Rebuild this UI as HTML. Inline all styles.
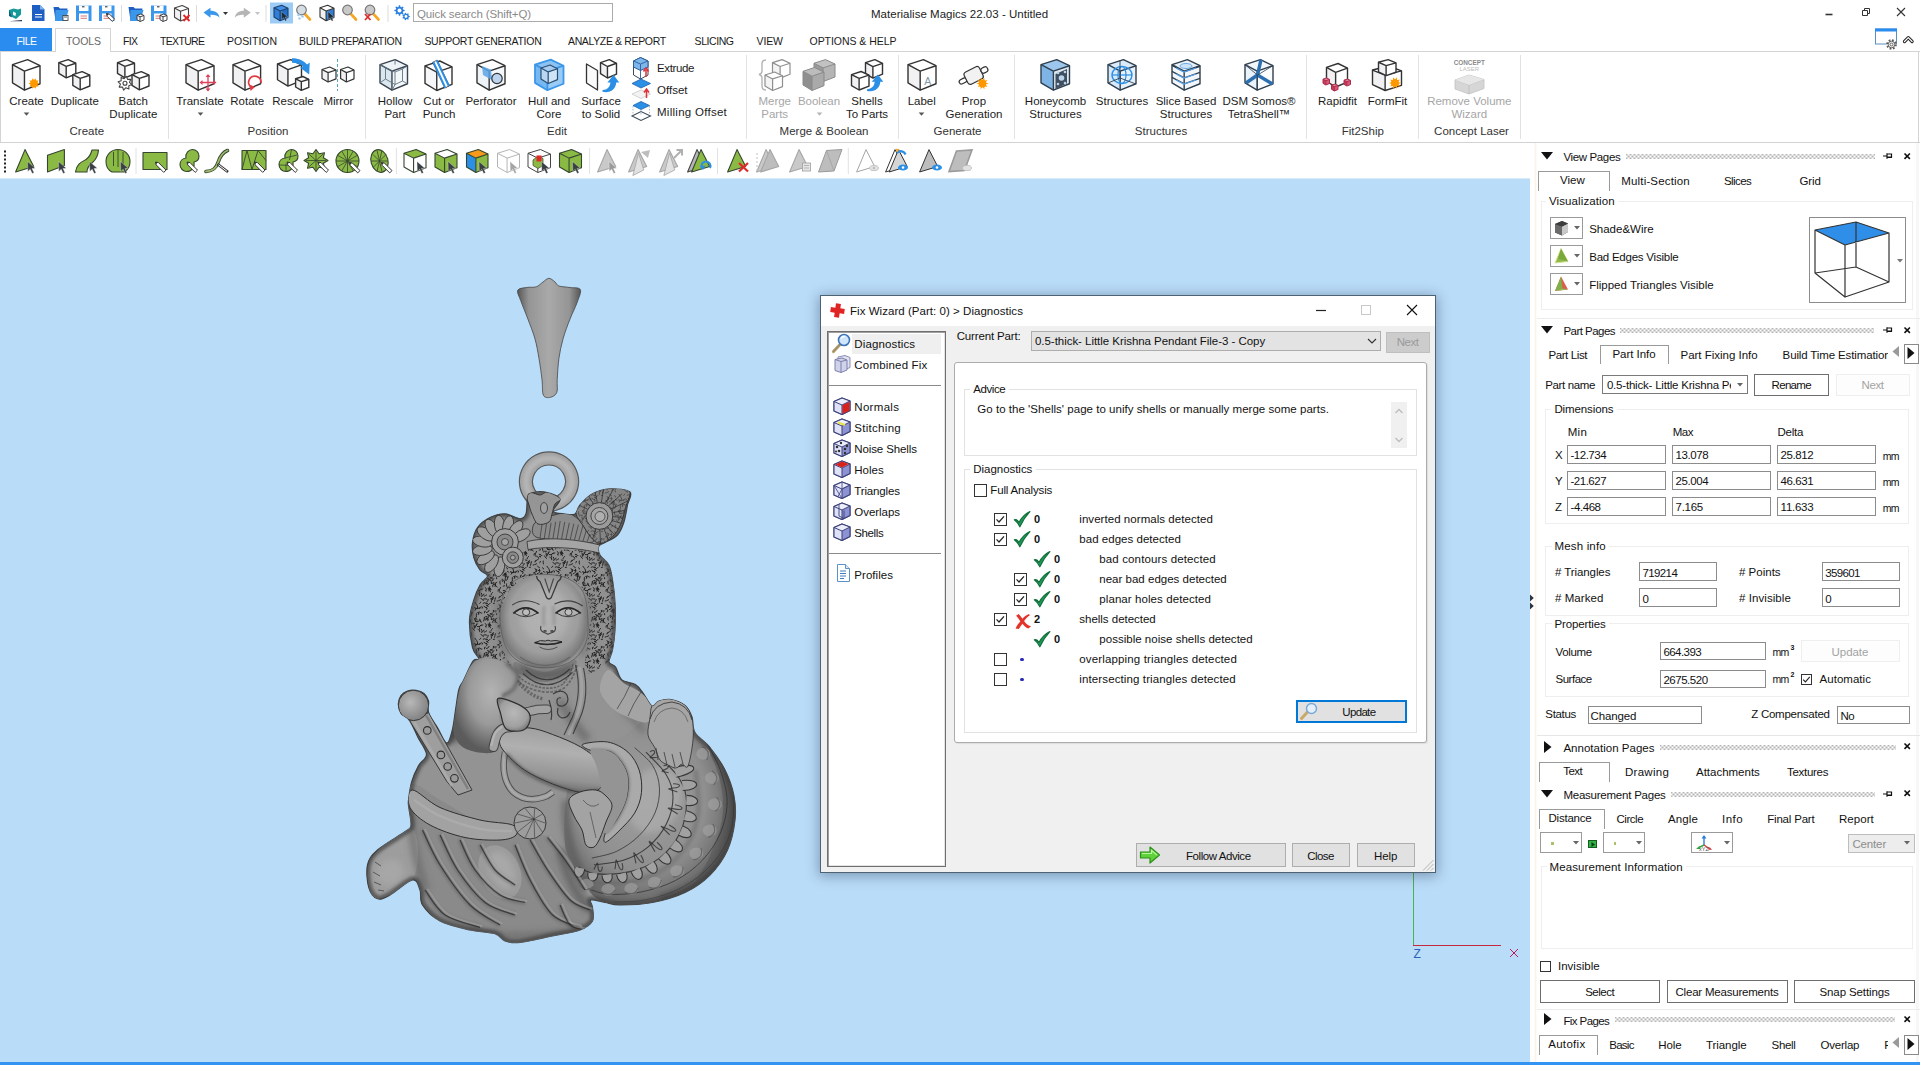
<!DOCTYPE html>
<html lang="en"><head><meta charset="utf-8"><title>Materialise Magics 22.03 - Untitled</title>
<style>
html,body{margin:0;padding:0;background:#fff}
body{width:1920px;height:1065px;overflow:hidden;position:relative;font-family:"Liberation Sans",sans-serif;font-size:11.5px;color:#1a1a1a}
.t{position:absolute;white-space:nowrap;line-height:14px;height:14px}
.a{position:absolute;overflow:visible}
div{box-sizing:border-box}
</style></head>
<body>
<div style="position:absolute;left:0px;top:0px;width:1920px;height:52px;background:#fff"></div>
<div style="position:absolute;left:413px;top:3px;width:200px;height:19px;border:1px solid #ababab;box-sizing:border-box;background:#fff"></div>
<span class="t" style="left:417px;top:7.02px;letter-spacing:-0.12px;color:#8a8a8a;">Quick search (Shift+Q)</span>
<span class="t" style="left:871px;top:6.62px;letter-spacing:0.02px;color:#222;">Materialise Magics 22.03 - Untitled</span>
<svg class="a" style="left:1815px;top:0" width="105" height="28" viewBox="0 0 105 28" fill="none" stroke="#333" stroke-width="1"><path d="M10.5 14.5h7" stroke-width="1.6"/><path d="M47.5 10.5h5v5h-5zM49.5 10.5v-2h5v5h-2" /><path d="M82 8l8 8M90 8l-8 8" stroke-width="1.1"/></svg>
<div style="position:absolute;left:0px;top:28px;width:52px;height:23px;background:#2b8cf0"></div>
<span class="t" style="left:16.5px;top:34.16px;font-size:10.5px;letter-spacing:-0.56px;color:#fff;">FILE</span>
<div style="position:absolute;left:0px;top:51px;width:1920px;height:1px;background:#d4d4d4"></div>
<div style="position:absolute;left:55px;top:28px;width:56px;height:24px;border:1px solid #d4d4d4;border-bottom:none;box-sizing:border-box;background:#fff"></div>
<span class="t" style="left:66px;top:34.16px;font-size:10.5px;letter-spacing:-0.1px;color:#666;">TOOLS</span>
<span class="t" style="left:123px;top:34.16px;font-size:10.5px;letter-spacing:-0.66px;color:#1a1a1a;">FIX</span>
<span class="t" style="left:160px;top:34.16px;font-size:10.5px;letter-spacing:-0.66px;color:#1a1a1a;">TEXTURE</span>
<span class="t" style="left:227px;top:34.16px;font-size:10.5px;letter-spacing:-0.02px;color:#1a1a1a;">POSITION</span>
<span class="t" style="left:299px;top:34.16px;font-size:10.5px;letter-spacing:-0.28px;color:#1a1a1a;">BUILD PREPARATION</span>
<span class="t" style="left:424.4px;top:34.16px;font-size:10.5px;letter-spacing:-0.27px;color:#1a1a1a;">SUPPORT GENERATION</span>
<span class="t" style="left:568px;top:34.16px;font-size:10.5px;letter-spacing:-0.36px;color:#1a1a1a;">ANALYZE &amp; REPORT</span>
<span class="t" style="left:694.6px;top:34.16px;font-size:10.5px;letter-spacing:-0.44px;color:#1a1a1a;">SLICING</span>
<span class="t" style="left:756.6px;top:34.16px;font-size:10.5px;letter-spacing:-0.14px;color:#1a1a1a;">VIEW</span>
<span class="t" style="left:809.5px;top:34.16px;font-size:10.5px;letter-spacing:-0.04px;color:#1a1a1a;">OPTIONS &amp; HELP</span>
<svg class="a" style="left:1873px;top:27px" width="47" height="25" viewBox="0 0 47 25" fill="none"><rect x="2.5" y="2" width="21" height="15" fill="#fff" stroke="#5b8fc4"/><rect x="2" y="1.5" width="22" height="3" fill="#2b8cf0"/><circle cx="18.500" cy="17.500" r="4.800" fill="#fff"/><circle cx="18.500" cy="17.500" r="4.200" fill="none" stroke="#5a5a5a" stroke-width="2.200" stroke-dasharray="1.700 1.600"/><circle cx="18.500" cy="17.500" r="3.300" fill="#eee" stroke="#5a5a5a" stroke-width="0.900"/><circle cx="18.500" cy="17.500" r="1.400" fill="#fff" stroke="#5a5a5a" stroke-width="0.900"/><path d="M31.500 14.500l3.800-3.800 3.800 3.800" stroke="#222" stroke-width="3.200" stroke-linejoin="round" stroke-linecap="round"/><path d="M31.500 14.500l3.800-3.800 3.800 3.800" stroke="#fff" stroke-width="1.200" stroke-linejoin="round" stroke-linecap="round"/></svg>
<div style="position:absolute;left:0px;top:52px;width:1920px;height:91px;background:#fff"></div>
<div style="position:absolute;left:0px;top:142px;width:1920px;height:1px;background:#d2d2d2"></div>
<div style="position:absolute;left:1918px;top:52px;width:1px;height:90px;background:#d4d4d4"></div>
<div style="position:absolute;left:0px;top:52px;width:1px;height:90px;background:#d4d4d4"></div>
<div style="position:absolute;left:168px;top:55px;width:1px;height:84px;background:#e2e2e2"></div>
<div style="position:absolute;left:365px;top:55px;width:1px;height:84px;background:#e2e2e2"></div>
<div style="position:absolute;left:746px;top:55px;width:1px;height:84px;background:#e2e2e2"></div>
<div style="position:absolute;left:897.5px;top:55px;width:1px;height:84px;background:#e2e2e2"></div>
<div style="position:absolute;left:1013.5px;top:55px;width:1px;height:84px;background:#e2e2e2"></div>
<div style="position:absolute;left:1305.7px;top:55px;width:1px;height:84px;background:#e2e2e2"></div>
<div style="position:absolute;left:1417.7px;top:55px;width:1px;height:84px;background:#e2e2e2"></div>
<div style="position:absolute;left:1520px;top:55px;width:1px;height:84px;background:#e2e2e2"></div>
<span class="t" style="left:9.25px;top:94.02px;color:#1c1c1c;">Create</span>
<svg class="a" style="left:23px;top:112px" width="7" height="4"><path d="M0.700 0.500h5.600l-2.800 3.200z" fill="#555"/></svg>
<span class="t" style="left:50.83px;top:94.02px;color:#1c1c1c;">Duplicate</span>
<span class="t" style="left:118.6px;top:94.02px;color:#1c1c1c;">Batch</span>
<span class="t" style="left:109.33px;top:107.02px;color:#1c1c1c;">Duplicate</span>
<span class="t" style="left:176.25px;top:94.02px;color:#1c1c1c;">Translate</span>
<svg class="a" style="left:196.5px;top:112px" width="7" height="4"><path d="M0.700 0.500h5.600l-2.800 3.200z" fill="#555"/></svg>
<span class="t" style="left:230.27px;top:94.02px;color:#1c1c1c;">Rotate</span>
<span class="t" style="left:272.23px;top:94.02px;color:#1c1c1c;">Rescale</span>
<span class="t" style="left:323.39px;top:94.02px;color:#1c1c1c;">Mirror</span>
<span class="t" style="left:377.73px;top:94.02px;color:#1c1c1c;">Hollow</span>
<span class="t" style="left:384.46px;top:107.02px;color:#1c1c1c;">Part</span>
<span class="t" style="left:423.35px;top:94.02px;color:#1c1c1c;">Cut or</span>
<span class="t" style="left:422.7px;top:107.02px;color:#1c1c1c;">Punch</span>
<span class="t" style="left:465.45px;top:94.02px;color:#1c1c1c;">Perforator</span>
<span class="t" style="left:527.91px;top:94.02px;color:#1c1c1c;">Hull and</span>
<span class="t" style="left:536.54px;top:107.02px;color:#1c1c1c;">Core</span>
<span class="t" style="left:581.2px;top:94.02px;color:#1c1c1c;">Surface</span>
<span class="t" style="left:581.83px;top:107.02px;color:#1c1c1c;">to Solid</span>
<span class="t" style="left:758.41px;top:94.02px;color:#a6a6a6;">Merge</span>
<span class="t" style="left:761.29px;top:107.02px;color:#a6a6a6;">Parts</span>
<span class="t" style="left:797.91px;top:94.02px;color:#a6a6a6;">Boolean</span>
<svg class="a" style="left:815.5px;top:112px" width="7" height="4"><path d="M0.700 0.500h5.600l-2.800 3.200z" fill="#b5b5b5"/></svg>
<span class="t" style="left:851.34px;top:94.02px;color:#1c1c1c;">Shells</span>
<span class="t" style="left:845.92px;top:107.02px;color:#1c1c1c;">To Parts</span>
<span class="t" style="left:907.64px;top:94.02px;color:#1c1c1c;">Label</span>
<svg class="a" style="left:918.2px;top:112px" width="7" height="4"><path d="M0.700 0.500h5.600l-2.800 3.200z" fill="#555"/></svg>
<span class="t" style="left:961.86px;top:94.02px;color:#1c1c1c;">Prop</span>
<span class="t" style="left:945.57px;top:107.02px;color:#1c1c1c;">Generation</span>
<span class="t" style="left:1024.83px;top:94.02px;color:#1c1c1c;">Honeycomb</span>
<span class="t" style="left:1029.31px;top:107.02px;color:#1c1c1c;">Structures</span>
<span class="t" style="left:1095.81px;top:94.02px;color:#1c1c1c;">Structures</span>
<span class="t" style="left:1155.64px;top:94.02px;color:#1c1c1c;">Slice Based</span>
<span class="t" style="left:1159.81px;top:107.02px;color:#1c1c1c;">Structures</span>
<span class="t" style="left:1222.5px;top:94.02px;color:#1c1c1c;">DSM Somos®</span>
<span class="t" style="left:1227.69px;top:107.02px;color:#1c1c1c;">TetraShell™</span>
<span class="t" style="left:1318.01px;top:94.02px;color:#1c1c1c;">Rapidfit</span>
<span class="t" style="left:1367.7px;top:94.02px;color:#1c1c1c;">FormFit</span>
<span class="t" style="left:1427.13px;top:94.02px;color:#a6a6a6;">Remove Volume</span>
<span class="t" style="left:1451.41px;top:107.02px;color:#a6a6a6;">Wizard</span>
<span class="t" style="left:69.55px;top:124.02px;color:#333;">Create</span>
<span class="t" style="left:247.55px;top:124.02px;color:#333;">Position</span>
<span class="t" style="left:547.09px;top:124.02px;color:#333;">Edit</span>
<span class="t" style="left:779.59px;top:124.02px;color:#333;">Merge &amp; Boolean</span>
<span class="t" style="left:933.55px;top:124.02px;color:#333;">Generate</span>
<span class="t" style="left:1134.81px;top:124.02px;color:#333;">Structures</span>
<span class="t" style="left:1341.71px;top:124.02px;color:#333;">Fit2Ship</span>
<span class="t" style="left:1434.12px;top:124.02px;color:#333;">Concept Laser</span>
<span class="t" style="left:657px;top:60.52px;letter-spacing:-0.37px;color:#1c1c1c;">Extrude</span>
<span class="t" style="left:657px;top:82.52px;letter-spacing:0.01px;color:#1c1c1c;">Offset</span>
<span class="t" style="left:657px;top:104.52px;letter-spacing:0.27px;color:#1c1c1c;">Milling Offset</span>
<svg class="a" style="left:0;top:0" width="420" height="28" viewBox="0 0 420 28" fill="none">
<path d="M9 10l4.500-1.500 4.500 1 3-1v6l-5 4.500-7-3.500z" fill="#159a9a"/><path d="M13 11.500l3 1.500-0.500 3-2.500-1z" fill="#fff"/><path d="M9 10v6l3 1.500z" fill="#0b5f7a"/><path d="M9 21.300l13-1.200v1.200z" fill="#1a2a4a"/>
<path d="M32 5h8l4.500 4.500v11.500h-12.500z" fill="#1f5fc4"/><path d="M40 5l4.500 4.500h-4.500z" fill="#7db4f0"/><path d="M35 14.500h7M35 17h7" stroke="#fff" stroke-width="1"/>
<path d="M53.500 7h5l1.500 1.500h7.500l-2 12h-10z" fill="#1f5fc4"/><path d="M55.500 10h13l-3 11h-10.500z" fill="#3b97ea"/><rect x="63" y="15.500" width="5" height="5" fill="#fff" stroke="#333" stroke-width="0.800"/><path d="M64 17h3" stroke="#333" stroke-width="0.800"/>
<path d="M76 5.500h15.500v15.500h-15.500z" fill="#3b97ea"/><rect x="79" y="5.500" width="9.500" height="5.500" fill="#fff"/><rect x="79" y="13.500" width="9.500" height="7.500" fill="#fff"/><path d="M80.5 16h6.500M80.5 18.300h6.500" stroke="#d05050" stroke-width="0.800"/><rect x="82" y="6.300" width="2.500" height="1" fill="#222"/>
<path d="M99 5.500h15.500v15.500h-15.500z" fill="#3b97ea"/><rect x="102" y="5.500" width="9.500" height="5.500" fill="#fff"/><rect x="102" y="13.500" width="9.500" height="7.500" fill="#fff"/><path d="M103.5 16h6.500M103.5 18.300h6.500" stroke="#d05050" stroke-width="0.800"/><rect x="105" y="6.300" width="2.500" height="1" fill="#222"/>
<path transform="translate(106.5 13.5)" d="M0 0l3 0.600 5 5-2.300 2.300-5-5z" fill="#fff" stroke="#333" stroke-width="1"/><path transform="translate(106.5 13.5)" d="M0 0l2.200 0.500-1.600 1.700z" fill="#333"/>
<path d="M121.500 5v17" stroke="#dcdcdc" stroke-width="1"/>
<path d="M128.500 7h5l1.500 1.500h7.500l-2 12h-10z" fill="#1f5fc4"/><path d="M130.500 10h13l-3 11h-10.500z" fill="#3b97ea"/>
<path d="M137 15.24L140.04 16.81L140.04 21.5L137 19.7Z" fill="#f1f1f3"/><path d="M140.04 16.81L144 15.5L144 19.93L140.04 21.5Z" fill="#ffffff"/><path d="M137 15.24L140.85 14L144 15.5L140.04 16.81Z" fill="#ffffff"/><path d="M140.85 14L144 15.5L144 19.93L140.04 21.5L137 19.7L137 15.24Z" fill="none" stroke="#333333" stroke-width="0.9" stroke-linejoin="round"/><path d="M137 15.24L140.04 16.81L144 15.5M140.04 16.81L140.04 21.5" fill="none" stroke="#333333" stroke-width="0.9" stroke-linejoin="round"/>
<path d="M151 5.500h15.500v15.500h-15.500z" fill="#3b97ea"/><rect x="154" y="5.500" width="9.500" height="5.500" fill="#fff"/><rect x="154" y="13.500" width="9.500" height="7.500" fill="#fff"/><path d="M155.5 16h6.500M155.5 18.300h6.500" stroke="#d05050" stroke-width="0.800"/><rect x="157" y="6.300" width="2.500" height="1" fill="#222"/>
<path d="M160 15.24L163.04 16.81L163.04 21.5L160 19.7Z" fill="#f1f1f3"/><path d="M163.04 16.81L167 15.5L167 19.93L163.04 21.5Z" fill="#ffffff"/><path d="M160 15.24L163.85 14L167 15.5L163.04 16.81Z" fill="#ffffff"/><path d="M163.85 14L167 15.5L167 19.93L163.04 21.5L160 19.7L160 15.24Z" fill="none" stroke="#333333" stroke-width="0.9" stroke-linejoin="round"/><path d="M160 15.24L163.04 16.81L167 15.5M163.04 16.81L163.04 21.5" fill="none" stroke="#333333" stroke-width="0.9" stroke-linejoin="round"/>
<path d="M174.5 8.06L180.59 11.31L180.59 21L174.5 17.28Z" fill="#f1f1f3"/><path d="M180.59 11.31L188.5 8.6L188.5 17.75L180.59 21Z" fill="#ffffff"/><path d="M174.5 8.06L182.2 5.5L188.5 8.6L180.59 11.31Z" fill="#ffffff"/><path d="M182.2 5.5L188.5 8.6L188.5 17.75L180.59 21L174.5 17.28L174.5 8.06Z" fill="none" stroke="#444" stroke-width="1.1" stroke-linejoin="round"/><path d="M174.5 8.06L180.59 11.31L188.5 8.6M180.59 11.31L180.59 21" fill="none" stroke="#444" stroke-width="1.1" stroke-linejoin="round"/>
<path d="M183.500 15l6 6M189.500 15l-6 6" stroke="#e02a2a" stroke-width="1.800"/>
<path d="M196.500 5v17" stroke="#dcdcdc" stroke-width="1"/>
<path d="M203.500 12.500l7-4.800v3c5 0 8.500 2.500 9 7-2-2.500-5-3.200-9-3v3z" fill="#3b97ea"/><path d="M223 12h5l-2.500 3z" fill="#333"/>
<path d="M250.800 12.500l-7-4.800v3c-5 0-8.500 2.500-9 7 2-2.500 5-3.200 9-3v3z" fill="#b5b5b5"/><path d="M255 12h5l-2.500 3z" fill="#c2c2c2"/>
<path d="M266 5v17" stroke="#dcdcdc" stroke-width="1"/>
<rect x="270" y="2.500" width="23" height="21" fill="#9ccbf6"/>
<path d="M274 7.76L280.09 11.01L280.09 20.7L274 16.98Z" fill="#2f7fd8"/><path d="M280.09 11.01L288 8.3L288 17.45L280.09 20.7Z" fill="#1f6fc8"/><path d="M274 7.76L281.7 5.2L288 8.3L280.09 11.01Z" fill="#3f8fe8"/><path d="M281.7 5.2L288 8.3L288 17.45L280.09 20.7L274 16.98L274 7.76Z" fill="none" stroke="#1f3f6a" stroke-width="1.1" stroke-linejoin="round"/><path d="M274 7.76L280.09 11.01L288 8.3M280.09 11.01L280.09 20.7" fill="none" stroke="#1f3f6a" stroke-width="1.1" stroke-linejoin="round"/>
<path transform="translate(281.5 11.5) scale(0.8)" d="M0 0l0.300 10 2.400-2.300 2 4.300 1.800-0.800-2-4.200 3.300-0.200z" fill="#1a2a3a" stroke="#fff" stroke-width="0.300"/>
<path d="M304.5 13.5l5.500 6" stroke="#f5a623" stroke-width="2.600" stroke-linecap="round"/><circle cx="301.5" cy="10" r="4.800" fill="#d5dde5" stroke="#777" stroke-width="1.200"/>
<circle cx="298.500" cy="15" r="1.300" fill="#9ccbf6"/><circle cx="302.500" cy="16.500" r="1.300" fill="#9ccbf6"/><circle cx="299.500" cy="18.500" r="1.200" fill="#9ccbf6"/>
<path d="M320 7.76L326.09 11.01L326.09 20.7L320 16.98Z" fill="#f1f1f3"/><path d="M326.09 11.01L334 8.3L334 17.45L326.09 20.7Z" fill="#2f7fd8"/><path d="M320 7.76L327.7 5.2L334 8.3L326.09 11.01Z" fill="#ffffff"/><path d="M327.7 5.2L334 8.3L334 17.45L326.09 20.7L320 16.98L320 7.76Z" fill="none" stroke="#333" stroke-width="1.1" stroke-linejoin="round"/><path d="M320 7.76L326.09 11.01L334 8.3M326.09 11.01L326.09 20.7" fill="none" stroke="#333" stroke-width="1.1" stroke-linejoin="round"/>
<path transform="translate(328 11.5) scale(0.8)" d="M0 0l0.300 10 2.400-2.300 2 4.300 1.800-0.800-2-4.200 3.300-0.200z" fill="#1a2a3a" stroke="#fff" stroke-width="0.300"/>
<path d="M350.5 13.5l5.500 6" stroke="#f5a623" stroke-width="2.600" stroke-linecap="round"/><circle cx="347.5" cy="10" r="4.800" fill="#c9c9c9" stroke="#777" stroke-width="1.200"/>
<path d="M373 13.5l5.500 6" stroke="#f5a623" stroke-width="2.600" stroke-linecap="round"/><circle cx="370" cy="10" r="4.800" fill="#c9c9c9" stroke="#777" stroke-width="1.200"/>
<path d="M365 14l5.500 6M370.500 14l-5.500 6" stroke="#e02a2a" stroke-width="1.800"/>
<path d="M388 5v17" stroke="#dcdcdc" stroke-width="1"/>
<path d="M404.66 9.88L404.66 11.12L403.11 11.51L402.76 12.34L403.59 13.71L402.71 14.59L401.34 13.76L400.51 14.11L400.12 15.66L398.88 15.66L398.49 14.11L397.66 13.76L396.29 14.59L395.41 13.71L396.24 12.34L395.89 11.51L394.34 11.12L394.34 9.88L395.89 9.49L396.24 8.66L395.41 7.29L396.29 6.41L397.66 7.24L398.49 6.89L398.88 5.34L400.12 5.34L400.51 6.89L401.34 7.24L402.71 6.41L403.59 7.29L402.76 8.66L403.11 9.49Z" fill="#2b7fe0"/><circle cx="399.5" cy="10.5" r="2" fill="#fff"/>
<path d="M409.77 16.05L409.77 16.95L408.59 17.38L408.31 17.97L408.71 19.17L408 19.73L406.92 19.08L406.29 19.22L405.6 20.28L404.72 20.08L404.56 18.83L404.05 18.42L402.8 18.55L402.4 17.73L403.28 16.83L403.28 16.17L402.4 15.27L402.8 14.45L404.05 14.58L404.56 14.17L404.72 12.92L405.6 12.72L406.29 13.78L406.92 13.92L408 13.27L408.71 13.83L408.31 15.03L408.59 15.62Z" fill="#2b7fe0"/><circle cx="406" cy="16.5" r="1.4" fill="#fff"/>
</svg>
<svg class="a" style="left:0;top:0" width="1530" height="142" viewBox="0 0 1530 142" fill="none">
<path d="M12.5 64.65L24.46 71.08L24.46 90.2L12.5 82.86Z" fill="#f1f1f3"/><path d="M24.46 71.08L40 65.72L40 83.77L24.46 90.2Z" fill="#ffffff"/><path d="M12.5 64.65L27.62 59.6L40 65.72L24.46 71.08Z" fill="#ffffff"/><path d="M27.62 59.6L40 65.72L40 83.77L24.46 90.2L12.5 82.86L12.5 64.65Z" fill="none" stroke="#333333" stroke-width="1.4" stroke-linejoin="round"/><path d="M12.5 64.65L24.46 71.08L40 65.72M24.46 71.08L24.46 90.2" fill="none" stroke="#333333" stroke-width="1.4" stroke-linejoin="round"/>
<path d="M39.6 83.5L37.23 84.55L38.53 86.79L36 86.25L35.73 88.83L34 86.9L32.27 88.83L32 86.25L29.47 86.79L30.77 84.55L28.4 83.5L30.77 82.45L29.47 80.21L32 80.75L32.27 78.17L34 80.1L35.73 78.17L36 80.75L38.53 80.21L37.23 82.45Z" fill="#ff9800"/><circle cx="34" cy="83.5" r="3.7" fill="#ff9800"/>
<path d="M58.8 62.6L66.19 66.42L66.19 77.8L58.8 73.43Z" fill="#f1f1f3"/><path d="M66.19 66.42L75.8 63.24L75.8 73.98L66.19 77.8Z" fill="#ffffff"/><path d="M58.8 62.6L68.15 59.6L75.8 63.24L66.19 66.42Z" fill="#ffffff"/><path d="M68.15 59.6L75.8 63.24L75.8 73.98L66.19 77.8L58.8 73.43L58.8 62.6Z" fill="none" stroke="#333333" stroke-width="1.4" stroke-linejoin="round"/><path d="M58.8 62.6L66.19 66.42L75.8 63.24M66.19 66.42L66.19 77.8" fill="none" stroke="#333333" stroke-width="1.4" stroke-linejoin="round"/>
<path d="M72.8 74.6L80.19 78.42L80.19 89.8L72.8 85.43Z" fill="#f1f1f3"/><path d="M80.19 78.42L89.8 75.24L89.8 85.98L80.19 89.8Z" fill="#ffffff"/><path d="M72.8 74.6L82.15 71.6L89.8 75.24L80.19 78.42Z" fill="#ffffff"/><path d="M82.15 71.6L89.8 75.24L89.8 85.98L80.19 89.8L72.8 85.43L72.8 74.6Z" fill="none" stroke="#333333" stroke-width="1.4" stroke-linejoin="round"/><path d="M72.8 74.6L80.19 78.42L89.8 75.24M80.19 78.42L80.19 89.8" fill="none" stroke="#333333" stroke-width="1.4" stroke-linejoin="round"/>
<path d="M117.5 62.6L124.89 66.42L124.89 77.8L117.5 73.43Z" fill="#f1f1f3"/><path d="M124.89 66.42L134.5 63.24L134.5 73.98L124.89 77.8Z" fill="#ffffff"/><path d="M117.5 62.6L126.85 59.6L134.5 63.24L124.89 66.42Z" fill="#ffffff"/><path d="M126.85 59.6L134.5 63.24L134.5 73.98L124.89 77.8L117.5 73.43L117.5 62.6Z" fill="none" stroke="#333333" stroke-width="1.4" stroke-linejoin="round"/><path d="M117.5 62.6L124.89 66.42L134.5 63.24M124.89 66.42L124.89 77.8" fill="none" stroke="#333333" stroke-width="1.4" stroke-linejoin="round"/>
<path d="M132 74.6L139.4 78.42L139.4 89.8L132 85.43Z" fill="#f1f1f3"/><path d="M139.4 78.42L149 75.24L149 85.98L139.4 89.8Z" fill="#ffffff"/><path d="M132 74.6L141.35 71.6L149 75.24L139.4 78.42Z" fill="#ffffff"/><path d="M141.35 71.6L149 75.24L149 85.98L139.4 89.8L132 85.43L132 74.6Z" fill="none" stroke="#333333" stroke-width="1.4" stroke-linejoin="round"/><path d="M132 74.6L139.4 78.42L149 75.24M139.4 78.42L139.4 89.8" fill="none" stroke="#333333" stroke-width="1.4" stroke-linejoin="round"/>
<path d="M131.87 84.57L128.82 85.76L128.89 89.02L125.9 87.71L123.63 90.07L122.44 87.02L119.18 87.09L120.49 84.1L118.13 81.83L121.18 80.64L121.11 77.38L124.1 78.69L126.37 76.33L127.56 79.38L130.82 79.31L129.51 82.3Z" fill="#fff" stroke="#444" stroke-width="1.1" stroke-linejoin="round"/><circle cx="125" cy="83.200" r="2" fill="#fff" stroke="#444" stroke-width="1.100"/>
<path d="M186 64.65L198.18 71.08L198.18 90.2L186 82.86Z" fill="#f1f1f3"/><path d="M198.18 71.08L214 65.72L214 83.77L198.18 90.2Z" fill="#ffffff"/><path d="M186 64.65L201.4 59.6L214 65.72L198.18 71.08Z" fill="#ffffff"/><path d="M201.4 59.6L214 65.72L214 83.77L198.18 90.2L186 82.86L186 64.65Z" fill="none" stroke="#333333" stroke-width="1.4" stroke-linejoin="round"/><path d="M186 64.65L198.18 71.08L214 65.72M198.18 71.08L198.18 90.2" fill="none" stroke="#333333" stroke-width="1.4" stroke-linejoin="round"/>
<path d="M201 82.500h14M208 75.500v15" stroke="#e0405a" stroke-width="1.300"/><path d="M199.500 82.500l3-2.500v5zM216.500 82.500l-3-2.500v5zM208 74l-2.500 3h5zM208 91.500l-2.500-3h5z" fill="#e0405a"/>
<path d="M233 64.65L245.01 71.08L245.01 90.2L233 82.86Z" fill="#f1f1f3"/><path d="M245.01 71.08L260.6 65.72L260.6 83.77L245.01 90.2Z" fill="#ffffff"/><path d="M233 64.65L248.18 59.6L260.6 65.72L245.01 71.08Z" fill="#ffffff"/><path d="M248.18 59.6L260.6 65.72L260.6 83.77L245.01 90.2L233 82.86L233 64.65Z" fill="none" stroke="#333333" stroke-width="1.4" stroke-linejoin="round"/><path d="M233 64.65L245.01 71.08L260.6 65.72M245.01 71.08L245.01 90.2" fill="none" stroke="#333333" stroke-width="1.4" stroke-linejoin="round"/>
<path d="M251.500 87.500a6.200 6.200 0 1 1 9.500-4.500" stroke="#e03a44" stroke-width="1.800"/><path d="M249.500 84.500l5.500 2.500-4.500 4z" fill="#e03a44"/>
<path d="M277.5 63.97L287.94 69.54L287.94 86.1L277.5 79.74Z" fill="#f1f1f3"/><path d="M287.94 69.54L301.5 64.9L301.5 80.53L287.94 86.1Z" fill="#ffffff"/><path d="M277.5 63.97L290.7 59.6L301.5 64.9L287.94 69.54Z" fill="#ffffff"/><path d="M290.7 59.6L301.5 64.9L301.5 80.53L287.94 86.1L277.5 79.74L277.5 63.97Z" fill="none" stroke="#333333" stroke-width="1.4" stroke-linejoin="round"/><path d="M277.5 63.97L287.94 69.54L301.5 64.9M287.94 69.54L287.94 86.1" fill="none" stroke="#333333" stroke-width="1.4" stroke-linejoin="round"/>
<path d="M292 58.200c7 0 12 2.500 15 6.300l2.700-2-0.500 12-9-6.700 2.800-1.300c-2.500-2.200-6.500-3.500-11-3.700z" fill="#2b8fe6"/>
<path d="M295.6 78.78L301.34 81.67L301.34 90.3L295.6 86.99Z" fill="#f1f1f3"/><path d="M301.34 81.67L308.8 79.26L308.8 87.4L301.34 90.3Z" fill="#ffffff"/><path d="M295.6 78.78L302.86 76.5L308.8 79.26L301.34 81.67Z" fill="#ffffff"/><path d="M302.86 76.5L308.8 79.26L308.8 87.4L301.34 90.3L295.6 86.99L295.6 78.78Z" fill="none" stroke="#333333" stroke-width="1.4" stroke-linejoin="round"/><path d="M295.6 78.78L301.34 81.67L308.8 79.26M301.34 81.67L301.34 90.3" fill="none" stroke="#333333" stroke-width="1.4" stroke-linejoin="round"/>
<path d="M322 69.47L328.09 72.62L328.09 82L322 78.4Z" fill="#f1f1f3"/><path d="M328.09 72.62L336 70L336 78.85L328.09 82Z" fill="#ffffff"/><path d="M322 69.47L329.7 67L336 70L328.09 72.62Z" fill="#ffffff"/><path d="M329.7 67L336 70L336 78.85L328.09 82L322 78.4L322 69.47Z" fill="none" stroke="#333333" stroke-width="1.2" stroke-linejoin="round"/><path d="M322 69.47L328.09 72.62L336 70M328.09 72.62L328.09 82" fill="none" stroke="#333333" stroke-width="1.2" stroke-linejoin="round"/>
<path d="M340.6 69.47L346.43 72.62L346.43 82L340.6 78.4Z" fill="#f1f1f3"/><path d="M346.43 72.62L354 70L354 78.85L346.43 82Z" fill="#ffffff"/><path d="M340.6 69.47L347.97 67L354 70L346.43 72.62Z" fill="#ffffff"/><path d="M347.97 67L354 70L354 78.85L346.43 82L340.6 78.4L340.6 69.47Z" fill="none" stroke="#333333" stroke-width="1.2" stroke-linejoin="round"/><path d="M340.6 69.47L346.43 72.62L354 70M346.43 72.62L346.43 82" fill="none" stroke="#333333" stroke-width="1.2" stroke-linejoin="round"/>
<path d="M337.500 59v32" stroke="#5aa7b8" stroke-width="1" stroke-dasharray="3 2"/>
<path d="M380 64.65L391.96 71.08L391.96 90.2L380 82.86Z" fill="#dbe7ef"/><path d="M391.96 71.08L407.5 65.72L407.5 83.77L391.96 90.2Z" fill="#f3f7fa"/><path d="M380 64.65L395.12 59.6L407.5 65.72L391.96 71.08Z" fill="#eef3f7"/><path d="M395.12 59.6L407.5 65.72L407.5 83.77L391.96 90.2L380 82.86L380 64.65Z" fill="none" stroke="#3a4450" stroke-width="1.4" stroke-linejoin="round"/><path d="M380 64.65L391.96 71.08L407.5 65.72M391.96 71.08L391.96 90.2" fill="none" stroke="#3a4450" stroke-width="1.4" stroke-linejoin="round"/>
<path d="M385.500 67.500l9.500 4.500 7.500-3M395 72v12.500M385.500 67.500v11.500l9.500 5.500 7.500-3.500v-12.500M380 64.500l5.500 3M407.500 65.700l-5 3.300M392 90.200l3-5.700M380 82.800l5.500-3.800M407.500 83.800l-5-2.800M395.100 59.600l-0.100 5" stroke="#5f7382" stroke-width="0.900"/>
<path d="M425 65.87L436.75 72.06L436.75 90.5L425 83.42Z" fill="#f6f6f8"/><path d="M436.75 72.06L452 66.9L452 84.31L436.75 90.5Z" fill="#ffffff"/><path d="M425 65.87L439.85 61L452 66.9L436.75 72.06Z" fill="#ffffff"/><path d="M439.85 61L452 66.9L452 84.31L436.75 90.5L425 83.42L425 65.87Z" fill="none" stroke="#333333" stroke-width="1.4" stroke-linejoin="round"/><path d="M425 65.87L436.75 72.06L452 66.9M436.75 72.06L436.75 90.5" fill="none" stroke="#333333" stroke-width="1.4" stroke-linejoin="round"/>
<path d="M432.600 62.300l4.600-2.200 12.200 25.600-4.600 2.400z" fill="#fff" stroke="#333" stroke-width="0.700"/><path d="M433.400 62l11.900 25.800M436.700 60.400l12.100 25.600" stroke="#2b8fe6" stroke-width="1.900"/>
<path d="M477 64.65L489.18 71.08L489.18 90.2L477 82.86Z" fill="#eef3f8"/><path d="M489.18 71.08L505 65.72L505 83.77L489.18 90.2Z" fill="#f4f7fb"/><path d="M477 64.65L492.4 59.6L505 65.72L489.18 71.08Z" fill="#fdfdfd"/><path d="M492.4 59.6L505 65.72L505 83.77L489.18 90.2L477 82.86L477 64.65Z" fill="none" stroke="#333333" stroke-width="1.4" stroke-linejoin="round"/><path d="M477 64.65L489.18 71.08L505 65.72M489.18 71.08L489.18 90.2" fill="none" stroke="#333333" stroke-width="1.4" stroke-linejoin="round"/>
<path d="M482 66l9 3.500 1 10.500-9-5z" fill="#5aa3e8" opacity="0.850"/><circle cx="497" cy="78.500" r="5.200" fill="#bcd4f0" stroke="#333" stroke-width="1.200"/>
<path d="M535 64.65L547.4 71.08L547.4 90.2L535 82.86Z" fill="#78b8f0"/><path d="M547.4 71.08L563.5 65.72L563.5 83.77L547.4 90.2Z" fill="#9acbf5"/><path d="M535 64.65L550.67 59.6L563.5 65.72L547.4 71.08Z" fill="#8cc3f3"/><path d="M550.67 59.6L563.5 65.72L563.5 83.77L547.4 90.2L535 82.86L535 64.65Z" fill="none" stroke="#3b97ea" stroke-width="1.8" stroke-linejoin="round"/><path d="M535 64.65L547.4 71.08L563.5 65.72M547.4 71.08L547.4 90.2" fill="none" stroke="#3b97ea" stroke-width="1.8" stroke-linejoin="round"/>
<path d="M541 68.05L548.18 71.94L548.18 83.5L541 79.06Z" fill="#b9d6f2"/><path d="M548.18 71.94L557.5 68.7L557.5 79.61L548.18 83.5Z" fill="#cfe3f7"/><path d="M541 68.05L550.08 65L557.5 68.7L548.18 71.94Z" fill="#a8ccf0"/><path d="M550.08 65L557.5 68.7L557.5 79.61L548.18 83.5L541 79.06L541 68.05Z" fill="none" stroke="#2a4f73" stroke-width="1.2" stroke-linejoin="round"/><path d="M541 68.05L548.18 71.94L557.5 68.7M548.18 71.94L548.18 83.5" fill="none" stroke="#2a4f73" stroke-width="1.2" stroke-linejoin="round"/>
<path d="M586.500 64l11 6.500v19.500l-11-7z" fill="#fafafa" stroke="#333" stroke-width="1.300" stroke-linejoin="round"/>
<path d="M600.5 62.64L607.46 66.5L607.46 78L600.5 73.58Z" fill="#f1f1f3"/><path d="M607.46 66.5L616.5 63.28L616.5 74.14L607.46 78Z" fill="#ffffff"/><path d="M600.5 62.64L609.3 59.6L616.5 63.28L607.46 66.5Z" fill="#ffffff"/><path d="M609.3 59.6L616.5 63.28L616.5 74.14L607.46 78L600.5 73.58L600.5 62.64Z" fill="none" stroke="#333333" stroke-width="1.4" stroke-linejoin="round"/><path d="M600.5 62.64L607.46 66.5L616.5 63.28M607.46 66.5L607.46 78" fill="none" stroke="#333333" stroke-width="1.4" stroke-linejoin="round"/>
<path transform="translate(602.5 75) scale(1.08)" d="M0 14c4.500-0.300 7-2.800 7.300-7h-2.800l5.800-7 5.200 7h-2.800c-0.500 6.500-5.500 10-12.700 8.600z" fill="#2b8fe6"/>
<path d="M633.500 61l7-3.500 7.500 3.500v14l-7.500 4-7-4z" fill="#fff" stroke="#3a4a5a" stroke-width="1"/><path d="M633.500 61l7-3.500 7.500 3.500v6l-7.500 3.500-7-3.500z" fill="#7db6ea" stroke="#2a5f9a" stroke-width="1"/><path d="M633.500 61l7 3 7.500-3M640.500 64v15" stroke="#2a5f9a" stroke-width="0.900"/><path d="M646 77v-7M643.500 71.500l2.500-3.500 2.500 3.500" stroke="#e0303a" stroke-width="1.500"/>
<path d="M632 83.500l9-4.500 9.500 4.500-9.500 4.500z" fill="#2b8fe6" stroke="#1f5fa8" stroke-width="0.800"/><path d="M632 94l9-4 9.500 4-9.500 4.500z" fill="#f3f3f3" stroke="#c9c9c9" stroke-width="0.800"/><path d="M646.500 98v-8M644 92.500l2.500-3.500 2.500 3.500" stroke="#e0303a" stroke-width="1.500"/>
<path d="M633 105.500l8-4 8.500 4-8.500 4z" fill="#2b8fe6" stroke="#1f5fa8" stroke-width="0.800"/><path d="M632 116l9-4.500 9.500 4.500-9.500 4.500z" fill="#fff" stroke="#3a4a5a" stroke-width="1.100"/><path d="M633 106v9M649.500 106v9M641 110v6" stroke="#9ab" stroke-width="0.800" stroke-dasharray="1.500 1.500"/>
<path d="M772.5 62.65L780.11 66.54L780.11 78.1L772.5 73.66Z" fill="#f4f4f4"/><path d="M780.11 66.54L790 63.3L790 74.22L780.11 78.1Z" fill="#ffffff"/><path d="M772.5 62.65L782.12 59.6L790 63.3L780.11 66.54Z" fill="#ffffff"/><path d="M782.12 59.6L790 63.3L790 74.22L780.11 78.1L772.5 73.66L772.5 62.65Z" fill="none" stroke="#8f8f8f" stroke-width="1.2" stroke-linejoin="round"/><path d="M772.5 62.65L780.11 66.54L790 63.3M780.11 66.54L780.11 78.1" fill="none" stroke="#8f8f8f" stroke-width="1.2" stroke-linejoin="round"/>
<path d="M765 75.05L772.61 78.94L772.61 90.5L765 86.06Z" fill="#f4f4f4"/><path d="M772.61 78.94L782.5 75.7L782.5 86.61L772.61 90.5Z" fill="#ffffff"/><path d="M765 75.05L774.62 72L782.5 75.7L772.61 78.94Z" fill="#ffffff"/><path d="M774.62 72L782.5 75.7L782.5 86.61L772.61 90.5L765 86.06L765 75.05Z" fill="none" stroke="#8f8f8f" stroke-width="1.2" stroke-linejoin="round"/><path d="M765 75.05L772.61 78.94L782.5 75.7M772.61 78.94L772.61 90.5" fill="none" stroke="#8f8f8f" stroke-width="1.2" stroke-linejoin="round"/>
<path d="M766 60c-3 0-4 1.500-4 4v7c0 2-1 3-3 3.500c2 0.500 3 1.500 3 3.500v8c0 2.500 1 4 4 4" stroke="#b5b5b5" stroke-width="1.400"/>
<path d="M814 63.23L823.13 67.85L823.13 81.6L814 76.32Z" fill="#9a9a9a"/><path d="M823.13 67.85L835 64L835 76.98L823.13 81.6Z" fill="#b5b5b5"/><path d="M814 63.23L825.55 59.6L835 64L823.13 67.85Z" fill="#c2c2c2"/><path d="M825.55 59.6L835 64L835 76.98L823.13 81.6L814 76.32L814 63.23Z" fill="none" stroke="#8a8a8a" stroke-width="1" stroke-linejoin="round"/><path d="M814 63.23L823.13 67.85L835 64M823.13 67.85L823.13 81.6" fill="none" stroke="#8a8a8a" stroke-width="1" stroke-linejoin="round"/>
<path d="M803 71.3L812.13 76.12L812.13 90.5L803 84.98Z" fill="#8f8f8f"/><path d="M812.13 76.12L824 72.1L824 85.67L812.13 90.5Z" fill="#aaaaaa"/><path d="M803 71.3L814.55 67.5L824 72.1L812.13 76.12Z" fill="#bcbcbc"/><path d="M814.55 67.5L824 72.1L824 85.67L812.13 90.5L803 84.98L803 71.3Z" fill="none" stroke="#8a8a8a" stroke-width="1" stroke-linejoin="round"/><path d="M803 71.3L812.13 76.12L824 72.1M812.13 76.12L812.13 90.5" fill="none" stroke="#8a8a8a" stroke-width="1" stroke-linejoin="round"/>
<path d="M865.5 62.65L872.89 66.54L872.89 78.1L865.5 73.66Z" fill="#f1f1f3"/><path d="M872.89 66.54L882.5 63.3L882.5 74.22L872.89 78.1Z" fill="#ffffff"/><path d="M865.5 62.65L874.85 59.6L882.5 63.3L872.89 66.54Z" fill="#ffffff"/><path d="M874.85 59.6L882.5 63.3L882.5 74.22L872.89 78.1L865.5 73.66L865.5 62.65Z" fill="none" stroke="#333333" stroke-width="1.4" stroke-linejoin="round"/><path d="M865.5 62.65L872.89 66.54L882.5 63.3M872.89 66.54L872.89 78.1" fill="none" stroke="#333333" stroke-width="1.4" stroke-linejoin="round"/>
<path d="M851.5 74.55L859.11 78.44L859.11 90L851.5 85.56Z" fill="#f1f1f3"/><path d="M859.11 78.44L869 75.2L869 86.11L859.11 90Z" fill="#ffffff"/><path d="M851.5 74.55L861.12 71.5L869 75.2L859.11 78.44Z" fill="#ffffff"/><path d="M861.12 71.5L869 75.2L869 86.11L859.11 90L851.5 85.56L851.5 74.55Z" fill="none" stroke="#333333" stroke-width="1.4" stroke-linejoin="round"/><path d="M851.5 74.55L859.11 78.44L869 75.2M859.11 78.44L859.11 90" fill="none" stroke="#333333" stroke-width="1.4" stroke-linejoin="round"/>
<path transform="translate(867 74.5) scale(1.05)" d="M0 14c4.500-0.300 7-2.800 7.300-7h-2.800l5.800-7 5.200 7h-2.800c-0.500 6.500-5.500 10-12.700 8.600z" fill="#2b8fe6"/>
<path d="M908 64.65L920.18 71.08L920.18 90.2L908 82.86Z" fill="#f1f1f3"/><path d="M920.18 71.08L936 65.72L936 83.77L920.18 90.2Z" fill="#ffffff"/><path d="M908 64.65L923.4 59.6L936 65.72L920.18 71.08Z" fill="#ffffff"/><path d="M923.4 59.6L936 65.72L936 83.77L920.18 90.2L908 82.86L908 64.65Z" fill="none" stroke="#333333" stroke-width="1.4" stroke-linejoin="round"/><path d="M908 64.65L920.18 71.08L936 65.72M920.18 71.08L920.18 90.2" fill="none" stroke="#333333" stroke-width="1.4" stroke-linejoin="round"/>
<g transform="rotate(-27 974 75)"><rect x="957.500" y="73" width="8" height="4.600" rx="2.300" fill="#fff" stroke="#333" stroke-width="1.200"/><rect x="965" y="68.500" width="17" height="13.500" rx="3" fill="#f2f2f2" stroke="#333" stroke-width="1.200"/><rect x="982" y="72.500" width="7" height="5.500" rx="2.500" fill="#fff" stroke="#333" stroke-width="1.200"/></g>
<path d="M988.5 83.5L985.73 84.55L987.35 87.03L984.5 86.25L984.35 89.21L982.5 86.9L980.65 89.21L980.5 86.25L977.65 87.03L979.27 84.55L976.5 83.5L979.27 82.45L977.65 79.97L980.5 80.75L980.65 77.79L982.5 80.1L984.35 77.79L984.5 80.75L987.35 79.97L985.73 82.45Z" fill="#ff9800"/><circle cx="982.5" cy="83.5" r="3.7" fill="#ff9800"/>
<path d="M1041 64.65L1053.4 71.08L1053.4 90.2L1041 82.86Z" fill="#7fb5e6"/><path d="M1053.4 71.08L1069.5 65.72L1069.5 83.77L1053.4 90.2Z" fill="#dfe8f0"/><path d="M1041 64.65L1056.67 59.6L1069.5 65.72L1053.4 71.08Z" fill="#9cc6ec"/><path d="M1056.67 59.6L1069.5 65.72L1069.5 83.77L1053.4 90.2L1041 82.86L1041 64.65Z" fill="none" stroke="#2f3f4f" stroke-width="1.4" stroke-linejoin="round"/><path d="M1041 64.65L1053.4 71.08L1069.5 65.72M1053.4 71.08L1053.4 90.2" fill="none" stroke="#2f3f4f" stroke-width="1.4" stroke-linejoin="round"/>
<path d="M1055.500 74l11.500-5v14.500l-11.500 5.500z" fill="#3f4f5f"/><circle cx="1061.500" cy="78" r="2.800" fill="#b9d3ea"/><circle cx="1058" cy="73" r="1.300" fill="#b9d3ea"/><circle cx="1065" cy="72" r="1.300" fill="#b9d3ea"/><circle cx="1058" cy="84" r="1.300" fill="#b9d3ea"/><circle cx="1065" cy="83" r="1.300" fill="#b9d3ea"/>
<path d="M1108 64.65L1120.18 71.08L1120.18 90.2L1108 82.86Z" fill="#d6e9fa"/><path d="M1120.18 71.08L1136 65.72L1136 83.77L1120.18 90.2Z" fill="#e6f1fb"/><path d="M1108 64.65L1123.4 59.6L1136 65.72L1120.18 71.08Z" fill="#dcebf9"/><path d="M1123.4 59.6L1136 65.72L1136 83.77L1120.18 90.2L1108 82.86L1108 64.65Z" fill="none" stroke="#2f3f4f" stroke-width="1.4" stroke-linejoin="round"/><path d="M1108 64.65L1120.18 71.08L1136 65.72M1120.18 71.08L1120.18 90.2" fill="none" stroke="#2f3f4f" stroke-width="1.4" stroke-linejoin="round"/>
<ellipse cx="1122" cy="75" rx="10" ry="8.500" stroke="#2b8fe6" stroke-width="1.400"/><ellipse cx="1122" cy="75" rx="4" ry="8.500" stroke="#2b8fe6" stroke-width="1.200"/><path d="M1112 75h20" stroke="#2b8fe6" stroke-width="1.200"/><path d="M1108 83l12-5 16 6M1120 60v18" stroke="#2f3f4f" stroke-width="0.900"/>
<path d="M1172 64.65L1184.18 71.08L1184.18 90.2L1172 82.86Z" fill="#f4f7fa"/><path d="M1184.18 71.08L1200 65.72L1200 83.77L1184.18 90.2Z" fill="#f4f7fa"/><path d="M1172 64.65L1187.4 59.6L1200 65.72L1184.18 71.08Z" fill="#eaf1f8"/><path d="M1187.4 59.6L1200 65.72L1200 83.77L1184.18 90.2L1172 82.86L1172 64.65Z" fill="none" stroke="#2f3f4f" stroke-width="1.4" stroke-linejoin="round"/><path d="M1172 64.65L1184.18 71.08L1200 65.72M1184.18 71.08L1184.18 90.2" fill="none" stroke="#2f3f4f" stroke-width="1.4" stroke-linejoin="round"/>
<path d="M1172 65.4l12.200 6.500 15.800-5.500" stroke="#2f3f4f" stroke-width="1.300"/><path d="M1176 68l8 4 12-4" stroke="#5aa3e8" stroke-width="1.300"/>
<path d="M1172 71.4l12.200 6.500 15.800-5.500" stroke="#2f3f4f" stroke-width="1.300"/><path d="M1176 74l8 4 12-4" stroke="#5aa3e8" stroke-width="1.300"/>
<path d="M1172 77.4l12.200 6.500 15.800-5.500" stroke="#2f3f4f" stroke-width="1.300"/><path d="M1176 80l8 4 12-4" stroke="#5aa3e8" stroke-width="1.300"/>
<ellipse cx="1186" cy="66" rx="6" ry="2.500" fill="#cfe3f7" stroke="#5aa3e8" stroke-width="0.900"/>
<path d="M1245 64.65L1257.18 71.08L1257.18 90.2L1245 82.86Z" fill="#eaf2fa"/><path d="M1257.18 71.08L1273 65.72L1273 83.77L1257.18 90.2Z" fill="#fbfcfe"/><path d="M1245 64.65L1260.4 59.6L1273 65.72L1257.18 71.08Z" fill="#f2f6fb"/><path d="M1260.4 59.6L1273 65.72L1273 83.77L1257.18 90.2L1245 82.86L1245 64.65Z" fill="none" stroke="#2f3f4f" stroke-width="1.4" stroke-linejoin="round"/><path d="M1245 64.65L1257.18 71.08L1273 65.72M1257.18 71.08L1257.18 90.2" fill="none" stroke="#2f3f4f" stroke-width="1.4" stroke-linejoin="round"/>
<path d="M1261 59.600l-3.500 15.500M1246 83l11.500-8M1272.500 84l-15-9" stroke="#2b6fb0" stroke-width="3.400"/><path d="M1245 64.700l12.500 10.400 15.500-9.500M1257.200 75v15" stroke="#2f3f4f" stroke-width="0.800"/>
<path d="M1326.5 67.38L1335.63 72.31L1335.63 87L1326.5 81.36Z" fill="#f1f1f3"/><path d="M1335.63 72.31L1347.5 68.2L1347.5 82.06L1335.63 87Z" fill="#ffffff"/><path d="M1326.5 67.38L1338.05 63.5L1347.5 68.2L1335.63 72.31Z" fill="#ffffff"/><path d="M1338.05 63.5L1347.5 68.2L1347.5 82.06L1335.63 87L1326.5 81.36L1326.5 67.38Z" fill="none" stroke="#333333" stroke-width="1.4" stroke-linejoin="round"/><path d="M1326.5 67.38L1335.63 72.31L1347.5 68.2M1335.63 72.31L1335.63 87" fill="none" stroke="#333333" stroke-width="1.4" stroke-linejoin="round"/>
<path d="M1323 79.16L1325.83 80.62L1325.83 85L1323 83.32Z" fill="#c63a5c"/><path d="M1325.83 80.62L1329.5 79.4L1329.5 83.53L1325.83 85Z" fill="#d65a78"/><path d="M1323 79.16L1326.58 78L1329.5 79.4L1325.83 80.62Z" fill="#e08aa0"/><path d="M1326.58 78L1329.5 79.4L1329.5 83.53L1325.83 85L1323 83.32L1323 79.16Z" fill="none" stroke="#b02a4a" stroke-width="1" stroke-linejoin="round"/><path d="M1323 79.16L1325.83 80.62L1329.5 79.4M1325.83 80.62L1325.83 85" fill="none" stroke="#b02a4a" stroke-width="1" stroke-linejoin="round"/>
<path d="M1331.5 85.16L1334.33 86.62L1334.33 91L1331.5 89.32Z" fill="#c63a5c"/><path d="M1334.33 86.62L1338 85.4L1338 89.53L1334.33 91Z" fill="#d65a78"/><path d="M1331.5 85.16L1335.08 84L1338 85.4L1334.33 86.62Z" fill="#e08aa0"/><path d="M1335.08 84L1338 85.4L1338 89.53L1334.33 91L1331.5 89.32L1331.5 85.16Z" fill="none" stroke="#b02a4a" stroke-width="1" stroke-linejoin="round"/><path d="M1331.5 85.16L1334.33 86.62L1338 85.4M1334.33 86.62L1334.33 91" fill="none" stroke="#b02a4a" stroke-width="1" stroke-linejoin="round"/>
<path d="M1344 80.16L1346.83 81.62L1346.83 86L1344 84.32Z" fill="#c63a5c"/><path d="M1346.83 81.62L1350.5 80.4L1350.5 84.53L1346.83 86Z" fill="#d65a78"/><path d="M1344 80.16L1347.58 79L1350.5 80.4L1346.83 81.62Z" fill="#e08aa0"/><path d="M1347.58 79L1350.5 80.4L1350.5 84.53L1346.83 86L1344 84.32L1344 80.16Z" fill="none" stroke="#b02a4a" stroke-width="1" stroke-linejoin="round"/><path d="M1344 80.16L1346.83 81.62L1350.5 80.4M1346.83 81.62L1346.83 86" fill="none" stroke="#b02a4a" stroke-width="1" stroke-linejoin="round"/>
<path d="M1372.5 70.04L1385.12 75.19L1385.12 90.5L1372.5 84.62Z" fill="#f1f1f3"/><path d="M1385.12 75.19L1401.5 70.9L1401.5 85.36L1385.12 90.5Z" fill="#ffffff"/><path d="M1372.5 70.04L1388.45 66L1401.5 70.9L1385.12 75.19Z" fill="#ffffff"/><path d="M1388.45 66L1401.5 70.9L1401.5 85.36L1385.12 90.5L1372.5 84.62L1372.5 70.04Z" fill="none" stroke="#333333" stroke-width="1.4" stroke-linejoin="round"/><path d="M1372.5 70.04L1385.12 75.19L1401.5 70.9M1385.12 75.19L1385.12 90.5" fill="none" stroke="#333333" stroke-width="1.4" stroke-linejoin="round"/>
<path d="M1378.5 62.24L1386.11 65.6L1386.11 75.6L1378.5 71.76Z" fill="#f1f1f3"/><path d="M1386.11 65.6L1396 62.8L1396 72.24L1386.11 75.6Z" fill="#ffffff"/><path d="M1378.5 62.24L1388.12 59.6L1396 62.8L1386.11 65.6Z" fill="#ffffff"/><path d="M1388.12 59.6L1396 62.8L1396 72.24L1386.11 75.6L1378.5 71.76L1378.5 62.24Z" fill="none" stroke="#333333" stroke-width="1.4" stroke-linejoin="round"/><path d="M1378.5 62.24L1386.11 65.6L1396 62.8M1386.11 65.6L1386.11 75.6" fill="none" stroke="#333333" stroke-width="1.4" stroke-linejoin="round"/>
<path d="M1401 83L1398.33 84.08L1399.85 86.53L1397.06 85.83L1396.85 88.71L1395 86.5L1393.15 88.71L1392.94 85.83L1390.15 86.53L1391.67 84.08L1389 83L1391.67 81.92L1390.15 79.47L1392.94 80.17L1393.15 77.29L1395 79.5L1396.85 77.29L1397.06 80.17L1399.85 79.47L1398.33 81.92Z" fill="#ff9800"/><circle cx="1395" cy="83" r="3.8" fill="#ff9800"/>
<path d="M1455 80l14-5 15 4.500v9l-15 5.500-14-5z" fill="#d6d6d6" stroke="#c2c2c2" stroke-width="0.800"/><path d="M1455 80l14 5 15-5.500M1469 85v9" stroke="#bcbcbc" stroke-width="0.800"/><path d="M1455 80l14-5 15 4.500-15 5.500z" fill="#e6e6e6"/>
</svg>
<span class="t" style="left:924.3px;top:73.66px;font-size:10.5px;color:#7f97a8;">A</span>
<span class="t" style="left:1453.68px;top:56.28px;font-size:6.4px;color:#8a8a8a;font-weight:bold;">CONCEPT</span>
<span class="t" style="left:1459.46px;top:62.42px;font-size:6px;color:#bdbdbd;">LASER</span>
<svg class="a" style="left:0;top:0" width="1000" height="180" viewBox="0 0 1000 180" fill="none">
<path d="M5 150.500v22" stroke="#222" stroke-width="2" stroke-dasharray="2 2"/>
<path d="M136 148v26" stroke="#e2e2e2" stroke-width="1"/>
<path d="M396.4 148v26" stroke="#e2e2e2" stroke-width="1"/>
<path d="M589.6 148v26" stroke="#e2e2e2" stroke-width="1"/>
<path d="M717.5 148v26" stroke="#e2e2e2" stroke-width="1"/>
<path d="M848.3 148v26" stroke="#e2e2e2" stroke-width="1"/>
<path d="M25 149.6L15.6 172L33.7 166.5Z" fill="#8aba43" stroke="#35452f" stroke-width="1.1" stroke-linejoin="round"/>
<path transform="translate(27.5 161.5) scale(1)" d="M0 0l0.300 10 2.400-2.300 2 4.300 1.800-0.800-2-4.200 3.300-0.200z" fill="#3a3f45" stroke="#fff" stroke-width="0.300"/>
<path d="M47.500 155.300L64.400 149.600V165.500L47.500 172Z" fill="#8aba43" stroke="#35452f" stroke-width="1.100" stroke-linejoin="round"/>
<path transform="translate(58.5 161.5) scale(1)" d="M0 0l0.300 10 2.400-2.300 2 4.300 1.800-0.800-2-4.200 3.300-0.200z" fill="#3a3f45" stroke="#fff" stroke-width="0.300"/>
<path d="M75.500 172c1-8 6-10 10.500-12.500 4-2.500 5-6 6-9.500h6.500c-0.500 6-3 10-6 12.500-4 3-5.500 5.500-5.500 9.500z" fill="#8aba43" stroke="#35452f" stroke-width="1.100" stroke-linejoin="round"/>
<path transform="translate(89.5 161.5) scale(1)" d="M0 0l0.300 10 2.400-2.300 2 4.300 1.800-0.800-2-4.200 3.300-0.200z" fill="#3a3f45" stroke="#fff" stroke-width="0.300"/>
<path d="M112 172c-4-2-6-6-6-10.500 0-7 5.500-12 12-12s12 5 12 12c0 4.500-2 8.500-6 10.500z" fill="#8aba43" stroke="#35452f" stroke-width="1.100" stroke-linejoin="round"/><path d="M113.500 152v14M118 150v17M123 152v12" stroke="#35452f" stroke-width="0.900"/>
<path transform="translate(120.5 161.5) scale(1)" d="M0 0l0.300 10 2.400-2.300 2 4.300 1.800-0.800-2-4.200 3.300-0.200z" fill="#3a3f45" stroke="#fff" stroke-width="0.300"/>
<path d="M143 152.500H167V169.500H143Z" fill="#8aba43" stroke="#35452f" stroke-width="1.100" stroke-linejoin="round"/>
<path transform="translate(155.5 162)" d="M0 0l3 0.600 7.500 7.500-2.300 2.300-7.500-7.500z" fill="#fff" stroke="#333" stroke-width="1"/><path transform="translate(155.5 162)" d="M0 0l2.200 0.500-1.600 1.700z" fill="#333"/>
<path d="M186 158c-1-5 3-8.500 6.500-8.500 3.500 0 6.500 3 6.500 6.500 0 3-2 5.500-5 6 1 5-2 9.500-7 9.500-4 0-7-3-7-7 0-3.500 2.500-6.200 6-6.500z" fill="#8aba43" stroke="#35452f" stroke-width="1.100" stroke-linejoin="round"/>
<path transform="translate(187 162)" d="M0 0l3 0.600 7.500 7.500-2.300 2.300-7.500-7.500z" fill="#fff" stroke="#333" stroke-width="1"/><path transform="translate(187 162)" d="M0 0l2.200 0.500-1.600 1.700z" fill="#333"/>
<path d="M206 171.500c7-0.500 10-3 12-9 2-6 4-10 9.500-12" stroke="#35452f" stroke-width="3.600" stroke-linecap="round"/><path d="M206 171.500c7-0.500 10-3 12-9 2-6 4-10 9.500-12" stroke="#9cb86a" stroke-width="1.800" stroke-linecap="round"/><path d="M217.500 164l10.500 8" stroke="#333" stroke-width="2.600"/><path d="M218.500 164.800l8.500 6.500" stroke="#fff" stroke-width="1"/>
<path d="M242 150.500H266V169.500H242Z" fill="#8aba43" stroke="#35452f" stroke-width="1.100" stroke-linejoin="round"/><path d="M242 169.500l5-19 5 19 6-19 8 10" stroke="#35452f" stroke-width="0.900"/>
<path transform="translate(254.5 162)" d="M0 0l3 0.600 7.500 7.500-2.300 2.300-7.500-7.500z" fill="#fff" stroke="#333" stroke-width="1"/><path transform="translate(254.5 162)" d="M0 0l2.200 0.500-1.600 1.700z" fill="#333"/>
<path d="M285 158c-1-5 3-8.500 6.500-8.500 3.500 0 6.500 3 6.500 6.500 0 3-2 5.500-5 6 1 5-2 9.500-7 9.500-4 0-7-3-7-7 0-3.500 2.500-6.200 6-6.500z" fill="#8aba43" stroke="#35452f" stroke-width="1.100" stroke-linejoin="round"/><path d="M285 158l12-3M291.500 149.500l-2 10.500M279 165l14 0.500M286 171.500l0-8" stroke="#35452f" stroke-width="0.800"/>
<path transform="translate(287 162)" d="M0 0l3 0.600 7.500 7.500-2.300 2.300-7.500-7.500z" fill="#fff" stroke="#333" stroke-width="1"/><path transform="translate(287 162)" d="M0 0l2.200 0.500-1.600 1.700z" fill="#333"/>
<path d="M328 160.5L323.39 163.32L324.49 168.31L319.06 167.3L316 171.54L312.94 167.3L307.51 168.31L308.61 163.32L304 160.5L308.61 157.68L307.51 152.69L312.94 153.7L316 149.46L319.06 153.7L324.49 152.69L323.39 157.68Z" fill="#8aba43" stroke="#35452f" stroke-width="1.100" stroke-linejoin="round"/>
<path d="M316 160.500L326 160.5" stroke="#35452f" stroke-width="0.800"/>
<path d="M316 160.500L323.07 166.86" stroke="#35452f" stroke-width="0.800"/>
<path d="M316 160.500L316 169.5" stroke="#35452f" stroke-width="0.800"/>
<path d="M316 160.500L308.93 166.86" stroke="#35452f" stroke-width="0.800"/>
<path d="M316 160.500L306 160.5" stroke="#35452f" stroke-width="0.800"/>
<path d="M316 160.500L308.93 154.14" stroke="#35452f" stroke-width="0.800"/>
<path d="M316 160.500L316 151.5" stroke="#35452f" stroke-width="0.800"/>
<path d="M316 160.500L323.07 154.14" stroke="#35452f" stroke-width="0.800"/>
<path transform="translate(318 162)" d="M0 0l3 0.600 7.500 7.500-2.300 2.300-7.500-7.500z" fill="#fff" stroke="#333" stroke-width="1"/><path transform="translate(318 162)" d="M0 0l2.200 0.500-1.600 1.700z" fill="#333"/>
<circle cx="347.500" cy="161" r="11.500" fill="#8aba43" stroke="#35452f" stroke-width="1.100" stroke-linejoin="round"/>
<path d="M347.500 161L359 161" stroke="#35452f" stroke-width="0.800"/>
<path d="M347.500 161L357.46 166.75" stroke="#35452f" stroke-width="0.800"/>
<path d="M347.500 161L353.25 170.96" stroke="#35452f" stroke-width="0.800"/>
<path d="M347.500 161L347.5 172.5" stroke="#35452f" stroke-width="0.800"/>
<path d="M347.500 161L341.75 170.96" stroke="#35452f" stroke-width="0.800"/>
<path d="M347.500 161L337.54 166.75" stroke="#35452f" stroke-width="0.800"/>
<path d="M347.500 161L336 161" stroke="#35452f" stroke-width="0.800"/>
<path d="M347.500 161L337.54 155.25" stroke="#35452f" stroke-width="0.800"/>
<path d="M347.500 161L341.75 151.04" stroke="#35452f" stroke-width="0.800"/>
<path d="M347.500 161L347.5 149.5" stroke="#35452f" stroke-width="0.800"/>
<path d="M347.500 161L353.25 151.04" stroke="#35452f" stroke-width="0.800"/>
<path d="M347.500 161L357.46 155.25" stroke="#35452f" stroke-width="0.800"/>
<path transform="translate(349.5 162.5)" d="M0 0l3 0.600 7.500 7.500-2.300 2.300-7.500-7.500z" fill="#fff" stroke="#333" stroke-width="1"/><path transform="translate(349.5 162.5)" d="M0 0l2.200 0.500-1.600 1.700z" fill="#333"/>
<ellipse cx="379.500" cy="161" rx="8.500" ry="11.500" transform="rotate(-15 379.500 161)" fill="#8aba43" stroke="#35452f" stroke-width="1.100" stroke-linejoin="round"/>
<path d="M379.500 161L387.5 161" stroke="#35452f" stroke-width="0.800"/>
<path d="M379.500 161L385.97 167.47" stroke="#35452f" stroke-width="0.800"/>
<path d="M379.500 161L381.97 171.46" stroke="#35452f" stroke-width="0.800"/>
<path d="M379.500 161L377.03 171.46" stroke="#35452f" stroke-width="0.800"/>
<path d="M379.500 161L373.03 167.47" stroke="#35452f" stroke-width="0.800"/>
<path d="M379.500 161L371.5 161" stroke="#35452f" stroke-width="0.800"/>
<path d="M379.500 161L373.03 154.53" stroke="#35452f" stroke-width="0.800"/>
<path d="M379.500 161L377.03 150.54" stroke="#35452f" stroke-width="0.800"/>
<path d="M379.500 161L381.97 150.54" stroke="#35452f" stroke-width="0.800"/>
<path d="M379.500 161L385.97 154.53" stroke="#35452f" stroke-width="0.800"/>
<path transform="translate(381.5 162.5)" d="M0 0l3 0.600 7.500 7.500-2.300 2.300-7.500-7.500z" fill="#fff" stroke="#333" stroke-width="1"/><path transform="translate(381.5 162.5)" d="M0 0l2.200 0.500-1.600 1.700z" fill="#333"/>
<path d="M404 153.29L413.57 158.12L413.57 172.5L404 166.98Z" fill="#fff"/><path d="M413.57 158.12L426 154.1L426 167.67L413.57 172.5Z" fill="#fff"/><path d="M404 153.29L416.1 149.5L426 154.1L413.57 158.12Z" fill="#8aba43"/><path d="M416.1 149.5L426 154.1L426 167.67L413.57 172.5L404 166.98L404 153.29Z" fill="none" stroke="#35452f" stroke-width="1.1" stroke-linejoin="round"/><path d="M404 153.29L413.57 158.12L426 154.1M413.57 158.12L413.57 172.5" fill="none" stroke="#35452f" stroke-width="1.1" stroke-linejoin="round"/>
<path transform="translate(417 161.5) scale(1)" d="M0 0l0.300 10 2.400-2.300 2 4.300 1.800-0.800-2-4.200 3.300-0.200z" fill="#3a3f45" stroke="#fff" stroke-width="0.300"/>
<path d="M435 153.29L444.57 158.12L444.57 172.5L435 166.98Z" fill="#8aba43"/><path d="M444.57 158.12L457 154.1L457 167.67L444.57 172.5Z" fill="#8aba43"/><path d="M435 153.29L447.1 149.5L457 154.1L444.57 158.12Z" fill="#fff"/><path d="M447.1 149.5L457 154.1L457 167.67L444.57 172.5L435 166.98L435 153.29Z" fill="none" stroke="#35452f" stroke-width="1.1" stroke-linejoin="round"/><path d="M435 153.29L444.57 158.12L457 154.1M444.57 158.12L444.57 172.5" fill="none" stroke="#35452f" stroke-width="1.1" stroke-linejoin="round"/>
<path transform="translate(448 161.5) scale(1)" d="M0 0l0.300 10 2.400-2.300 2 4.300 1.800-0.800-2-4.200 3.300-0.200z" fill="#3a3f45" stroke="#fff" stroke-width="0.300"/>
<path d="M466.5 153.29L475.85 158.12L475.85 172.5L466.5 166.98Z" fill="#2b8fe6"/><path d="M475.85 158.12L488 154.1L488 167.67L475.85 172.5Z" fill="#8aba43"/><path d="M466.5 153.29L478.32 149.5L488 154.1L475.85 158.12Z" fill="#f59a1a"/><path d="M478.32 149.5L488 154.1L488 167.67L475.85 172.5L466.5 166.98L466.5 153.29Z" fill="none" stroke="#35452f" stroke-width="1.1" stroke-linejoin="round"/><path d="M466.5 153.29L475.85 158.12L488 154.1M475.85 158.12L475.85 172.5" fill="none" stroke="#35452f" stroke-width="1.1" stroke-linejoin="round"/>
<path transform="translate(479 161.5) scale(1)" d="M0 0l0.300 10 2.400-2.300 2 4.300 1.800-0.800-2-4.200 3.300-0.200z" fill="#3a3f45" stroke="#fff" stroke-width="0.300"/>
<path d="M497.5 153.29L507.07 158.12L507.07 172.5L497.5 166.98Z" fill="#fff"/><path d="M507.07 158.12L519.5 154.1L519.5 167.67L507.07 172.5Z" fill="#fff"/><path d="M497.5 153.29L509.6 149.5L519.5 154.1L507.07 158.12Z" fill="#fff"/><path d="M509.6 149.5L519.5 154.1L519.5 167.67L507.07 172.5L497.5 166.98L497.5 153.29Z" fill="none" stroke="#b5b5b5" stroke-width="1" stroke-linejoin="round"/><path d="M497.5 153.29L507.07 158.12L519.5 154.1M507.07 158.12L507.07 172.5" fill="none" stroke="#b5b5b5" stroke-width="1" stroke-linejoin="round"/>
<path transform="translate(510 161.5) scale(1)" d="M0 0l0.300 10 2.400-2.300 2 4.300 1.800-0.800-2-4.200 3.300-0.200z" fill="#a5a5a5" stroke="#fff" stroke-width="0.300"/>
<path d="M528 153.29L537.79 158.12L537.79 172.5L528 166.98Z" fill="#fff"/><path d="M537.79 158.12L550.5 154.1L550.5 167.67L537.79 172.5Z" fill="#fff"/><path d="M528 153.29L540.38 149.5L550.5 154.1L537.79 158.12Z" fill="#fff"/><path d="M540.38 149.5L550.5 154.1L550.5 167.67L537.79 172.5L528 166.98L528 153.29Z" fill="none" stroke="#444" stroke-width="1" stroke-linejoin="round"/><path d="M528 153.29L537.79 158.12L550.5 154.1M537.79 158.12L537.79 172.5" fill="none" stroke="#444" stroke-width="1" stroke-linejoin="round"/>
<path d="M533 160l5-4 5 2.500v7l-5 3-5-3z" fill="#8aba43" stroke="#35452f" stroke-width="0.700"/><rect x="536.500" y="155.500" width="5" height="6" fill="#e02a2a"/>
<path transform="translate(541.5 161.5) scale(1)" d="M0 0l0.300 10 2.400-2.300 2 4.300 1.800-0.800-2-4.200 3.300-0.200z" fill="#3a3f45" stroke="#fff" stroke-width="0.300"/>
<path d="M559.5 153.29L569.07 158.12L569.07 172.5L559.5 166.98Z" fill="#8aba43"/><path d="M569.07 158.12L581.5 154.1L581.5 167.67L569.07 172.5Z" fill="#8aba43"/><path d="M559.5 153.29L571.6 149.5L581.5 154.1L569.07 158.12Z" fill="#8aba43"/><path d="M571.6 149.5L581.5 154.1L581.5 167.67L569.07 172.5L559.5 166.98L559.5 153.29Z" fill="none" stroke="#35452f" stroke-width="1.1" stroke-linejoin="round"/><path d="M559.5 153.29L569.07 158.12L581.5 154.1M569.07 158.12L569.07 172.5" fill="none" stroke="#35452f" stroke-width="1.1" stroke-linejoin="round"/>
<path transform="translate(572.5 161.5) scale(1)" d="M0 0l0.300 10 2.400-2.300 2 4.300 1.800-0.800-2-4.200 3.300-0.200z" fill="#3a3f45" stroke="#fff" stroke-width="0.300"/>
<path d="M607 149.6L597.6 172L615.7 166.5Z" fill="#c9c9c9" stroke="#a5a5a5" stroke-width="1.1" stroke-linejoin="round"/>
<path transform="translate(609 161.5) scale(1)" d="M0 0l0.300 10 2.400-2.300 2 4.300 1.800-0.800-2-4.200 3.300-0.200z" fill="#9a9a9a" stroke="#fff" stroke-width="0.300"/>
<path d="M638 149.6L628.6 172L646.7 166.5Z" fill="#c9c9c9" stroke="#a5a5a5" stroke-width="1.1" stroke-linejoin="round"/>
<path d="M638.5 153.1L632.86 175.5L643.72 170Z" fill="#e2e2e2" stroke="#a5a5a5" stroke-width="0.8" stroke-linejoin="round"/>
<path d="M641 152l9-2-2 8z" fill="#bdbdbd"/>
<path d="M669 149.6L659.6 172L677.7 166.5Z" fill="#c9c9c9" stroke="#a5a5a5" stroke-width="1.1" stroke-linejoin="round"/>
<path d="M669.5 153.1L663.86 175.5L674.72 170Z" fill="#e2e2e2" stroke="#a5a5a5" stroke-width="0.8" stroke-linejoin="round"/>
<path d="M674 158l8-8M676.500 150h5.500v5.500" stroke="#b0b0b0" stroke-width="2"/>
<path d="M697 149.6L687.6 172L705.7 166.5Z" fill="#b5b5b5" stroke="#444" stroke-width="1.1" stroke-linejoin="round"/>
<path d="M701 149.6L691.6 172L709.7 166.5Z" fill="#8aba43" stroke="#35452f" stroke-width="1.1" stroke-linejoin="round"/>
<path d="M702 168a4.500 4.500 0 1 1 8 0" stroke="#2b8fe6" stroke-width="2"/><path d="M700 166l3 4 2.500-4.500z" fill="#2b8fe6"/>
<path d="M737 149.6L727.6 172L745.7 166.5Z" fill="#8aba43" stroke="#35452f" stroke-width="1.1" stroke-linejoin="round"/>
<path d="M739 163l9 8.500M748 163l-9 8.500" stroke="#e02a2a" stroke-width="2.200"/>
<path d="M766 149.6L756.6 172L774.7 166.5Z" fill="#c9c9c9" stroke="#a5a5a5" stroke-width="1.1" stroke-linejoin="round"/>
<path d="M770 149.6L760.6 172L778.7 166.5Z" fill="#bdbdbd" stroke="#a5a5a5" stroke-width="1.1" stroke-linejoin="round"/>
<path d="M757 153v18" stroke="#c2c2c2" stroke-width="1" stroke-dasharray="2 2"/>
<path d="M799 149.6L789.6 172L807.7 166.5Z" fill="#c9c9c9" stroke="#a5a5a5" stroke-width="1.1" stroke-linejoin="round"/>
<rect x="802.500" y="163" width="8" height="8" fill="#e6e6e6" stroke="#a5a5a5" stroke-width="0.900"/><path d="M804 165.500h5M804 168h5" stroke="#a5a5a5" stroke-width="0.800"/>
<path d="M826.500 150.500L842 149.500L834 171L818.500 172Z" fill="#bdbdbd" stroke="#9a9a9a" stroke-width="1"/><path d="M826.500 150.500L834 171" stroke="#a5a5a5" stroke-width="0.900"/>
<path d="M866 149.6L856.6 172L874.7 166.5Z" fill="#fff" stroke="#a5a5a5" stroke-width="1" stroke-linejoin="round"/>
<ellipse cx="874" cy="168" rx="4.500" ry="2.600" fill="#e2e2e2" stroke="#bdbdbd" stroke-width="0.800"/><circle cx="874" cy="168" r="1.200" fill="#bdbdbd"/>
<path d="M895 149.6L885.6 172L903.7 166.5Z" fill="#fff" stroke="#333" stroke-width="1" stroke-linejoin="round"/>
<path d="M898.5 149.6L889.1 172L907.2 166.5Z" fill="#d5d5d5" stroke="#333" stroke-width="1" stroke-linejoin="round"/>
<path d="M897 153a5 5 0 0 1 8.500 1.500" stroke="#2b8fe6" stroke-width="2.200"/><ellipse cx="903" cy="167.500" rx="5" ry="3" fill="#2b8fe6"/><circle cx="903" cy="167.500" r="1.300" fill="#fff"/><path d="M895.500 148.500l4 1-2.500 3z" fill="#f5a623"/>
<path d="M929 149.6L919.6 172L937.7 166.5Z" fill="#bdbdbd" stroke="#333" stroke-width="1" stroke-linejoin="round"/>
<ellipse cx="937" cy="167.500" rx="5" ry="3" fill="#2b8fe6"/><circle cx="937" cy="167.500" r="1.300" fill="#fff"/>
<path d="M956.500 151L972 150L964.500 170.500L949 171.500Z" fill="#bdbdbd" stroke="#9a9a9a" stroke-width="1.600"/><ellipse cx="967" cy="168" rx="4.500" ry="2.600" fill="#e2e2e2" stroke="#bdbdbd" stroke-width="0.800"/>
</svg>
<div style="position:absolute;left:0px;top:178px;width:1530px;height:884px;background:#b9dcf8"></div>
<div style="position:absolute;left:0px;top:178px;width:1530px;height:1px;background:#d8ebfa"></div>
<div style="position:absolute;left:1413px;top:873px;width:1px;height:72px;background:#4caf50"></div>
<div style="position:absolute;left:1413px;top:944.5px;width:88px;height:1.2px;background:#c62839"></div>
<span class="t" style="left:1413.5px;top:946.84px;font-size:12px;color:#2b62b8;">Z</span>
<svg class="a" style="left:1509px;top:948px" width="10" height="10" stroke="#c0185a" stroke-width="1" fill="none"><path d="M1 1l8 8M9 1l-8 8"/></svg>
<div style="position:absolute;left:0px;top:1062px;width:1920px;height:3px;background:#3393f2"></div>
<svg class="a" style="left:0;top:0" width="1530" height="1065" viewBox="0 0 1530 1065">
<defs>
<linearGradient id="gp" x1="0" x2="1"><stop offset="0" stop-color="#565656"/><stop offset="0.18" stop-color="#959595"/><stop offset="0.5" stop-color="#a9a9a9"/><stop offset="0.82" stop-color="#959595"/><stop offset="1" stop-color="#565656"/></linearGradient>
<radialGradient id="gface" cx="0.5" cy="0.45" r="0.6"><stop offset="0" stop-color="#afafaf"/><stop offset="0.65" stop-color="#9e9e9e"/><stop offset="1" stop-color="#6b6b6b"/></radialGradient>
<radialGradient id="gpot" cx="0.45" cy="0.45" r="0.62"><stop offset="0" stop-color="#9f9f9f"/><stop offset="0.6" stop-color="#8f8f8f"/><stop offset="1" stop-color="#575757"/></radialGradient>
<radialGradient id="gball" cx="0.4" cy="0.4" r="0.7"><stop offset="0" stop-color="#b8b8b8"/><stop offset="1" stop-color="#7b7b7b"/></radialGradient>
<clipPath id="cfe"><path d="M575.5 511C575.97 505.88 582.33 500.03 586.8 496.3C591.27 492.57 596.43 489.95 602.3 488.6C608.17 487.25 617.38 487.55 622 488.2C626.62 488.85 629.42 489.27 630 492.5C630.58 495.73 627.07 502.27 625.5 507.6C623.93 512.93 622.83 519.57 620.6 524.5C618.37 529.43 615.4 534.03 612.1 537.2C608.8 540.37 604.08 543.2 600.8 543.5C597.52 543.8 595.2 541.75 592.4 539C589.6 536.25 586.82 531.67 584 527C581.18 522.33 575.03 516.12 575.5 511Z"/></clipPath><pattern id="hairp" width="36" height="36" patternUnits="userSpaceOnUse"><path d="M16.29 20.15Q17.49 19.8 18.65 18.92M6.65 18.43Q4.23 16.57 4.26 15.9M3.26 29.15Q4.43 29.79 2.7 27.64M39.26 29.15Q40.43 29.79 38.7 27.64M23.54 22.16Q24.05 21.48 24.39 23.44M6.85 8.71Q7.98 9.99 9.46 9.21M18.69 23.05Q16.98 22.39 15.53 23.06M35.92 35.84Q36.24 33.65 37.66 33.08M35.92 -0.16Q36.24 -2.35 37.66 -2.92M-0.08 35.84Q0.24 33.65 1.66 33.08M-0.08 -0.16Q0.24 -2.35 1.66 -2.92M10.41 2.53Q11.57 0.94 10.65 0.04M10.41 38.53Q11.57 36.94 10.65 36.04M34.49 30.5Q36.73 30.42 36.51 30.51M-1.51 30.5Q0.73 30.42 0.51 30.51M35.29 14.31Q37.51 14.3 38.05 15.67M-0.71 14.31Q1.51 14.3 2.05 15.67M3.14 11.97Q3.64 10.83 6.44 11.2M39.14 11.97Q39.64 10.83 42.44 11.2M3.64 2.16Q4.1 1.07 4.2 0.29M3.64 38.16Q4.1 37.07 4.2 36.29M39.64 2.16Q40.1 1.07 40.2 0.29M39.64 38.16Q40.1 37.07 40.2 36.29M6.86 26.35Q6.77 27.25 8.98 28.63M7.66 9.71Q8.8 10.54 11.11 9.06M7.59 14.19Q7.33 14.43 9.47 11.73M7.68 9.3Q7.23 6.87 8 7M3.24 20.98Q2.93 22.34 3.38 23.98M39.24 20.98Q38.93 22.34 39.38 23.98M34.53 17.41Q31.94 15.55 31.25 15.76M-1.47 17.41Q-4.06 15.55 -4.75 15.76M32.7 29.44Q33.43 31.75 32.71 31.42M-3.3 29.44Q-2.57 31.75 -3.29 31.42M7.08 34.2Q7.95 32 9.29 32.17M7.08 -1.8Q7.95 -4 9.29 -3.83M1.39 34.66Q0.78 37.25 1.63 37.91M1.39 -1.34Q0.78 1.25 1.63 1.91M37.39 34.66Q36.78 37.25 37.63 37.91M37.39 -1.34Q36.78 1.25 37.63 1.91M21.47 10.56Q20.93 11.22 22.96 13.51M20.14 30.69Q20.56 29.08 18.48 29.24M0.6 9.69Q-1.15 9.57 -0.96 10.25M36.6 9.69Q34.85 9.57 35.04 10.25M20.6 4.74Q20.83 6.63 18.19 7.58M24.88 21.04Q23.94 22.88 25.89 22.26M25.23 34.66Q26.71 35.56 28.3 35.07M25.23 -1.34Q26.71 -0.44 28.3 -0.93M11.48 35.98Q13.47 37.83 14.03 37.28M11.48 -0.02Q13.47 1.83 14.03 1.28M26.54 25.33Q26.59 24.06 27.54 21.68M32.43 31.36Q32.01 32.44 29.42 33.09M-3.57 31.36Q-3.99 32.44 -6.58 33.09M22.5 13.76Q19.93 13.43 19.87 12.27M35.76 31.67Q36.29 30.69 35.42 29.23M-0.24 31.67Q0.29 30.69 -0.58 29.23M15.86 30.18Q15.91 31.33 18.78 31.88M17.31 8.29Q17.22 8.25 16.43 5.69M9.21 0.41Q7.82 0.93 8.21 3.44M9.21 36.41Q7.82 36.93 8.21 39.44M32.61 23.76Q30.35 24.93 29.12 25.1M-3.39 23.76Q-5.65 24.93 -6.88 25.1M7.15 15.51Q8.93 13.39 8.44 11.96M20.99 11.39Q22.9 13.47 22.79 13.46M25.6 34.2Q25.3 34.47 25.28 36.1M25.6 -1.8Q25.3 -1.53 25.28 0.1M7.71 14.9Q6.19 14.95 5.78 12.96M35.35 16.29Q37.18 15.27 36.76 17M-0.65 16.29Q1.18 15.27 0.76 17M25.51 20.54Q23.44 21.07 24.25 23.78M16.37 0.89Q15.8 -1.39 17.37 -0.95M16.37 36.89Q15.8 34.61 17.37 35.05M22.65 16.07Q22.5 16.31 20.5 13.79M24.64 7.18Q22.21 7.25 22.72 7.48M25.71 6.45Q26.14 7.68 25.38 8.79M22.12 27.22Q21.98 27.07 19.39 29.39M33.57 26.01Q34.85 28.19 35.38 27.92M-2.43 26.01Q-1.15 28.19 -0.62 27.92M13.56 20.48Q16.16 19.16 16.09 18.07M23.45 7.38Q23.56 6.28 22.82 3.89M7.68 32.4Q9.75 33.02 11.59 31.91M7.68 -3.6Q9.75 -2.98 11.59 -4.09M11.53 32.76Q11.01 31.65 12.99 30.89M11.53 -3.24Q11.01 -4.35 12.99 -5.11M19.81 27.66Q19.96 26.41 18.24 27.78M28.79 6.22Q26.83 6.66 27.03 9.21M18.59 26.05Q20.79 24.66 20.31 23.32M34.17 3.1Q33.79 5.17 34.67 5.87M34.17 39.1Q33.79 41.17 34.67 41.87M-1.83 3.1Q-2.21 5.17 -1.33 5.87M-1.83 39.1Q-2.21 41.17 -1.33 41.87M23 18.82Q23.24 17.26 24.6 16.4M30.43 32.42Q32.31 34.24 31.37 35.92M30.43 -3.58Q32.31 -1.76 31.37 -0.08M20.63 7.23Q19.6 5.51 17.94 6.62M34.9 18.58Q33.67 19.58 32.06 20.63M-1.1 18.58Q-2.33 19.58 -3.94 20.63M24.88 2.37Q25.02 3.34 22.41 1.77M24.88 38.37Q25.02 39.34 22.41 37.77M9.69 17.03Q11.54 19.16 11.5 18.88M17.16 11.42Q18.98 11.73 18.25 14.26M28.05 0.82Q28.97 1.26 28.77 2.76M28.05 36.82Q28.97 37.26 28.77 38.76M12.79 22.31Q12.98 23.36 15.42 24.35M9.02 7.12Q7.37 6.61 6.47 6.63M19.06 5.75Q19.91 7.31 19.93 8.7M30.65 22.02Q32.01 22.14 31.93 20.39M32.5 11.37Q30.9 14.61 30.99 14.87M-3.5 11.37Q-5.1 14.61 -5.01 14.87M31.95 4.82Q31.34 5.27 32.18 8.13M29.96 15.18Q29.89 14.85 30.4 13.42M0.64 7.23Q1.26 4.36 -0.93 3.79M36.64 7.23Q37.26 4.36 35.07 3.79M18.2 27.29Q15.66 25.98 14.99 27.24M3.82 1.35Q2.71 -0.15 1.18 0.46M3.82 37.35Q2.71 35.85 1.18 36.46M39.82 1.35Q38.71 -0.15 37.18 0.46M39.82 37.35Q38.71 35.85 37.18 36.46M6.64 7.34Q8.99 4.45 8.77 3.98M2.23 34.25Q0.05 34.56 -1.08 35.06M2.23 -1.75Q0.05 -1.44 -1.08 -0.94M38.23 34.25Q36.05 34.56 34.92 35.06M38.23 -1.75Q36.05 -1.44 34.92 -0.94M18.55 15.48Q18.54 16.06 17.31 14.58M6.53 16.34Q5.52 14.08 6.35 13.84M18.45 0.56Q20.44 0.54 21.19 -1.63M18.45 36.56Q20.44 36.54 21.19 34.37M22.66 14.56Q22.99 14.67 20.42 12.95M9.3 32.81Q10.18 30.8 9.17 29.36M9.3 -3.19Q10.18 -5.2 9.17 -6.64M32.28 31.67Q32.49 29.79 31.11 28.46M-3.72 31.67Q-3.51 29.79 -4.89 28.46M26.01 2.54Q23.82 3.23 24.56 4.78M26.01 38.54Q23.82 39.23 24.56 40.78M22.99 22.46Q23.71 23.9 23.43 26.3M23.75 20.5Q24.04 20.68 21.33 20M25.25 27.42Q26.36 28.04 26.79 27.22M9.24 14.46Q9.81 13.56 11.13 15.08M9.03 32.6Q9.12 32.38 6.4 31.75M9.03 -3.4Q9.12 -3.62 6.4 -4.25M35.82 22.97Q36.42 22.96 36.44 21.39M-0.18 22.97Q0.42 22.96 0.44 21.39M1.62 33.49Q1.35 34.6 3.06 35.75M1.62 -2.51Q1.35 -1.4 3.06 -0.25M37.62 33.49Q37.35 34.6 39.06 35.75M37.62 -2.51Q37.35 -1.4 39.06 -0.25M22 2.11Q23.28 1.97 24.4 1.24M22 38.11Q23.28 37.97 24.4 37.24M13.16 10.29Q11.69 9.74 11.53 7.89M10.66 0.5Q9.65 2.07 10.71 2.11M10.66 36.5Q9.65 38.07 10.71 38.11M14.04 32.31Q15.49 32.83 14.02 30.69M14.04 -3.69Q15.49 -3.17 14.02 -5.31M2.65 32.6Q2.85 32.41 0.21 33.76M2.65 -3.4Q2.85 -3.59 0.21 -2.24M38.65 32.6Q38.85 32.41 36.21 33.76M38.65 -3.4Q38.85 -3.59 36.21 -2.24M18.84 33.74Q20.05 33.38 18.38 31.11M18.84 -2.26Q20.05 -2.62 18.38 -4.89M21.73 4.14Q19.9 1.87 19.85 2.29M19.01 4.48Q17.4 4.32 16.05 5.59M20.96 15.1Q22.7 15.07 21.45 12.32M26.43 8.58Q28.7 10.18 29.25 11.03M12.93 9.77Q12.62 8.84 11.77 7.1M27.12 6.83Q28.38 9.94 27.15 10.78M1.42 2.19Q1.63 2.27 1.09 4.73M1.42 38.19Q1.63 38.27 1.09 40.73M37.42 2.19Q37.63 2.27 37.09 4.73M37.42 38.19Q37.63 38.27 37.09 40.73M19.5 2.61Q21.02 3.83 22.23 4.26M19.5 38.61Q21.02 39.83 22.23 40.26M13.43 17.23Q14.46 19.39 14.01 19.52M2.68 4.31Q4.03 2.03 3.78 1.46M38.68 4.31Q40.03 2.03 39.78 1.46M15.28 9.29Q16.18 9.63 16.16 7.04M11.71 19.75Q11.45 17.46 11.61 15.95M3.49 31.51Q4.44 31.87 5 32.31M39.49 31.51Q40.44 31.87 41 32.31M24.67 10.76Q23.94 10.41 24.94 9.09M2.94 10.94Q2.03 8.27 2.43 7.74M38.94 10.94Q38.03 8.27 38.43 7.74M12.88 26.14Q12.91 27.01 11.68 27.47M33.07 33.84Q35.09 32.58 35.28 32.49M33.07 -2.16Q35.09 -3.42 35.28 -3.51M-2.93 33.84Q-0.91 32.58 -0.72 32.49M-2.93 -2.16Q-0.91 -3.42 -0.72 -3.51M11.43 14.39Q12.39 13.22 14.86 12.88M13.16 13.08Q11.27 14.02 11.21 14.59" fill="none" stroke="#222222" stroke-width="1" stroke-linecap="round"/></pattern><filter id="b3" x="-0.3" y="-0.3" width="1.6" height="1.6"><feGaussianBlur stdDeviation="3"/></filter><filter id="b2" x="-0.3" y="-0.3" width="1.6" height="1.6"><feGaussianBlur stdDeviation="1.800"/></filter><radialGradient id="gua" cx="0.58" cy="0.36" r="0.62"><stop offset="0" stop-color="#b3b3b3"/><stop offset="0.55" stop-color="#9a9a9a"/><stop offset="1" stop-color="#5b5b5b"/></radialGradient><linearGradient id="gfa" x1="0.55" y1="0" x2="0.35" y2="1"><stop offset="0" stop-color="#9d9d9d"/><stop offset="0.35" stop-color="#b0b0b0"/><stop offset="0.75" stop-color="#939393"/><stop offset="1" stop-color="#5e5e5e"/></linearGradient><radialGradient id="gcone" cx="0.5" cy="0.45" r="0.6"><stop offset="0" stop-color="#b8b8b8"/><stop offset="0.7" stop-color="#a0a0a0"/><stop offset="1" stop-color="#737373"/></radialGradient></defs>
<path d="M517.7 290.3C518.65 288.08 523.4 288.08 526.5 287.5C529.6 286.92 533.55 287.72 536.3 286.8C539.05 285.88 540.88 283.42 543 282C545.12 280.58 547 278.3 549 278.3C551 278.3 553.35 280.72 555 282C556.65 283.28 556.4 285.08 558.9 286C561.4 286.92 566.43 286.9 570 287.5C573.57 288.1 579.1 287.13 580.3 289.6C581.5 292.07 578.92 297.4 577.2 302.3C575.48 307.2 572.37 312.9 570 319C567.63 325.1 564.85 332.3 563 338.9C561.15 345.5 559.87 351.8 558.9 358.6C557.93 365.4 557.55 374.07 557.2 379.7C556.85 385.33 557.93 389.47 556.8 392.4C555.67 395.33 552.63 396.83 550.4 397.3C548.17 397.77 544.8 398.13 543.4 395.2C542 392.27 542.73 385.8 542 379.7C541.27 373.6 540.17 365.4 539 358.6C537.83 351.8 536.85 345.5 535 338.9C533.15 332.3 530.27 325.35 527.9 319C525.53 312.65 522.5 305.58 520.8 300.8C519.1 296.02 516.75 292.52 517.7 290.3Z" fill="url(#gp)" stroke="#454545" stroke-width="0.8"/>
<path d="M549 451.9a29.600 29.600 0 1 0 0.010 0zM549 465a16.500 16.500 0 1 1 -0.010 0z" fill="#a2a2a2" fill-rule="evenodd" stroke="#585858" stroke-width="1.200"/>
<circle cx="549" cy="481.5" r="23" fill="none" stroke="#b9b9b9" stroke-width="6" opacity="0.8" filter="url(#b2)"/>
<path d="M527.5 497.5C528.33 494.03 528.08 493.92 531 493C533.92 492.08 540.17 491 545 492C549.83 493 558.67 495.83 560 499C561.33 502.17 552.17 508.5 553 511C553.83 513.5 561.33 513.5 565 514C568.67 514.5 572.5 515.5 575 514C577.5 512.5 577.08 508.37 580 505C582.92 501.63 587.5 496.5 592.5 493.8C597.5 491.1 603.75 489.1 610 488.8C616.25 488.5 627.08 489.3 630 492C632.92 494.7 628.53 499.92 627.5 505C626.47 510.08 625.47 517.5 623.8 522.5C622.13 527.5 620.63 531.67 617.5 535C614.37 538.33 608.12 540.62 605 542.5C601.88 544.38 599.63 544.22 598.8 546.3C597.97 548.38 598.33 551.88 600 555C601.67 558.12 606.72 560.83 608.8 565C610.88 569.17 611.47 573.75 612.5 580C613.53 586.25 614.58 594.17 615 602.5C615.42 610.83 615.42 622.08 615 630C614.58 637.92 613.5 644.67 612.5 650C611.5 655.33 608.48 659.17 609 662C609.52 664.83 613.5 664.07 615.6 667C617.7 669.93 618.3 676.67 621.6 679.6C624.9 682.53 631.77 682.28 635.4 684.6C639.03 686.92 640.63 689.93 643.4 693.5C646.17 697.07 649.4 704.75 652 706C654.6 707.25 655.83 702.08 659 701C662.17 699.92 666.67 698.75 671 699.5C675.33 700.25 681.5 702.58 685 705.5C688.5 708.42 690.33 712.5 692 717C693.67 721.5 692 727.42 695 732.5C698 737.58 705 741.25 710 747.5C715 753.75 721.03 762.08 725 770C728.97 777.92 732.13 786.67 733.8 795C735.47 803.33 736.05 810.83 735 820C733.95 829.17 731.67 840.83 727.5 850C723.33 859.17 717.08 867.92 710 875C702.92 882.08 694.58 887.92 685 892.5C675.42 897.08 663.33 900.42 652.5 902.5C641.67 904.58 627.92 905 620 905C612.08 905 609.83 903.33 605 902.5C600.17 901.67 593.08 899.17 591 900C588.92 900.83 592.25 904 592.5 907.5C592.75 911 594.58 917.25 592.5 921C590.42 924.75 586.67 927.5 580 930C573.33 932.5 562.5 933.92 552.5 936C542.5 938.08 527.92 941.67 520 942.5C512.08 943.33 509.17 942.45 505 941C500.83 939.55 500.83 935.63 495 933.8C489.17 931.97 479.17 932.13 470 930C460.83 927.87 447.92 925.17 440 921C432.08 916.83 425.83 910.17 422.5 905C419.17 899.83 421.67 894.17 420 890C418.33 885.83 417.5 879.17 412.5 880C407.5 880.83 395.83 891.87 390 895C384.17 898.13 381.03 900.05 377.5 898.8C373.97 897.55 370.47 893.13 368.8 887.5C367.13 881.87 366.05 871.25 367.5 865C368.95 858.75 371.08 855.67 377.5 850C383.92 844.33 400.42 835.17 406 831C411.58 826.83 410.53 828.92 411 825C411.47 821.08 409.22 811.67 408.8 807.5C408.38 803.33 408 804.35 408.5 800C409 795.65 410.12 787.13 411.8 781.4C413.48 775.67 416.15 770.1 418.6 765.6C421.05 761.1 426.6 759.08 426.5 754.4C426.4 749.72 420.82 743.13 418 737.5C415.18 731.87 412.43 724.6 409.6 720.6C406.77 716.6 402.88 716.27 401 713.5C399.12 710.73 398.3 707 398.3 704C398.3 701 399.47 697.67 401 695.5C402.53 693.33 405 691.87 407.5 691C410 690.13 413.25 689.88 416 690.3C418.75 690.72 421.92 691.72 424 693.5C426.08 695.28 427.72 697.8 428.5 701C429.28 704.2 427.17 708.2 428.7 712.7C430.23 717.2 434.68 722.95 437.7 728C440.72 733.05 444.35 742.73 446.8 743C449.25 743.27 450.9 735.43 452.4 729.6C453.9 723.77 454.7 714.77 455.8 708C456.9 701.23 457.68 693.67 459 689C460.32 684.33 461.37 684.67 463.7 680C466.03 675.33 470.45 664.5 473 661C475.55 657.5 479.08 661.25 479 659C478.92 656.75 474.08 654 472.5 647.5C470.92 641 469.28 627.92 469.5 620C469.72 612.08 472.05 605.83 473.8 600C475.55 594.17 477.72 589 480 585C482.28 581 487.5 578.5 487.5 576C487.5 573.5 482.28 573.08 480 570C477.72 566.92 475.05 562.08 473.8 557.5C472.55 552.92 471.88 547.5 472.5 542.5C473.12 537.5 474.58 531.67 477.5 527.5C480.42 523.33 485.42 519.78 490 517.5C494.58 515.22 500 513.58 505 513.8C510 514.02 516.5 518.8 520 518.8C523.5 518.8 524.75 517.35 526 513.8C527.25 510.25 526.67 500.97 527.5 497.5Z" fill="#939393" stroke="#424242" stroke-width="1.200"/>
<clipPath id="cb"><path d="M527.5 497.5C528.33 494.03 528.08 493.92 531 493C533.92 492.08 540.17 491 545 492C549.83 493 558.67 495.83 560 499C561.33 502.17 552.17 508.5 553 511C553.83 513.5 561.33 513.5 565 514C568.67 514.5 572.5 515.5 575 514C577.5 512.5 577.08 508.37 580 505C582.92 501.63 587.5 496.5 592.5 493.8C597.5 491.1 603.75 489.1 610 488.8C616.25 488.5 627.08 489.3 630 492C632.92 494.7 628.53 499.92 627.5 505C626.47 510.08 625.47 517.5 623.8 522.5C622.13 527.5 620.63 531.67 617.5 535C614.37 538.33 608.12 540.62 605 542.5C601.88 544.38 599.63 544.22 598.8 546.3C597.97 548.38 598.33 551.88 600 555C601.67 558.12 606.72 560.83 608.8 565C610.88 569.17 611.47 573.75 612.5 580C613.53 586.25 614.58 594.17 615 602.5C615.42 610.83 615.42 622.08 615 630C614.58 637.92 613.5 644.67 612.5 650C611.5 655.33 608.48 659.17 609 662C609.52 664.83 613.5 664.07 615.6 667C617.7 669.93 618.3 676.67 621.6 679.6C624.9 682.53 631.77 682.28 635.4 684.6C639.03 686.92 640.63 689.93 643.4 693.5C646.17 697.07 649.4 704.75 652 706C654.6 707.25 655.83 702.08 659 701C662.17 699.92 666.67 698.75 671 699.5C675.33 700.25 681.5 702.58 685 705.5C688.5 708.42 690.33 712.5 692 717C693.67 721.5 692 727.42 695 732.5C698 737.58 705 741.25 710 747.5C715 753.75 721.03 762.08 725 770C728.97 777.92 732.13 786.67 733.8 795C735.47 803.33 736.05 810.83 735 820C733.95 829.17 731.67 840.83 727.5 850C723.33 859.17 717.08 867.92 710 875C702.92 882.08 694.58 887.92 685 892.5C675.42 897.08 663.33 900.42 652.5 902.5C641.67 904.58 627.92 905 620 905C612.08 905 609.83 903.33 605 902.5C600.17 901.67 593.08 899.17 591 900C588.92 900.83 592.25 904 592.5 907.5C592.75 911 594.58 917.25 592.5 921C590.42 924.75 586.67 927.5 580 930C573.33 932.5 562.5 933.92 552.5 936C542.5 938.08 527.92 941.67 520 942.5C512.08 943.33 509.17 942.45 505 941C500.83 939.55 500.83 935.63 495 933.8C489.17 931.97 479.17 932.13 470 930C460.83 927.87 447.92 925.17 440 921C432.08 916.83 425.83 910.17 422.5 905C419.17 899.83 421.67 894.17 420 890C418.33 885.83 417.5 879.17 412.5 880C407.5 880.83 395.83 891.87 390 895C384.17 898.13 381.03 900.05 377.5 898.8C373.97 897.55 370.47 893.13 368.8 887.5C367.13 881.87 366.05 871.25 367.5 865C368.95 858.75 371.08 855.67 377.5 850C383.92 844.33 400.42 835.17 406 831C411.58 826.83 410.53 828.92 411 825C411.47 821.08 409.22 811.67 408.8 807.5C408.38 803.33 408 804.35 408.5 800C409 795.65 410.12 787.13 411.8 781.4C413.48 775.67 416.15 770.1 418.6 765.6C421.05 761.1 426.6 759.08 426.5 754.4C426.4 749.72 420.82 743.13 418 737.5C415.18 731.87 412.43 724.6 409.6 720.6C406.77 716.6 402.88 716.27 401 713.5C399.12 710.73 398.3 707 398.3 704C398.3 701 399.47 697.67 401 695.5C402.53 693.33 405 691.87 407.5 691C410 690.13 413.25 689.88 416 690.3C418.75 690.72 421.92 691.72 424 693.5C426.08 695.28 427.72 697.8 428.5 701C429.28 704.2 427.17 708.2 428.7 712.7C430.23 717.2 434.68 722.95 437.7 728C440.72 733.05 444.35 742.73 446.8 743C449.25 743.27 450.9 735.43 452.4 729.6C453.9 723.77 454.7 714.77 455.8 708C456.9 701.23 457.68 693.67 459 689C460.32 684.33 461.37 684.67 463.7 680C466.03 675.33 470.45 664.5 473 661C475.55 657.5 479.08 661.25 479 659C478.92 656.75 474.08 654 472.5 647.5C470.92 641 469.28 627.92 469.5 620C469.72 612.08 472.05 605.83 473.8 600C475.55 594.17 477.72 589 480 585C482.28 581 487.5 578.5 487.5 576C487.5 573.5 482.28 573.08 480 570C477.72 566.92 475.05 562.08 473.8 557.5C472.55 552.92 471.88 547.5 472.5 542.5C473.12 537.5 474.58 531.67 477.5 527.5C480.42 523.33 485.42 519.78 490 517.5C494.58 515.22 500 513.58 505 513.8C510 514.02 516.5 518.8 520 518.8C523.5 518.8 524.75 517.35 526 513.8C527.25 510.25 526.67 500.97 527.5 497.5Z"/></clipPath>
<g clip-path="url(#cb)">
<path d="M590 748C597.5 743.5 609.67 743.33 620 738C630.33 732.67 640.33 719.67 652 716C663.67 712.33 680 710.33 690 716C700 721.67 704.5 735.83 712 750C719.5 764.17 732.33 784.33 735 801C737.67 817.67 733.83 836.17 728 850C722.17 863.83 712.67 875.17 700 884C687.33 892.83 667.83 900 652 903C636.17 906 616.17 905 605 902C593.83 899 591.5 893.67 585 885C578.5 876.33 569.17 864.17 566 850C562.83 835.83 564.5 814.17 566 800C567.5 785.83 571 773.67 575 765C579 756.33 582.5 752.5 590 748Z" fill="url(#gpot)" />
<path d="M705 738C707.5 739.67 729.83 774.67 735 790C740.17 805.33 739.33 816.33 736 830C732.67 843.67 722.67 861.67 715 872C707.33 882.33 691.17 894 690 892C688.83 890 702.67 872 708 860C713.33 848 720 833.33 722 820C724 806.67 722.83 793.67 720 780C717.17 766.33 702.5 736.33 705 738Z" fill="#5e5e5e" opacity="0.75" />
<path d="M411 785C416.33 780 428.5 793.83 440 800C451.5 806.17 466.67 817 480 822C493.33 827 506.67 826.17 520 830C533.33 833.83 548 832.5 560 845C572 857.5 586.67 891.67 592 905C597.33 918.33 600.67 918.83 592 925C583.33 931.17 555.33 939.17 540 942C524.67 944.83 516.67 945.33 500 942C483.33 938.67 453.33 930.67 440 922C426.67 913.33 425.33 905.33 420 890C414.67 874.67 409.5 847.5 408 830C406.5 812.5 405.67 790 411 785Z" fill="#8a8a8a" />
<ellipse cx="500" cy="872" rx="20" ry="28" fill="#a6a6a6" transform="rotate(-25 500 872)" opacity="0.6"/>
<path d="M368 870C369.33 862.17 373 855 380 848C387 841 403.67 827.67 410 828C416.33 828.33 417.67 841.33 418 850C418.33 858.67 417.5 872.17 412 880C406.5 887.83 391.67 894.5 385 897C378.33 899.5 374.83 899.5 372 895C369.17 890.5 366.67 877.83 368 870Z" fill="#9d9d9d" />
<path d="M506 664C506.33 664.33 513.5 672.67 520 676C526.5 679.33 536.33 684.33 545 684C553.67 683.67 565.5 676.67 572 674C578.5 671.33 581 663.67 584 668C587 672.33 590.67 688 590 700C589.33 712 585 733.67 580 740C575 746.33 568.33 740.17 560 738C551.67 735.83 534.83 730.67 530 727C525.17 723.33 532.67 719.67 531 716C529.33 712.33 524.83 708.33 520 705C515.17 701.67 503 698.83 502 696C501 693.17 511.33 691.67 514 688C516.67 684.33 519.33 678 518 674C516.67 670 505.67 663.67 506 664Z" fill="#939393" />
<path d="M487 576C491.83 570.5 497 566.67 505 562C513 557.33 524.17 550 535 548C545.83 546 559.17 549.33 570 550C580.83 550.67 592.83 547 600 552C607.17 557 610.33 567 613 580C615.67 593 616.17 617.5 616 630C615.83 642.5 614.67 648.67 612 655C609.33 661.33 604.5 665.17 600 668C595.5 670.83 587 676.67 585 672C583 667.33 587.17 650.33 588 640C588.83 629.67 591.33 619.17 590 610C588.67 600.83 585 590.67 580 585C575 579.33 568.33 577.5 560 576C551.67 574.5 538.33 573.67 530 576C521.67 578.33 515 583.5 510 590C505 596.5 501.33 605.83 500 615C498.67 624.17 500.67 636.17 502 645C503.33 653.83 510 664.17 508 668C506 671.83 495.33 670.17 490 668C484.67 665.83 479.33 663 476 655C472.67 647 470 630 470 620C470 610 473.17 602.33 476 595C478.83 587.67 482.17 581.5 487 576Z" fill="#909090" />
<path d="M487 576C491.83 570.5 497 566.67 505 562C513 557.33 524.17 550 535 548C545.83 546 559.17 549.33 570 550C580.83 550.67 592.83 547 600 552C607.17 557 610.33 567 613 580C615.67 593 616.17 617.5 616 630C615.83 642.5 614.67 648.67 612 655C609.33 661.33 604.5 665.17 600 668C595.5 670.83 587 676.67 585 672C583 667.33 587.17 650.33 588 640C588.83 629.67 591.33 619.17 590 610C588.67 600.83 585 590.67 580 585C575 579.33 568.33 577.5 560 576C551.67 574.5 538.33 573.67 530 576C521.67 578.33 515 583.5 510 590C505 596.5 501.33 605.83 500 615C498.67 624.17 500.67 636.17 502 645C503.33 653.83 510 664.17 508 668C506 671.83 495.33 670.17 490 668C484.67 665.83 479.33 663 476 655C472.67 647 470 630 470 620C470 610 473.17 602.33 476 595C478.83 587.67 482.17 581.5 487 576Z" fill="url(#hairp)" />
<ellipse cx="544" cy="621" rx="44" ry="47" fill="url(#gface)"/>
<path d="M500 615C500.17 605.83 501.83 596.5 506 590C510.17 583.5 516 578.33 525 576C534 573.67 550.5 573.67 560 576C569.5 578.33 577.33 582.67 582 590C586.67 597.33 587.5 610.83 588 620C588.5 629.17 588 638 585 645C582 652 576.67 658.17 570 662C563.33 665.83 553.33 668 545 668C536.67 668 526.67 665.83 520 662C513.33 658.17 508.33 652.83 505 645C501.67 637.17 499.83 624.17 500 615Z" fill="none" stroke="#2e2e2e" stroke-width="0.8" opacity="0.55" />
<path d="M515 662C519.17 661.67 535 672.33 545 672C555 671.67 570.83 660 575 660C579.17 660 575 668.33 570 672C565 675.67 553.33 681.67 545 682C536.67 682.33 525 677.33 520 674C515 670.67 510.83 662.33 515 662Z" fill="#7a7a7a" opacity="0.8" />
<g filter="url(#b3)">
<path d="M462 672q-10 30-8 70" fill="none" stroke="#4d4d4d" stroke-width="10" opacity="0.85" />
<path d="M560 700q10 20 28 40" fill="none" stroke="#5e5e5e" stroke-width="9" opacity="0.6" />
<path d="M520 668q25 14 52 0" fill="none" stroke="#525252" stroke-width="7" opacity="0.8" />
<path d="M500 600q-4 30 8 58" fill="none" stroke="#666666" stroke-width="6" opacity="0.6" />
<path d="M588 596q4 30-6 60" fill="none" stroke="#666666" stroke-width="6" opacity="0.55" />
<path d="M412 800q-4 40 14 90" fill="none" stroke="#626262" stroke-width="8" opacity="0.6" />
<path d="M560 850q10 40 30 60" fill="none" stroke="#575757" stroke-width="8" opacity="0.7" />
<path d="M470 930q40 12 110 0" fill="none" stroke="#626262" stroke-width="7" opacity="0.6" />
<path d="M566 800q-4 40 22 86" fill="none" stroke="#575757" stroke-width="7" opacity="0.7" />
<path d="M726 770q14 40-6 90q-20 30-60 40" fill="none" stroke="#4d4d4d" stroke-width="10" opacity="0.8" />
<path d="M622 710q10 6 22 22" fill="none" stroke="#626262" stroke-width="6" opacity="0.6" />
<ellipse cx="655" cy="800" rx="26" ry="34" fill="#aeaeae" transform="rotate(20 655 800)" opacity="0.7"/>
<ellipse cx="620" cy="694" rx="14" ry="9" fill="#b5b5b5" transform="rotate(35 620 694)" opacity="0.8"/>
<ellipse cx="502" cy="870" rx="12" ry="20" fill="#b0b0b0" transform="rotate(-25 502 870)" opacity="0.6"/>
<ellipse cx="545" cy="615" rx="24" ry="28" fill="#b5b5b5" opacity="0.6"/>
<ellipse cx="390" cy="872" rx="14" ry="12" fill="#ababab" transform="rotate(-30 390 872)" opacity="0.7"/>
</g>
<path d="M527.5 497.5C528.33 494.03 528.08 493.92 531 493C533.92 492.08 540.17 491 545 492C549.83 493 558.67 495.83 560 499C561.33 502.17 552.17 508.5 553 511C553.83 513.5 561.33 513.5 565 514C568.67 514.5 572.5 515.5 575 514C577.5 512.5 577.08 508.37 580 505C582.92 501.63 587.5 496.5 592.5 493.8C597.5 491.1 603.75 489.1 610 488.8C616.25 488.5 627.08 489.3 630 492C632.92 494.7 628.53 499.92 627.5 505C626.47 510.08 625.47 517.5 623.8 522.5C622.13 527.5 620.63 531.67 617.5 535C614.37 538.33 608.12 540.62 605 542.5C601.88 544.38 599.63 544.22 598.8 546.3C597.97 548.38 598.33 551.88 600 555C601.67 558.12 606.72 560.83 608.8 565C610.88 569.17 611.47 573.75 612.5 580C613.53 586.25 614.58 594.17 615 602.5C615.42 610.83 615.42 622.08 615 630C614.58 637.92 613.5 644.67 612.5 650C611.5 655.33 608.48 659.17 609 662C609.52 664.83 613.5 664.07 615.6 667C617.7 669.93 618.3 676.67 621.6 679.6C624.9 682.53 631.77 682.28 635.4 684.6C639.03 686.92 640.63 689.93 643.4 693.5C646.17 697.07 649.4 704.75 652 706C654.6 707.25 655.83 702.08 659 701C662.17 699.92 666.67 698.75 671 699.5C675.33 700.25 681.5 702.58 685 705.5C688.5 708.42 690.33 712.5 692 717C693.67 721.5 692 727.42 695 732.5C698 737.58 705 741.25 710 747.5C715 753.75 721.03 762.08 725 770C728.97 777.92 732.13 786.67 733.8 795C735.47 803.33 736.05 810.83 735 820C733.95 829.17 731.67 840.83 727.5 850C723.33 859.17 717.08 867.92 710 875C702.92 882.08 694.58 887.92 685 892.5C675.42 897.08 663.33 900.42 652.5 902.5C641.67 904.58 627.92 905 620 905C612.08 905 609.83 903.33 605 902.5C600.17 901.67 593.08 899.17 591 900C588.92 900.83 592.25 904 592.5 907.5C592.75 911 594.58 917.25 592.5 921C590.42 924.75 586.67 927.5 580 930C573.33 932.5 562.5 933.92 552.5 936C542.5 938.08 527.92 941.67 520 942.5C512.08 943.33 509.17 942.45 505 941C500.83 939.55 500.83 935.63 495 933.8C489.17 931.97 479.17 932.13 470 930C460.83 927.87 447.92 925.17 440 921C432.08 916.83 425.83 910.17 422.5 905C419.17 899.83 421.67 894.17 420 890C418.33 885.83 417.5 879.17 412.5 880C407.5 880.83 395.83 891.87 390 895C384.17 898.13 381.03 900.05 377.5 898.8C373.97 897.55 370.47 893.13 368.8 887.5C367.13 881.87 366.05 871.25 367.5 865C368.95 858.75 371.08 855.67 377.5 850C383.92 844.33 400.42 835.17 406 831C411.58 826.83 410.53 828.92 411 825C411.47 821.08 409.22 811.67 408.8 807.5C408.38 803.33 408 804.35 408.5 800C409 795.65 410.12 787.13 411.8 781.4C413.48 775.67 416.15 770.1 418.6 765.6C421.05 761.1 426.6 759.08 426.5 754.4C426.4 749.72 420.82 743.13 418 737.5C415.18 731.87 412.43 724.6 409.6 720.6C406.77 716.6 402.88 716.27 401 713.5C399.12 710.73 398.3 707 398.3 704C398.3 701 399.47 697.67 401 695.5C402.53 693.33 405 691.87 407.5 691C410 690.13 413.25 689.88 416 690.3C418.75 690.72 421.92 691.72 424 693.5C426.08 695.28 427.72 697.8 428.5 701C429.28 704.2 427.17 708.2 428.7 712.7C430.23 717.2 434.68 722.95 437.7 728C440.72 733.05 444.35 742.73 446.8 743C449.25 743.27 450.9 735.43 452.4 729.6C453.9 723.77 454.7 714.77 455.8 708C456.9 701.23 457.68 693.67 459 689C460.32 684.33 461.37 684.67 463.7 680C466.03 675.33 470.45 664.5 473 661C475.55 657.5 479.08 661.25 479 659C478.92 656.75 474.08 654 472.5 647.5C470.92 641 469.28 627.92 469.5 620C469.72 612.08 472.05 605.83 473.8 600C475.55 594.17 477.72 589 480 585C482.28 581 487.5 578.5 487.5 576C487.5 573.5 482.28 573.08 480 570C477.72 566.92 475.05 562.08 473.8 557.5C472.55 552.92 471.88 547.5 472.5 542.5C473.12 537.5 474.58 531.67 477.5 527.5C480.42 523.33 485.42 519.78 490 517.5C494.58 515.22 500 513.58 505 513.8C510 514.02 516.5 518.8 520 518.8C523.5 518.8 524.75 517.35 526 513.8C527.25 510.25 526.67 500.97 527.5 497.5Z" fill="none" stroke="#414141" stroke-width="7" opacity="0.7" filter="url(#b2)"/>
<path d="M534 524C536 520.67 542.67 518.83 548 517C553.33 515.17 561 512.67 566 513C571 513.33 574.67 516.17 578 519C581.33 521.83 583.5 526.17 586 530C588.5 533.83 596.5 540.33 593 542C589.5 543.67 574.5 540.83 565 540C555.5 539.17 541.17 539.67 536 537C530.83 534.33 532 527.33 534 524Z" fill="#8b8b8b" stroke="#2e2e2e" stroke-width="0.8" />
<path d="M540 538L542 524.6" fill="none" stroke="#2e2e2e" stroke-width="0.8" opacity="0.8" />
<path d="M544.3 538.3L546.55 523.7" fill="none" stroke="#2e2e2e" stroke-width="0.8" opacity="0.8" />
<path d="M548.6 538.6L551.1 522.8" fill="none" stroke="#2e2e2e" stroke-width="0.8" opacity="0.8" />
<path d="M552.9 538.9L555.65 521.9" fill="none" stroke="#2e2e2e" stroke-width="0.8" opacity="0.8" />
<path d="M557.2 539.2L560.2 521" fill="none" stroke="#2e2e2e" stroke-width="0.8" opacity="0.8" />
<path d="M561.5 539.5L564.75 521.9" fill="none" stroke="#2e2e2e" stroke-width="0.8" opacity="0.8" />
<path d="M565.8 539.8L569.3 522.8" fill="none" stroke="#2e2e2e" stroke-width="0.8" opacity="0.8" />
<path d="M570.1 540.1L573.85 523.7" fill="none" stroke="#2e2e2e" stroke-width="0.8" opacity="0.8" />
<path d="M574.4 540.4L578.4 524.6" fill="none" stroke="#2e2e2e" stroke-width="0.8" opacity="0.8" />
<path d="M578.7 540.7L582.95 525.5" fill="none" stroke="#2e2e2e" stroke-width="0.8" opacity="0.8" />
<path d="M583 541L587.5 526.4" fill="none" stroke="#2e2e2e" stroke-width="0.8" opacity="0.8" />
<path d="M587.3 541.3L592.05 527.3" fill="none" stroke="#2e2e2e" stroke-width="0.8" opacity="0.8" />
<path d="M527 541.500C550 536 580 540 600 545L599 553C580 548 550 545.500 528 549.500Z" fill="#a5a5a5" stroke="#2e2e2e" stroke-width="0.8" />
<path d="M527 497C527.33 494.92 528.83 492.83 531 492.5C533.17 492.17 537.33 495.08 540 495C542.67 494.92 544.33 491.92 547 492C549.67 492.08 553.67 494.25 556 495.5C558.33 496.75 561.17 498.08 561 499.5C560.83 500.92 556.5 501.58 555 504C553.5 506.42 553 511 552 514C551 517 551.33 520.33 549 522C546.67 523.67 540.83 525.33 538 524C535.17 522.67 533.5 517.17 532 514C530.5 510.83 529.83 507.83 529 505C528.17 502.17 526.67 499.08 527 497Z" fill="#959595" stroke="#2e2e2e" stroke-width="0.9" />
<ellipse cx="544" cy="508" rx="3.5" ry="5.5" fill="#9f9f9f" stroke="#2e2e2e" stroke-width="0.8"/>
<ellipse cx="499.35" cy="566.68" rx="10" ry="5.2" fill="#9f9f9f" transform="rotate(100.0 499.35 566.68)" stroke="#2e2e2e" stroke-width="0.8"/>
<ellipse cx="491.56" cy="563.61" rx="10" ry="5.2" fill="#9f9f9f" transform="rotate(123.00000000000001 491.56 563.61)" stroke="#2e2e2e" stroke-width="0.8"/>
<ellipse cx="485.59" cy="557.74" rx="10" ry="5.2" fill="#9f9f9f" transform="rotate(146.0 485.59 557.74)" stroke="#2e2e2e" stroke-width="0.8"/>
<ellipse cx="482.39" cy="550.01" rx="10" ry="5.2" fill="#9f9f9f" transform="rotate(169.0 482.39 550.01)" stroke="#2e2e2e" stroke-width="0.8"/>
<ellipse cx="482.46" cy="541.63" rx="10" ry="5.2" fill="#9f9f9f" transform="rotate(192.00000000000003 482.46 541.63)" stroke="#2e2e2e" stroke-width="0.8"/>
<ellipse cx="485.8" cy="533.95" rx="10" ry="5.2" fill="#9f9f9f" transform="rotate(215.0 485.8 533.95)" stroke="#2e2e2e" stroke-width="0.8"/>
<ellipse cx="491.87" cy="528.19" rx="10" ry="5.2" fill="#9f9f9f" transform="rotate(238.0 491.87 528.19)" stroke="#2e2e2e" stroke-width="0.8"/>
<ellipse cx="499.71" cy="525.26" rx="10" ry="5.2" fill="#9f9f9f" transform="rotate(261.0 499.71 525.26)" stroke="#2e2e2e" stroke-width="0.8"/>
<ellipse cx="508.08" cy="525.62" rx="10" ry="5.2" fill="#9f9f9f" transform="rotate(284.0 508.08 525.62)" stroke="#2e2e2e" stroke-width="0.8"/>
<ellipse cx="515.64" cy="529.23" rx="10" ry="5.2" fill="#9f9f9f" transform="rotate(307.0 515.64 529.23)" stroke="#2e2e2e" stroke-width="0.8"/>
<ellipse cx="521.19" cy="535.5" rx="10" ry="5.2" fill="#9f9f9f" transform="rotate(330.0 521.19 535.5)" stroke="#2e2e2e" stroke-width="0.8"/>
<ellipse cx="505" cy="542" rx="13.4" ry="13.4" fill="#a0a0a0" stroke="#2e2e2e" stroke-width="0.9"/>
<ellipse cx="505" cy="542" rx="8" ry="8" fill="#8a8a8a" stroke="#2e2e2e" stroke-width="0.8"/>
<ellipse cx="505" cy="542" rx="3.5" ry="3.5" fill="#a5a5a5" stroke="#2e2e2e" stroke-width="0.7"/>
<ellipse cx="512.8" cy="557.6" rx="10.5" ry="10.5" fill="#a0a0a0" stroke="#2e2e2e" stroke-width="0.9"/>
<ellipse cx="512.8" cy="557.6" rx="5.8" ry="5.8" fill="#8a8a8a" stroke="#2e2e2e" stroke-width="0.8"/>
<ellipse cx="512.8" cy="557.6" rx="2.4" ry="2.4" fill="#a5a5a5" stroke="#2e2e2e" stroke-width="0.7"/>
<path d="M575.5 511C575.97 505.88 582.33 500.03 586.8 496.3C591.27 492.57 596.43 489.95 602.3 488.6C608.17 487.25 617.38 487.55 622 488.2C626.62 488.85 629.42 489.27 630 492.5C630.58 495.73 627.07 502.27 625.5 507.6C623.93 512.93 622.83 519.57 620.6 524.5C618.37 529.43 615.4 534.03 612.1 537.2C608.8 540.37 604.08 543.2 600.8 543.5C597.52 543.8 595.2 541.75 592.4 539C589.6 536.25 586.82 531.67 584 527C581.18 522.33 575.03 516.12 575.5 511Z" fill="#858585" stroke="#2e2e2e" stroke-width="0.9" />
<path d="M587.71 509.25L569.96 501" stroke="#2e2e2e" stroke-width="0.9" opacity="0.8" clip-path="url(#cfe)"/>
<path d="M590.19 506.13L576.21 494.06" stroke="#2e2e2e" stroke-width="0.9" opacity="0.8" clip-path="url(#cfe)"/>
<path d="M593.48 503.87L584.5 489.04" stroke="#2e2e2e" stroke-width="0.9" opacity="0.8" clip-path="url(#cfe)"/>
<path d="M597.29 502.67L594.08 486.37" stroke="#2e2e2e" stroke-width="0.9" opacity="0.8" clip-path="url(#cfe)"/>
<path d="M601.28 502.63L604.13 486.29" stroke="#2e2e2e" stroke-width="0.9" opacity="0.8" clip-path="url(#cfe)"/>
<path d="M605.11 503.76L613.77 488.81" stroke="#2e2e2e" stroke-width="0.9" opacity="0.8" clip-path="url(#cfe)"/>
<path d="M608.43 505.97L622.15 493.71" stroke="#2e2e2e" stroke-width="0.9" opacity="0.8" clip-path="url(#cfe)"/>
<path d="M610.97 509.05L628.54 500.55" stroke="#2e2e2e" stroke-width="0.9" opacity="0.8" clip-path="url(#cfe)"/>
<path d="M612.5 512.73L632.39 508.74" stroke="#2e2e2e" stroke-width="0.9" opacity="0.8" clip-path="url(#cfe)"/>
<path d="M612.88 516.71L633.35 517.57" stroke="#2e2e2e" stroke-width="0.9" opacity="0.8" clip-path="url(#cfe)"/>
<path d="M612.09 520.62L631.35 526.26" stroke="#2e2e2e" stroke-width="0.9" opacity="0.8" clip-path="url(#cfe)"/>
<path d="M610.18 524.12L626.55 534.05" stroke="#2e2e2e" stroke-width="0.9" opacity="0.8" clip-path="url(#cfe)"/>
<path d="M607.34 526.92L619.38 540.27" stroke="#2e2e2e" stroke-width="0.9" opacity="0.8" clip-path="url(#cfe)"/>
<path d="M603.8 528.76L610.47 544.37" stroke="#2e2e2e" stroke-width="0.9" opacity="0.8" clip-path="url(#cfe)"/>
<path d="M599.87 529.49L600.59 545.98" stroke="#2e2e2e" stroke-width="0.9" opacity="0.8" clip-path="url(#cfe)"/>
<path d="M595.91 529.04L590.6 544.98" stroke="#2e2e2e" stroke-width="0.9" opacity="0.8" clip-path="url(#cfe)"/>
<path d="M575.5 511C575.97 505.88 582.33 500.03 586.8 496.3C591.27 492.57 596.43 489.95 602.3 488.6C608.17 487.25 617.38 487.55 622 488.2C626.62 488.85 629.42 489.27 630 492.5C630.58 495.73 627.07 502.27 625.5 507.6C623.93 512.93 622.83 519.57 620.6 524.5C618.37 529.43 615.4 534.03 612.1 537.2C608.8 540.37 604.08 543.2 600.8 543.5C597.52 543.8 595.2 541.75 592.4 539C589.6 536.25 586.82 531.67 584 527C581.18 522.33 575.03 516.12 575.5 511Z" fill="url(#hairp)" opacity="0.55" />
<ellipse cx="599.4" cy="516" rx="13.4" ry="13.4" fill="#9a9a9a" stroke="#2e2e2e" stroke-width="0.9"/>
<ellipse cx="599.4" cy="516" rx="8.5" ry="8.5" fill="#a5a5a5" stroke="#2e2e2e" stroke-width="0.8"/>
<ellipse cx="600" cy="516.5" rx="5" ry="5" fill="#afafaf" stroke="#2e2e2e" stroke-width="0.7"/>
<path d="M514.2 613Q525.6 602.500 537.6 613Q525.6 620.500 514.2 613Z" fill="#b1b1b1" stroke="#2e2e2e" stroke-width="0.9" />
<path d="M513.2 613.300Q525.6 602.300 538.6 613.300" fill="none" stroke="#222222" stroke-width="1.7" opacity="0.9" />
<ellipse cx="526.1" cy="612.2" rx="3.6" ry="3.4" fill="#bdbdbd" stroke="#2e2e2e" stroke-width="0.9"/>
<path d="M556.4 613Q568 602.500 579.9 613Q568 620.500 556.4 613Z" fill="#b1b1b1" stroke="#2e2e2e" stroke-width="0.9" />
<path d="M555.4 613.300Q568 602.300 580.9 613.300" fill="none" stroke="#222222" stroke-width="1.7" opacity="0.9" />
<ellipse cx="568.5" cy="612.2" rx="3.6" ry="3.4" fill="#bdbdbd" stroke="#2e2e2e" stroke-width="0.9"/>
<path d="M512.300 605Q524.500 596.800 539.500 604.500" fill="none" stroke="#2e2e2e" stroke-width="1.1" opacity="0.85" />
<path d="M554.500 604Q569.500 596.800 582.700 606" fill="none" stroke="#2e2e2e" stroke-width="1.1" opacity="0.85" />
<path d="M541 626q-1.500 4 2 6q2.500 1 5 2.300q3-1.300 5.500-2.300q3-2 1.500-6" fill="none" stroke="#2e2e2e" stroke-width="1.1" opacity="0.85" />
<path d="M543.500 631.500q1.500-1.500 3 0M550.500 631.500q1.500-1.500 3 0" fill="none" stroke="#222222" stroke-width="1.3" opacity="0.8" />
<path d="M544 606q-1 12 0 20M553 606q1.500 12 1 19" fill="none" stroke="#5e5e5e" stroke-width="2.5" opacity="0.35" filter="url(#b2)"/>
<path d="M534.800 642.600q6-3.200 10.500-1.600q2.700-1.600 5.400 0q5-1.400 11.300 0.800q-6 3-13.800 2.600q-8 0.200-13.400-1.800z" fill="#9f9f9f" stroke="#2e2e2e" stroke-width="1.0" />
<path d="M534.500 642.500q13 4 27.500-0.500" fill="none" stroke="#222222" stroke-width="1.5" opacity="0.85" />
<path d="M539.500 647q8.500 5 18 0" fill="none" stroke="#2e2e2e" stroke-width="1.0" opacity="0.7" />
<path d="M536.500 576q0.500 4 3.500 5.500l6.500 16q2.400 3 4.800 0l6.500-16q3-1.500 3.500-5.500" fill="none" stroke="#2e2e2e" stroke-width="1.3" opacity="0.9" />
<path d="M544.800 578.500l4.400 13.500 4.400-13.500" fill="none" stroke="#2e2e2e" stroke-width="1.1" opacity="0.8" />
<path d="M520 657q25 17 50 0" fill="none" stroke="#585858" stroke-width="1.4" opacity="0.6" />
<path d="M505.700 661.400Q516 682 533.900 687.700T563.900 685.800Q573 676 575.200 663.200" fill="none" stroke="#3d3d3d" stroke-width="5.5" opacity="0.55" stroke-dasharray="2.600 1.400"/>
<path d="M505.700 661.400Q516 682 533.900 687.700T563.900 685.800Q573 676 575.200 663.200" fill="none" stroke="#aaaaaa" stroke-width="2.4" opacity="0.7" stroke-dasharray="2.600 1.400"/>
<path d="M526 670q21 20 44-1" fill="none" stroke="#2e2e2e" stroke-width="1.1" opacity="0.8" />
<path d="M523 673.500q24 23 49.500-1" fill="none" stroke="#2e2e2e" stroke-width="1.1" opacity="0.8" />
<path d="M509 668q14 26 34 31" fill="none" stroke="#3d3d3d" stroke-width="3.5" opacity="0.5" stroke-dasharray="2.200 1.500"/>
<path d="M553 694q9-6 14 1q3 8-4 11q-7 1-6-6q1-3 4-2M558 708q-2 8 4 10q6 0 8-6M549 700q4 12 2 20" fill="none" stroke="#2e2e2e" stroke-width="1.2" opacity="0.85" />
<path d="M575.500 665q7 28-3 52l-8.500 18M583.500 668q6 28-3.500 50l-7 16" fill="none" stroke="#2e2e2e" stroke-width="1.1" opacity="0.8" />
<path d="M579.500 667q6 28-3.500 51l-7.500 17" fill="none" stroke="#b1b1b1" stroke-width="3" opacity="0.5" />
<path d="M474 662C469.5 666.5 464.08 676.5 461 685C457.92 693.5 456.67 704.83 455.5 713C454.33 721.17 452.25 728 454 734C455.75 740 459.33 746 466 749C472.67 752 488.33 754.83 494 752C499.67 749.17 499.17 738.67 500 732C500.83 725.33 498.67 718 499 712C499.33 706 499.5 700 502 696C504.5 692 511.33 691.67 514 688C516.67 684.33 519.33 678.17 518 674C516.67 669.83 511 665.67 506 663C501 660.33 493.33 658.17 488 658C482.67 657.83 478.5 657.5 474 662Z" fill="url(#gua)" />
<path d="M506 663C508 664.83 516.67 669.83 518 674C519.33 678.17 516.67 684.33 514 688C511.33 691.67 504 694.67 502 696" fill="none" stroke="#4d4d4d" stroke-width="4" opacity="0.5" filter="url(#b2)"/>
<path d="M505 752q-5 26 8 40q14 12 34 4l6-4" fill="none" stroke="#3d3d3d" stroke-width="6.5" opacity="0.8" />
<path d="M505 752q-5 26 8 40q14 12 34 4l6-4" fill="none" stroke="#9f9f9f" stroke-width="4.6" opacity="1" />
<path d="M505 752q-5 26 8 40q14 12 34 4l6-4" fill="none" stroke="#b5b5b5" stroke-width="1.6" opacity="0.6" />
<path d="M503 750C498.92 744.67 499.17 741.33 500 738C500.83 734.67 503 731.67 508 730C513 728.33 522.55 727.25 530 728C537.45 728.75 544.23 731.33 552.7 734.5C561.17 737.67 572.82 742.3 580.8 747C588.78 751.7 596.4 757.87 600.6 762.7C604.8 767.53 606.43 771.45 606 776C605.57 780.55 602.2 787.25 598 790C593.8 792.75 588.35 793.5 580.8 792.5C573.25 791.5 562.08 787.75 552.7 784C543.32 780.25 532.78 775.67 524.5 770C516.22 764.33 507.08 755.33 503 750Z" fill="url(#gfa)" stroke="#2e2e2e" stroke-width="1.0" />
<path d="M506 754C509.08 756.83 516.72 765.83 524.5 771C532.28 776.17 543.32 781.25 552.7 785C562.08 788.75 573.25 792.5 580.8 793.5C588.35 794.5 595.13 791.42 598 791" fill="none" stroke="#414141" stroke-width="4" opacity="0.55" filter="url(#b2)"/>
<path d="M493.5 747C494.08 745 495.35 738.08 497 735C498.65 731.92 500.9 729.83 503.4 728.5C505.9 727.17 510.57 727.25 512 727" fill="none" stroke="#3d3d3d" stroke-width="10" opacity="0.9" stroke-linecap="round"/>
<path d="M493.5 747C494.08 745 495.35 738.08 497 735C498.65 731.92 500.9 729.83 503.4 728.5C505.9 727.17 510.57 727.25 512 727" fill="none" stroke="#a2a2a2" stroke-width="8" opacity="1" stroke-linecap="round"/>
<path d="M491.5 745C492.08 743.08 493.33 736.5 495 733.5C496.67 730.5 500.42 728.08 501.5 727" fill="none" stroke="#bcbcbc" stroke-width="2.2" opacity="0.7" stroke-linecap="round"/>
<path d="M527 712C528.83 711.58 534.67 709.97 538 709.5C541.33 709.03 545.5 709.25 547 709.2" fill="none" stroke="#3d3d3d" stroke-width="9.5" opacity="0.9" stroke-linecap="round"/>
<path d="M527 712C528.83 711.58 534.67 709.97 538 709.5C541.33 709.03 545.5 709.25 547 709.2" fill="none" stroke="#a2a2a2" stroke-width="7.5" opacity="1" stroke-linecap="round"/>
<path d="M497.7 698.6C499.8 696.72 508.27 700.1 513.2 702.1C518.13 704.1 524.5 707.55 527.3 710.6C530.1 713.65 530.72 717.12 530 720.4C529.28 723.68 526.97 728.88 523 730.3C519.03 731.72 509.93 731.72 506.2 728.9C502.47 726.08 502.02 718.45 500.6 713.4C499.18 708.35 495.6 700.48 497.7 698.6Z" fill="url(#gcone)" stroke="#2e2e2e" stroke-width="1.2" />
<path d="M582.83 744.25C585.65 742.86 600.11 740.68 607.63 741.99C615.14 743.31 622.66 747.44 627.92 752.14C633.18 756.83 636.93 763.41 639.19 770.17C641.44 776.93 642.19 785.58 641.44 792.71C640.69 799.85 638.44 806.62 634.68 813C630.92 819.39 623.78 826.15 618.9 831.04C614.02 835.92 607.63 841.93 605.37 842.31C603.12 842.68 603.5 837.05 605.37 833.29C607.25 829.53 613.08 825.78 616.65 819.77C620.21 813.75 625.1 805.11 626.79 797.22C628.48 789.33 629.23 779.86 626.79 772.43C624.35 764.99 618.15 756.27 612.14 752.59C606.13 748.91 595.61 751.72 590.72 750.33C585.84 748.94 580.01 745.64 582.83 744.25Z" fill="#aaaaaa" stroke="#2e2e2e" stroke-width="1.0" />
<path d="M590.72 750.33C594.29 750.71 606.13 748.91 612.14 752.59C618.15 756.27 624.35 764.99 626.79 772.43C629.23 779.86 628.48 789.33 626.79 797.22C625.1 805.11 620.21 813.75 616.65 819.77C613.08 825.78 607.25 831.04 605.37 833.29" fill="none" stroke="#4d4d4d" stroke-width="2.5" opacity="0.6" filter="url(#b2)"/>
<path d="M590.72 750.33C593.35 748.15 606.13 748.91 612.14 752.59C618.15 756.27 624.35 764.99 626.79 772.43C629.23 779.86 628.48 789.33 626.79 797.22C625.1 805.11 620.21 813.75 616.65 819.77C613.08 825.78 608.76 834.04 605.37 833.29C601.99 832.54 597.11 822.77 596.36 815.26C595.61 807.74 600.87 796.47 600.87 788.21C600.87 779.94 598.05 771.97 596.36 765.66C594.67 759.35 588.09 752.51 590.72 750.33Z" fill="#949494" />
<path d="M634.68 747.63C637.69 750.63 648.58 758.9 652.71 765.66C656.85 772.43 659.1 780.32 659.48 788.21C659.85 796.1 658.35 805.11 654.97 813C651.59 820.89 645.58 829.16 639.19 835.55C632.8 841.93 624.54 847.57 616.65 851.33C608.76 855.08 595.98 856.96 591.85 858.09" fill="none" stroke="#2e2e2e" stroke-width="1.0" opacity="0.75" />
<path d="M645.95 752.14C649.33 755.89 661.73 767.17 666.24 774.68C670.75 782.19 673 788.96 673 797.22C673 805.49 670.37 816.01 666.24 824.27C662.11 832.54 655.34 840.81 648.21 846.82C641.07 852.83 632.43 857.34 623.41 860.34C614.39 863.35 598.99 864.1 594.1 864.85" fill="none" stroke="#2e2e2e" stroke-width="1.1" opacity="0.85" />
<path d="M661.73 758.9C664.74 762.28 675.63 772.05 679.77 779.19C683.9 786.33 686.53 792.71 686.53 801.73C686.53 810.75 684.27 823.9 679.77 833.29C675.26 842.68 667.74 851.7 659.48 858.09C651.21 864.48 640.69 868.98 630.17 871.61C619.65 874.24 605 874.62 596.36 873.87C587.72 873.12 581.33 868.23 578.32 867.11" fill="none" stroke="#2e2e2e" stroke-width="1.1" opacity="0.85" />
<path d="M706.82 743.12C709.07 747.63 716.96 760.4 720.34 770.17C723.72 779.94 727.11 791.21 727.11 801.73C727.11 812.25 724.48 823.52 720.34 833.29C716.21 843.06 709.82 852.45 702.31 860.34C694.79 868.23 685.4 875.37 675.26 880.63C665.11 885.89 652.71 889.65 641.44 891.9C630.17 894.16 617.02 894.91 607.63 894.16C598.24 893.41 588.84 888.52 585.09 887.39" fill="none" stroke="#2e2e2e" stroke-width="1.0" opacity="0.7" />
<path d="M713.58 747.63C716.21 752.14 725.98 765.66 729.36 774.68C732.74 783.7 733.87 791.59 733.87 801.73C733.87 811.88 733.12 825.03 729.36 835.55C725.6 846.07 719.22 856.21 711.33 864.85C703.44 873.49 692.92 881.57 682.02 887.39C671.12 893.22 657.22 897.35 645.95 899.79C634.68 902.23 619.65 901.67 614.39 902.05" fill="none" stroke="#2e2e2e" stroke-width="0.9" opacity="0.5" />
<path d="M695.55 770.17C695.92 773.93 697.42 785.2 697.8 792.71C698.18 800.23 699.3 806.99 697.8 815.26C696.3 823.52 694.04 833.67 688.78 842.31C683.52 850.95 674.88 860.72 666.24 867.11C657.6 873.49 647.45 878 636.93 880.63C626.41 883.26 612.51 883.26 603.12 882.89C593.73 882.51 584.33 879.13 580.58 878.38" fill="none" stroke="#5e5e5e" stroke-width="5" opacity="0.35" filter="url(#b2)"/>
<path d="M649.99 751.87c4.46 -3.01 6.58 0.12 2.35 3.48s-2.2 1.99 4.38 2.11" fill="none" stroke="#2e2e2e" stroke-width="1.1" opacity="0.8" />
<path d="M663.53 765.65c5.37 -1.8 6.57 1.79 1.33 3.98s-2.79 1.38 3.77 3.17" fill="none" stroke="#2e2e2e" stroke-width="1.1" opacity="0.8" />
<path d="M673.16 783.86c8.34 -0.44 8.54 3.34 0.22 4.19s-4.53 0.66 4.01 4" fill="none" stroke="#2e2e2e" stroke-width="1.1" opacity="0.8" />
<path d="M674.98 804.76c9.98 2.21 9.17 5.9 -0.91 4.1s-5.54 -0.8 3.63 5.11" fill="none" stroke="#2e2e2e" stroke-width="1.1" opacity="0.8" />
<path d="M669.07 825.03c10.05 5.35 8.28 8.68 -1.97 3.71s-5.68 -2.54 2.6 6.14" fill="none" stroke="#2e2e2e" stroke-width="1.1" opacity="0.8" />
<path d="M657.05 842.24c8.15 7.73 5.55 10.47 -2.89 3.05s-4.73 -3.91 0.81 6.56" fill="none" stroke="#2e2e2e" stroke-width="1.1" opacity="0.8" />
<path d="M640.82 855.11c5.13 8.55 1.89 10.49 -3.6 2.16s-3.16 -4.45 -1.27 6.05" fill="none" stroke="#2e2e2e" stroke-width="1.1" opacity="0.8" />
<path d="M622.1 863.2c2.23 8.02 -1.42 9.03 -4.05 1.12s-1.62 -4.26 -3.04 4.77" fill="none" stroke="#2e2e2e" stroke-width="1.1" opacity="0.8" />
<path d="M602.2 866.59c0 6.43 -3.78 6.43 -4.2 0s-0.42 -3.51 -4.2 2.92" fill="none" stroke="#2e2e2e" stroke-width="1.1" opacity="0.8" />
<path d="M663.43 757.4C692.84 743.21 697.72 754.17 667.5 766.53" fill="#a4a4a4" stroke="#2e2e2e" stroke-width="1.1" opacity="0.9" />
<path d="M673.98 767.62C698.36 760.42 701.3 772.05 676.43 777.31" fill="#a4a4a4" stroke="#2e2e2e" stroke-width="1.1" opacity="0.9" />
<path d="M682 780.52C700.9 778.06 701.82 790.03 682.77 790.49" fill="#a4a4a4" stroke="#2e2e2e" stroke-width="1.1" opacity="0.9" />
<path d="M686.78 795.37C701.99 795.8 700.86 807.75 685.84 805.33" fill="#a4a4a4" stroke="#2e2e2e" stroke-width="1.1" opacity="0.9" />
<path d="M686.32 810.82C701.64 813.94 698.49 825.52 683.7 820.47" fill="#a4a4a4" stroke="#2e2e2e" stroke-width="1.1" opacity="0.9" />
<path d="M682.93 826.09C697.04 831.56 691.97 842.44 678.7 835.15" fill="#a4a4a4" stroke="#2e2e2e" stroke-width="1.1" opacity="0.9" />
<path d="M675.64 839.87C688.53 847.61 681.68 857.46 669.93 848.08" fill="#a4a4a4" stroke="#2e2e2e" stroke-width="1.1" opacity="0.9" />
<path d="M665.9 851.93C676.78 861.26 668.35 869.8 658.87 859.05" fill="#a4a4a4" stroke="#2e2e2e" stroke-width="1.1" opacity="0.9" />
<path d="M653.71 861.23C662.59 871.91 652.83 878.89 645.58 867.05" fill="#a4a4a4" stroke="#2e2e2e" stroke-width="1.1" opacity="0.9" />
<path d="M640.22 867.85C646.92 879.42 636.12 884.64 631.22 872.2" fill="#a4a4a4" stroke="#2e2e2e" stroke-width="1.1" opacity="0.9" />
<path d="M626.19 872.17C630.53 883.67 618.99 886.97 616.58 874.93" fill="#a4a4a4" stroke="#2e2e2e" stroke-width="1.1" opacity="0.9" />
<path d="M611.95 874.12C614.12 884.85 602.19 886.15 602.01 875.2" fill="#a4a4a4" stroke="#2e2e2e" stroke-width="1.1" opacity="0.9" />
<path d="M597.9 873.27C598.22 884 586.25 883.25 587.92 872.64" fill="#a4a4a4" stroke="#2e2e2e" stroke-width="1.1" opacity="0.9" />
<path d="M584.78 869.08C582.83 881.56 571.16 878.78 575.05 866.76" fill="#a4a4a4" stroke="#2e2e2e" stroke-width="1.1" opacity="0.9" />
<ellipse cx="703.28" cy="753.68" rx="7" ry="6" fill="#a9a9a9" opacity="0.5"/>
<path d="M701.82 746.76q9.91 3.84 4.79 13.16" fill="none" stroke="#484848" stroke-width="1.2" opacity="0.55" />
<ellipse cx="711.83" cy="778.02" rx="7" ry="6" fill="#a9a9a9" opacity="0.5"/>
<path d="M711.97 770.95q8.79 5.97 1.71 13.9" fill="none" stroke="#484848" stroke-width="1.2" opacity="0.55" />
<ellipse cx="714.84" cy="804.28" rx="7" ry="6" fill="#a9a9a9" opacity="0.5"/>
<path d="M716.56 797.42q7.22 7.8 -1.46 13.92" fill="none" stroke="#484848" stroke-width="1.2" opacity="0.55" />
<ellipse cx="709.64" cy="830.44" rx="7" ry="6" fill="#a9a9a9" opacity="0.5"/>
<path d="M712.87 824.15q5.29 9.22 -4.56 13.24" fill="none" stroke="#484848" stroke-width="1.2" opacity="0.55" />
<ellipse cx="696.36" cy="853.46" rx="7" ry="6" fill="#a9a9a9" opacity="0.5"/>
<path d="M700.91 848.05q3.07 10.18 -7.42 11.87" fill="none" stroke="#484848" stroke-width="1.2" opacity="0.55" />
<ellipse cx="677.19" cy="871.19" rx="7" ry="6" fill="#a9a9a9" opacity="0.5"/>
<path d="M682.85 866.95q0.71 10.61 -9.9 9.9" fill="none" stroke="#484848" stroke-width="1.2" opacity="0.55" />
<ellipse cx="654.78" cy="882.86" rx="7" ry="6" fill="#a9a9a9" opacity="0.5"/>
<path d="M661.24 880q-1.7 10.49 -11.87 7.42" fill="none" stroke="#484848" stroke-width="1.2" opacity="0.55" />
<ellipse cx="631.33" cy="888.8" rx="7" ry="6" fill="#a9a9a9" opacity="0.5"/>
<path d="M638.27 887.46q-4.01 9.84 -13.24 4.56" fill="none" stroke="#484848" stroke-width="1.2" opacity="0.55" />
<ellipse cx="608.26" cy="889.66" rx="7" ry="6" fill="#a9a9a9" opacity="0.5"/>
<path d="M615.33 889.92q-6.13 8.69 -13.92 1.46" fill="none" stroke="#484848" stroke-width="1.2" opacity="0.55" />
<ellipse cx="586.62" cy="884.71" rx="7" ry="6" fill="#a9a9a9" opacity="0.5"/>
<path d="M593.44 886.56q-7.92 7.09 -13.9 -1.71" fill="none" stroke="#484848" stroke-width="1.2" opacity="0.55" />
<path d="M569 800C570 796 575.5 793.67 580 792C584.5 790.33 591.67 789.33 596 790C600.33 790.67 603.33 793.33 606 796C608.67 798.67 612 801.67 612 806C612 810.33 608 816.67 606 822C604 827.33 602 833.83 600 838C598 842.17 596.33 845.83 594 847C591.67 848.17 588 847.83 586 845C584 842.17 584 834.83 582 830C580 825.17 576.17 821 574 816C571.83 811 568 804 569 800Z" fill="#a3a3a3" stroke="#2e2e2e" stroke-width="1.0" />
<path d="M583 800q8 10 16 4M590 812l6 26" fill="none" stroke="#2e2e2e" stroke-width="0.9" opacity="0.6" />
<path d="M608 670C612.17 669 619.67 680.33 625 684C630.33 687.67 635.5 688.33 640 692C644.5 695.67 650.67 701 652 706C653.33 711 651.67 720 648 722C644.33 724 636 720.33 630 718C624 715.67 617 712.67 612 708C607 703.33 600.67 696.33 600 690C599.33 683.67 603.83 671 608 670Z" fill="#a4a4a4" />
<path d="M631 683q-6 14-14 26M641 692q-8 12-13 24" fill="none" stroke="#2e2e2e" stroke-width="0.9" opacity="0.7" />
<path d="M650 718C650.67 713.17 650.33 709 652 706C653.67 703 656.67 701.17 660 700C663.33 698.83 667.83 698.17 672 699C676.17 699.83 681.67 701.83 685 705C688.33 708.17 690.67 712.17 692 718C693.33 723.83 693.67 732 693 740C692.33 748 689.83 762 688 766C686.17 770 684 763.67 682 764C680 764.33 678.33 767.83 676 768C673.67 768.17 670.67 766.33 668 765C665.33 763.67 662.17 762.83 660 760C657.83 757.17 657 752.17 655 748C653 743.83 648.83 740 648 735C647.17 730 649.33 722.83 650 718Z" fill="#a5a5a5" stroke="#2e2e2e" stroke-width="0.8" />
<path d="M656 748l2 12M664 752l3 13M672 754l3 13M680 752l3 12" fill="none" stroke="#2e2e2e" stroke-width="0.9" opacity="0.8" />
<path d="M650 719q4-16 22-17q16 2 20 18" fill="none" stroke="#2e2e2e" stroke-width="1" opacity="0.8" />
<path d="M654 722q4-13 18-14q12 1 16 14" fill="none" stroke="#2e2e2e" stroke-width="0.8" opacity="0.6" />
<path d="M412.5 790C417.5 790 428.75 802.5 440 807.5C451.25 812.5 467.92 817.08 480 820C492.08 822.92 506.5 822.5 512.5 825C518.5 827.5 518.08 832.5 516 835C513.92 837.5 508.5 839.58 500 840C491.5 840.42 476.67 840 465 837.5C453.33 835 439.17 830 430 825C420.83 820 412.92 813.33 410 807.5C407.08 801.67 407.5 790 412.5 790Z" fill="#a2a2a2" stroke="#2e2e2e" stroke-width="1.0" />
<path d="M414 800C418.33 802.67 429 811.17 440 816C451 820.83 468 826.5 480 829C492 831.5 506.67 830.67 512 831" fill="none" stroke="#b4b4b4" stroke-width="2.5" opacity="0.5" />
<path d="M422.5 830C425.42 835.83 432.08 852.5 440 865C447.92 877.5 460 895 470 905C480 915 495 921.67 500 925" fill="none" stroke="#4d4d4d" stroke-width="4" opacity="0.45" filter="url(#b2)"/>
<path d="M440 835C442.92 840.83 450 858.75 457.5 870C465 881.25 475.42 895 485 902.5C494.58 910 510 912.92 515 915" fill="none" stroke="#4d4d4d" stroke-width="4" opacity="0.45" filter="url(#b2)"/>
<path d="M460 840C462.5 845 468.33 860.83 475 870C481.67 879.17 491.67 889.58 500 895C508.33 900.42 520.83 901.25 525 902.5" fill="none" stroke="#4d4d4d" stroke-width="4" opacity="0.45" filter="url(#b2)"/>
<path d="M480 845C482.5 849.17 489.17 863.33 495 870C500.83 876.67 511.67 882.5 515 885" fill="none" stroke="#4d4d4d" stroke-width="4" opacity="0.45" filter="url(#b2)"/>
<path d="M515 845C517.5 850.83 523.75 868.33 530 880C536.25 891.67 544.17 907.08 552.5 915C560.83 922.92 575.42 925.42 580 927.5" fill="none" stroke="#4d4d4d" stroke-width="4" opacity="0.45" filter="url(#b2)"/>
<path d="M530 840C532.92 845 540.83 860 547.5 870C554.17 880 562.92 893.33 570 900C577.08 906.67 586.67 908.33 590 910" fill="none" stroke="#4d4d4d" stroke-width="4" opacity="0.45" filter="url(#b2)"/>
<path d="M547.5 837.5C550.42 841.25 558.75 851.25 565 860C571.25 868.75 581.67 885 585 890" fill="none" stroke="#4d4d4d" stroke-width="4" opacity="0.45" filter="url(#b2)"/>
<path d="M425 890C428.33 894.17 435.83 908.75 445 915C454.17 921.25 474.17 925.42 480 927.5" fill="none" stroke="#4d4d4d" stroke-width="4" opacity="0.45" filter="url(#b2)"/>
<path d="M560 905C561.67 908.33 565.83 920.83 570 925C574.17 929.17 582.5 929.17 585 930" fill="none" stroke="#4d4d4d" stroke-width="4" opacity="0.45" filter="url(#b2)"/>
<path d="M424.7 828.8C427.62 834.63 434.28 851.3 442.2 863.8C450.12 876.3 462.2 893.8 472.2 903.8C482.2 913.8 497.2 920.47 502.2 923.8" fill="none" stroke="#b3b3b3" stroke-width="2" opacity="0.45" />
<path d="M422.5 830C425.42 835.83 432.08 852.5 440 865C447.92 877.5 460 895 470 905C480 915 495 921.67 500 925" fill="none" stroke="#2e2e2e" stroke-width="1.2" opacity="0.8" />
<path d="M442.2 833.8C445.12 839.63 452.2 857.55 459.7 868.8C467.2 880.05 477.62 893.8 487.2 901.3C496.78 908.8 512.2 911.72 517.2 913.8" fill="none" stroke="#b3b3b3" stroke-width="2" opacity="0.45" />
<path d="M440 835C442.92 840.83 450 858.75 457.5 870C465 881.25 475.42 895 485 902.5C494.58 910 510 912.92 515 915" fill="none" stroke="#2e2e2e" stroke-width="1.2" opacity="0.8" />
<path d="M462.2 838.8C464.7 843.8 470.53 859.63 477.2 868.8C483.87 877.97 493.87 888.38 502.2 893.8C510.53 899.22 523.03 900.05 527.2 901.3" fill="none" stroke="#b3b3b3" stroke-width="2" opacity="0.45" />
<path d="M460 840C462.5 845 468.33 860.83 475 870C481.67 879.17 491.67 889.58 500 895C508.33 900.42 520.83 901.25 525 902.5" fill="none" stroke="#2e2e2e" stroke-width="1.2" opacity="0.8" />
<path d="M482.2 843.8C484.7 847.97 491.37 862.13 497.2 868.8C503.03 875.47 513.87 881.3 517.2 883.8" fill="none" stroke="#b3b3b3" stroke-width="2" opacity="0.45" />
<path d="M480 845C482.5 849.17 489.17 863.33 495 870C500.83 876.67 511.67 882.5 515 885" fill="none" stroke="#2e2e2e" stroke-width="1.2" opacity="0.8" />
<path d="M517.2 843.8C519.7 849.63 525.95 867.13 532.2 878.8C538.45 890.47 546.37 905.88 554.7 913.8C563.03 921.72 577.62 924.22 582.2 926.3" fill="none" stroke="#b3b3b3" stroke-width="2" opacity="0.45" />
<path d="M515 845C517.5 850.83 523.75 868.33 530 880C536.25 891.67 544.17 907.08 552.5 915C560.83 922.92 575.42 925.42 580 927.5" fill="none" stroke="#2e2e2e" stroke-width="1.2" opacity="0.8" />
<path d="M532.2 838.8C535.12 843.8 543.03 858.8 549.7 868.8C556.37 878.8 565.12 892.13 572.2 898.8C579.28 905.47 588.87 907.13 592.2 908.8" fill="none" stroke="#b3b3b3" stroke-width="2" opacity="0.45" />
<path d="M530 840C532.92 845 540.83 860 547.5 870C554.17 880 562.92 893.33 570 900C577.08 906.67 586.67 908.33 590 910" fill="none" stroke="#2e2e2e" stroke-width="1.2" opacity="0.8" />
<path d="M549.7 836.3C552.62 840.05 560.95 850.05 567.2 858.8C573.45 867.55 583.87 883.8 587.2 888.8" fill="none" stroke="#b3b3b3" stroke-width="2" opacity="0.45" />
<path d="M547.5 837.5C550.42 841.25 558.75 851.25 565 860C571.25 868.75 581.67 885 585 890" fill="none" stroke="#2e2e2e" stroke-width="1.2" opacity="0.8" />
<path d="M427.2 888.8C430.53 892.97 438.03 907.55 447.2 913.8C456.37 920.05 476.37 924.22 482.2 926.3" fill="none" stroke="#b3b3b3" stroke-width="2" opacity="0.45" />
<path d="M425 890C428.33 894.17 435.83 908.75 445 915C454.17 921.25 474.17 925.42 480 927.5" fill="none" stroke="#2e2e2e" stroke-width="1.2" opacity="0.8" />
<path d="M562.2 903.8C563.87 907.13 568.03 919.63 572.2 923.8C576.37 927.97 584.7 927.97 587.2 928.8" fill="none" stroke="#b3b3b3" stroke-width="2" opacity="0.45" />
<path d="M560 905C561.67 908.33 565.83 920.83 570 925C574.17 929.17 582.5 929.17 585 930" fill="none" stroke="#2e2e2e" stroke-width="1.2" opacity="0.8" />
<ellipse cx="530" cy="823" rx="16" ry="16" fill="#9d9d9d" stroke="#2e2e2e" stroke-width="0.9"/>
<path d="M534 819L545 823" fill="none" stroke="#2e2e2e" stroke-width="0.8" opacity="0.7" />
<path d="M534 819L542.14 831.82" fill="none" stroke="#2e2e2e" stroke-width="0.8" opacity="0.7" />
<path d="M534 819L534.64 837.27" fill="none" stroke="#2e2e2e" stroke-width="0.8" opacity="0.7" />
<path d="M534 819L525.36 837.27" fill="none" stroke="#2e2e2e" stroke-width="0.8" opacity="0.7" />
<path d="M534 819L517.86 831.82" fill="none" stroke="#2e2e2e" stroke-width="0.8" opacity="0.7" />
<path d="M534 819L515 823" fill="none" stroke="#2e2e2e" stroke-width="0.8" opacity="0.7" />
<path d="M534 819L517.86 814.18" fill="none" stroke="#2e2e2e" stroke-width="0.8" opacity="0.7" />
<path d="M534 819L525.36 808.73" fill="none" stroke="#2e2e2e" stroke-width="0.8" opacity="0.7" />
<path d="M534 819L534.64 808.73" fill="none" stroke="#2e2e2e" stroke-width="0.8" opacity="0.7" />
<path d="M534 819L542.14 814.18" fill="none" stroke="#2e2e2e" stroke-width="0.8" opacity="0.7" />
<path d="M409.600 720.600L446.800 781.400L458 795L472 790L428.700 712.700Z" fill="#9e9e9e" stroke="#2e2e2e" stroke-width="0.9" />
<path d="M414 722L452 786" fill="none" stroke="#b3b3b3" stroke-width="3" opacity="0.6" />
<path d="M426 715L468 789" fill="none" stroke="#626262" stroke-width="2.5" opacity="0.5" />
<ellipse cx="413.5" cy="705.4" rx="15.2" ry="15.2" fill="url(#gball)" stroke="#2e2e2e" stroke-width="0.9"/>
<ellipse cx="427.3" cy="730.4" rx="3.8" ry="3.8" fill="#9a9a9a" stroke="#2e2e2e" stroke-width="1.1"/>
<ellipse cx="440.9" cy="754.9" rx="3.8" ry="3.8" fill="#9a9a9a" stroke="#2e2e2e" stroke-width="1.1"/>
<ellipse cx="447.7" cy="766.5" rx="3.8" ry="3.8" fill="#9a9a9a" stroke="#2e2e2e" stroke-width="1.1"/>
<ellipse cx="454.4" cy="778.3" rx="3.8" ry="3.8" fill="#9a9a9a" stroke="#2e2e2e" stroke-width="1.1"/>
<path d="M375 862l6 4M373 872l7 4M374 882l7 3M378 890l6 1" fill="none" stroke="#2e2e2e" stroke-width="0.9" opacity="0.7" />
</g>
</svg>
<div style="position:absolute;left:1530px;top:143px;width:390px;height:919px;background:#fff"></div>
<div style="position:absolute;left:1916px;top:143px;width:3px;height:919px;background:#f7f7f7"></div>
<div style="position:absolute;left:1534px;top:143px;width:3px;height:919px;background:linear-gradient(90deg,#fff,#fdf2e8,#fff)"></div>
<svg class="a" style="left:1530px;top:594px" width="5" height="16"><path d="M0 0.500l3.800 3.500-3.800 3.500zM0 8.500l3.800 3.500-3.800 3.500z" fill="#2a3540"/></svg>
<svg class="a" style="left:1541.4px;top:152px" width="12" height="8"><path d="M0 0h12l-6 7.5z" fill="#111"/></svg>
<span class="t" style="left:1563.4px;top:150.32px;letter-spacing:-0.36px;color:#111;">View Pages</span>
<div style="position:absolute;left:1626px;top:154px;width:249px;height:5px;background-image:radial-gradient(circle,#3c3c3c 0.55px,transparent 0.8px),radial-gradient(circle,#3c3c3c 0.55px,transparent 0.8px);background-size:4px 4px;background-position:-1.5px -1.5px,0.5px 0.5px;"></div>
<svg class="a" style="left:1883px;top:152px" width="10" height="8" fill="none" stroke="#111" stroke-width="1.2"><path d="M0 4h4M4 1.2v5.6M4 2h4.5v3.5h-4.5M4 5.2h4.5" /></svg>
<svg class="a" style="left:1904.4px;top:152.6px" width="7" height="7" stroke="#111" stroke-width="1.6"><path d="M0.500 0.500l5.400 5.400M5.900 0.500l-5.400 5.400"/></svg>
<div style="position:absolute;left:1538px;top:171px;width:72px;height:20px;border:1px solid #9a9a9a;border-bottom:none;box-sizing:border-box;background:#fff"></div>
<span class="t" style="left:1560px;top:172.82px;letter-spacing:-0.01px;color:#111;">View</span>
<span class="t" style="left:1621.3px;top:173.62px;letter-spacing:0.16px;color:#111;">Multi-Section</span>
<span class="t" style="left:1724px;top:173.62px;letter-spacing:-0.58px;color:#111;">Slices</span>
<span class="t" style="left:1799.5px;top:173.62px;letter-spacing:-0.14px;color:#111;">Grid</span>
<div style="position:absolute;left:1541px;top:201px;width:372px;height:109px;border:1px solid #eeeeee;box-sizing:border-box"></div><div style="position:absolute;left:1546px;top:199px;width:71.7px;height:5px;background:#fff"></div><span class="t" style="left:1549px;top:194.02px;letter-spacing:0.11px;color:#111;">Visualization</span>
<div style="position:absolute;left:1550px;top:217px;width:33px;height:22px;border:1px solid #9a9a9a;box-sizing:border-box;background:#fff"></div>
<svg class="a" style="left:1574.3px;top:226px" width="6" height="4"><path d="M0 0h6l-3 3.5z" fill="#666"/></svg>
<span class="t" style="left:1589.2px;top:221.62px;letter-spacing:-0.01px;color:#111;">Shade&amp;Wire</span>
<div style="position:absolute;left:1550px;top:245px;width:33px;height:22px;border:1px solid #9a9a9a;box-sizing:border-box;background:#fff"></div>
<svg class="a" style="left:1574.3px;top:254px" width="6" height="4"><path d="M0 0h6l-3 3.5z" fill="#666"/></svg>
<span class="t" style="left:1589.2px;top:249.62px;letter-spacing:-0.23px;color:#111;">Bad Edges Visible</span>
<div style="position:absolute;left:1550px;top:273px;width:33px;height:22px;border:1px solid #9a9a9a;box-sizing:border-box;background:#fff"></div>
<svg class="a" style="left:1574.3px;top:282px" width="6" height="4"><path d="M0 0h6l-3 3.5z" fill="#666"/></svg>
<span class="t" style="left:1589.2px;top:277.62px;color:#111;">Flipped Triangles Visible</span>
<svg class="a" style="left:1553px;top:219px" width="18" height="18" viewBox="0 0 18 18"><path d="M2 5l7-3 6 2.5v8.5l-6 3.5-7-3z" fill="#4a4a4a"/><path d="M9 7.5l6-3v8.5l-6 3.5z" fill="#c9c9c9"/><path d="M2 5l7 2.5v9l-7-3z" fill="#6b6b6b"/><path d="M2 5l7-3 6 2.5-6 3z" fill="#3d3d3d"/></svg>
<svg class="a" style="left:1553px;top:247px" width="18" height="18" viewBox="0 0 18 18"><path d="M8 1.5l7 13-13 1.5z" fill="#8fb94a" stroke="#d7e59a" stroke-width="1"/><path d="M8 1.5l-3 10 10 3z" fill="#7aa83b"/></svg>
<svg class="a" style="left:1553px;top:275px" width="18" height="18" viewBox="0 0 18 18"><path d="M8 1.5l7 13-13 1.5z" fill="#d9604a"/><path d="M8 1.5l1.5 12-7.5 2.5z" fill="#7fb04a"/><path d="M9.500 13.5l5.500 1-13 1.500z" fill="#8fbf5a"/></svg>
<div style="position:absolute;left:1808.5px;top:217px;width:97px;height:86px;border:1px solid #8d8d8d;box-sizing:border-box;background:#fff"></div>
<svg class="a" style="left:1808px;top:217px" width="98" height="86" viewBox="0 0 98 86" fill="none" stroke="#333" stroke-width="1.2" stroke-linejoin="round"><path d="M7 13l41-8 33 11-44 12z" fill="#2f8fe8" stroke="none"/><path d="M7 13l41-8 33 11-44 12zM7 13v43l30 24v-52M37 80l44-15v-49M48 5v45M7 56l41-6 33 15"/></svg>
<svg class="a" style="left:1896.7px;top:258.5px" width="6" height="4"><path d="M0 0h6l-3 3.5z" fill="#777"/></svg>
<div style="position:absolute;left:1537px;top:318px;width:383px;height:1px;background:#ececec"></div>
<svg class="a" style="left:1541.4px;top:326px" width="12" height="8"><path d="M0 0h12l-6 7.5z" fill="#111"/></svg>
<span class="t" style="left:1563.4px;top:324.32px;letter-spacing:-0.53px;color:#111;">Part Pages</span>
<div style="position:absolute;left:1620px;top:328px;width:254px;height:5px;background-image:radial-gradient(circle,#3c3c3c 0.55px,transparent 0.8px),radial-gradient(circle,#3c3c3c 0.55px,transparent 0.8px);background-size:4px 4px;background-position:-1.5px -1.5px,0.5px 0.5px;"></div>
<svg class="a" style="left:1883px;top:326px" width="10" height="8" fill="none" stroke="#111" stroke-width="1.2"><path d="M0 4h4M4 1.2v5.6M4 2h4.5v3.5h-4.5M4 5.2h4.5" /></svg>
<svg class="a" style="left:1904.4px;top:326.6px" width="7" height="7" stroke="#111" stroke-width="1.6"><path d="M0.500 0.500l5.400 5.400M5.900 0.500l-5.400 5.400"/></svg>
<span class="t" style="left:1548.4px;top:348.02px;letter-spacing:-0.39px;color:#111;">Part List</span>
<div style="position:absolute;left:1600px;top:345px;width:69px;height:19px;border:1px solid #9a9a9a;border-bottom:none;box-sizing:border-box;background:#fff"></div>
<span class="t" style="left:1612.4px;top:347.02px;letter-spacing:-0.04px;color:#111;">Part Info</span>
<span class="t" style="left:1680.5px;top:348.02px;letter-spacing:-0.01px;color:#111;">Part Fixing Info</span>
<div style="position:absolute;left:1782.6px;top:346px;width:105px;height:17px;overflow:hidden"><span class="t" style="left:0px;top:2.02px;letter-spacing:-0.13px;color:#111;">Build Time Estimation</span></div>
<svg class="a" style="left:1892px;top:346px" width="7" height="11"><path d="M7 0v11l-6.500-5.500z" fill="#9a9a9a"/></svg>
<div style="position:absolute;left:1903.5px;top:344px;width:15px;height:19.5px;border:1px solid #8a8a8a;box-sizing:border-box;background:#fff"></div>
<svg class="a" style="left:1907px;top:347px" width="8" height="12"><path d="M0.500 0v12l7-6z" fill="#111"/></svg>
<span class="t" style="left:1545.3px;top:377.82px;letter-spacing:-0.38px;color:#111;">Part name</span>
<div style="position:absolute;left:1602.4px;top:374.7px;width:145.5px;height:19.5px;border:1px solid #7a7a7a;box-sizing:border-box;background:#fff;overflow:hidden"><span class="t" style="left:3.5px;top:2.72px;letter-spacing:-0.2px;color:#111;">0.5-thick- Little Krishna Pendant</span><div style="position:absolute;left:128px;top:0px;width:18px;height:18px;background:#fff"></div></div>
<svg class="a" style="left:1736.7px;top:382.5px" width="6" height="4"><path d="M0 0h6l-3 3.5z" fill="#666"/></svg>
<div style="position:absolute;left:1754px;top:374px;width:75px;height:22px;border:1px solid #6e6e6e;box-sizing:border-box;background:#fff"></div><span class="t" style="left:1771.6px;top:377.82px;letter-spacing:-0.69px;color:#111;">Rename</span>
<div style="position:absolute;left:1836px;top:374px;width:74px;height:22px;border:1px solid #efefef;box-sizing:border-box;background:#fdfdfd"></div><span class="t" style="left:1861.6px;top:377.82px;letter-spacing:-0.41px;color:#a3a3a3;">Next</span>
<div style="position:absolute;left:1545px;top:409px;width:364px;height:115px;border:1px solid #eeeeee;box-sizing:border-box"></div><div style="position:absolute;left:1551.4px;top:407px;width:65.2px;height:5px;background:#fff"></div><span class="t" style="left:1554.4px;top:402.02px;letter-spacing:-0.1px;color:#111;">Dimensions</span>
<span class="t" style="left:1567.7px;top:424.82px;letter-spacing:0.28px;color:#111;">Min</span>
<span class="t" style="left:1672.7px;top:424.82px;letter-spacing:-0.46px;color:#111;">Max</span>
<span class="t" style="left:1777.4px;top:424.82px;letter-spacing:-0.19px;color:#111;">Delta</span>
<span class="t" style="left:1554.9px;top:448.42px;color:#111;">X</span>
<div style="position:absolute;left:1567px;top:445px;width:99px;height:19px;border:1px solid #8c8c8c;box-sizing:border-box;background:#fff"></div><span class="t" style="left:1570.5px;top:448.42px;letter-spacing:-0.49px;color:#111;">-12.734</span>
<div style="position:absolute;left:1672px;top:445px;width:99px;height:19px;border:1px solid #8c8c8c;box-sizing:border-box;background:#fff"></div><span class="t" style="left:1675.6px;top:448.42px;letter-spacing:-0.43px;color:#111;">13.078</span>
<div style="position:absolute;left:1777px;top:445px;width:99px;height:19px;border:1px solid #8c8c8c;box-sizing:border-box;background:#fff"></div><span class="t" style="left:1780.6px;top:448.42px;letter-spacing:-0.43px;color:#111;">25.812</span>
<span class="t" style="left:1882.7px;top:448.76px;font-size:10.5px;letter-spacing:-0.6px;color:#111;">mm</span>
<span class="t" style="left:1554.9px;top:474.42px;color:#111;">Y</span>
<div style="position:absolute;left:1567px;top:471px;width:99px;height:19px;border:1px solid #8c8c8c;box-sizing:border-box;background:#fff"></div><span class="t" style="left:1570.5px;top:474.42px;letter-spacing:-0.49px;color:#111;">-21.627</span>
<div style="position:absolute;left:1672px;top:471px;width:99px;height:19px;border:1px solid #8c8c8c;box-sizing:border-box;background:#fff"></div><span class="t" style="left:1675.6px;top:474.42px;letter-spacing:-0.43px;color:#111;">25.004</span>
<div style="position:absolute;left:1777px;top:471px;width:99px;height:19px;border:1px solid #8c8c8c;box-sizing:border-box;background:#fff"></div><span class="t" style="left:1780.6px;top:474.42px;letter-spacing:-0.43px;color:#111;">46.631</span>
<span class="t" style="left:1882.7px;top:474.76px;font-size:10.5px;letter-spacing:-0.6px;color:#111;">mm</span>
<span class="t" style="left:1554.9px;top:500.42px;color:#111;">Z</span>
<div style="position:absolute;left:1567px;top:497px;width:99px;height:19px;border:1px solid #8c8c8c;box-sizing:border-box;background:#fff"></div><span class="t" style="left:1570.5px;top:500.42px;letter-spacing:-0.42px;color:#111;">-4.468</span>
<div style="position:absolute;left:1672px;top:497px;width:99px;height:19px;border:1px solid #8c8c8c;box-sizing:border-box;background:#fff"></div><span class="t" style="left:1675.6px;top:500.42px;letter-spacing:-0.31px;color:#111;">7.165</span>
<div style="position:absolute;left:1777px;top:497px;width:99px;height:19px;border:1px solid #8c8c8c;box-sizing:border-box;background:#fff"></div><span class="t" style="left:1780.6px;top:500.42px;letter-spacing:-0.26px;color:#111;">11.633</span>
<span class="t" style="left:1882.7px;top:500.76px;font-size:10.5px;letter-spacing:-0.6px;color:#111;">mm</span>
<div style="position:absolute;left:1545px;top:546px;width:364px;height:70px;border:1px solid #eeeeee;box-sizing:border-box"></div><div style="position:absolute;left:1551.6px;top:544px;width:57px;height:5px;background:#fff"></div><span class="t" style="left:1554.6px;top:538.52px;letter-spacing:0.15px;color:#111;">Mesh info</span>
<span class="t" style="left:1554.9px;top:564.72px;letter-spacing:-0.07px;color:#111;"># Triangles</span>
<div style="position:absolute;left:1639px;top:562px;width:78px;height:19px;border:1px solid #8c8c8c;box-sizing:border-box;background:#fff"></div><span class="t" style="left:1642.4px;top:565.72px;letter-spacing:-0.59px;color:#111;">719214</span>
<span class="t" style="left:1739px;top:564.72px;letter-spacing:0.01px;color:#111;"># Points</span>
<div style="position:absolute;left:1822px;top:562px;width:78px;height:19px;border:1px solid #8c8c8c;box-sizing:border-box;background:#fff"></div><span class="t" style="left:1825.2px;top:565.72px;letter-spacing:-0.61px;color:#111;">359601</span>
<span class="t" style="left:1554.9px;top:590.82px;letter-spacing:0.08px;color:#111;"># Marked</span>
<div style="position:absolute;left:1639px;top:588px;width:78px;height:19px;border:1px solid #8c8c8c;box-sizing:border-box;background:#fff"></div><span class="t" style="left:1642.4px;top:591.82px;color:#111;">0</span>
<span class="t" style="left:1739px;top:590.82px;letter-spacing:0.07px;color:#111;"># Invisible</span>
<div style="position:absolute;left:1822px;top:588px;width:78px;height:19px;border:1px solid #8c8c8c;box-sizing:border-box;background:#fff"></div><span class="t" style="left:1825.2px;top:591.82px;color:#111;">0</span>
<div style="position:absolute;left:1545px;top:623px;width:364px;height:74px;border:1px solid #eeeeee;box-sizing:border-box"></div><div style="position:absolute;left:1551.6px;top:621px;width:57px;height:5px;background:#fff"></div><span class="t" style="left:1554.6px;top:616.52px;letter-spacing:-0.15px;color:#111;">Properties</span>
<span class="t" style="left:1555.5px;top:644.52px;letter-spacing:-0.33px;color:#111;">Volume</span>
<div style="position:absolute;left:1660px;top:642px;width:106px;height:18px;border:1px solid #8c8c8c;box-sizing:border-box;background:#fff"></div><span class="t" style="left:1663.4px;top:645.02px;letter-spacing:-0.54px;color:#111;">664.393</span>
<span class="t" style="left:1772.6px;top:644.86px;font-size:10.5px;letter-spacing:-0.9px;color:#111;">mm</span>
<span class="t" style="left:1790.4px;top:641.07px;font-size:7px;color:#111;font-weight:bold;">3</span>
<div style="position:absolute;left:1801px;top:640px;width:99px;height:22px;border:1px solid #efefef;box-sizing:border-box;background:#fdfdfd"></div><span class="t" style="left:1831.6px;top:645.02px;letter-spacing:-0.07px;color:#a3a3a3;">Update</span>
<span class="t" style="left:1555.5px;top:671.72px;letter-spacing:-0.48px;color:#111;">Surface</span>
<div style="position:absolute;left:1660px;top:670px;width:106px;height:18px;border:1px solid #8c8c8c;box-sizing:border-box;background:#fff"></div><span class="t" style="left:1663.4px;top:672.52px;letter-spacing:-0.47px;color:#111;">2675.520</span>
<span class="t" style="left:1772.6px;top:672.06px;font-size:10.5px;letter-spacing:-0.9px;color:#111;">mm</span>
<span class="t" style="left:1790.4px;top:668.27px;font-size:7px;color:#111;font-weight:bold;">2</span>
<div style="position:absolute;left:1801.3px;top:673.8px;width:11px;height:11px;border:1px solid #333;box-sizing:border-box;background:#fff"></div><svg class="a" style="left:1801.3px;top:673.8px" width="11" height="11" viewBox="0 0 11 11" fill="none" stroke="#222" stroke-width="1.1"><path d="M2.2 5.6l2.2 2.3 4.4-5"/></svg>
<span class="t" style="left:1819.5px;top:671.72px;letter-spacing:0.04px;color:#111;">Automatic</span>
<span class="t" style="left:1545.3px;top:707.42px;letter-spacing:-0.32px;color:#111;">Status</span>
<div style="position:absolute;left:1588px;top:706px;width:114px;height:18px;border:1px solid #8c8c8c;box-sizing:border-box;background:#fff"></div><span class="t" style="left:1590.6px;top:708.52px;letter-spacing:-0.16px;color:#111;">Changed</span>
<span class="t" style="left:1751.2px;top:707.42px;letter-spacing:-0.25px;color:#111;">Z Compensated</span>
<div style="position:absolute;left:1837px;top:706px;width:73px;height:18px;border:1px solid #8c8c8c;box-sizing:border-box;background:#fff"></div><span class="t" style="left:1840.6px;top:708.52px;letter-spacing:-0.7px;color:#111;">No</span>
<div style="position:absolute;left:1537px;top:735px;width:383px;height:1px;background:#e6e6e6"></div>
<svg class="a" style="left:1543.7px;top:740.6px" width="8" height="12"><path d="M0 0v12l7.5-6z" fill="#111"/></svg>
<span class="t" style="left:1563.4px;top:740.92px;letter-spacing:0.02px;color:#111;">Annotation Pages</span>
<div style="position:absolute;left:1660px;top:745px;width:236px;height:5px;background-image:radial-gradient(circle,#3c3c3c 0.55px,transparent 0.8px),radial-gradient(circle,#3c3c3c 0.55px,transparent 0.8px);background-size:4px 4px;background-position:-1.5px -1.5px,0.5px 0.5px;"></div>
<svg class="a" style="left:1904.4px;top:743.2px" width="7" height="7" stroke="#111" stroke-width="1.6"><path d="M0.500 0.500l5.400 5.400M5.900 0.500l-5.400 5.400"/></svg>
<div style="position:absolute;left:1539px;top:762px;width:71px;height:20px;border:1px solid #9a9a9a;border-bottom:none;box-sizing:border-box;background:#fff"></div>
<span class="t" style="left:1563.2px;top:764.22px;letter-spacing:-0.53px;color:#111;">Text</span>
<span class="t" style="left:1625px;top:765.22px;letter-spacing:0.27px;color:#111;">Drawing</span>
<span class="t" style="left:1696px;top:765.22px;letter-spacing:-0.01px;color:#111;">Attachments</span>
<span class="t" style="left:1787px;top:765.22px;letter-spacing:-0.29px;color:#111;">Textures</span>
<svg class="a" style="left:1541.4px;top:789.6px" width="12" height="8"><path d="M0 0h12l-6 7.5z" fill="#111"/></svg>
<span class="t" style="left:1563.4px;top:787.92px;letter-spacing:-0.23px;color:#111;">Measurement Pages</span>
<div style="position:absolute;left:1671px;top:792px;width:204px;height:5px;background-image:radial-gradient(circle,#3c3c3c 0.55px,transparent 0.8px),radial-gradient(circle,#3c3c3c 0.55px,transparent 0.8px);background-size:4px 4px;background-position:-1.5px -1.5px,0.5px 0.5px;"></div>
<svg class="a" style="left:1883px;top:789.6px" width="10" height="8" fill="none" stroke="#111" stroke-width="1.2"><path d="M0 4h4M4 1.2v5.6M4 2h4.5v3.5h-4.5M4 5.2h4.5" /></svg>
<svg class="a" style="left:1904.4px;top:790.2px" width="7" height="7" stroke="#111" stroke-width="1.6"><path d="M0.500 0.500l5.400 5.400M5.900 0.500l-5.400 5.400"/></svg>
<div style="position:absolute;left:1539px;top:809px;width:66px;height:20px;border:1px solid #9a9a9a;border-bottom:none;box-sizing:border-box;background:#fff"></div>
<span class="t" style="left:1548.5px;top:810.82px;letter-spacing:-0.23px;color:#111;">Distance</span>
<span class="t" style="left:1616.5px;top:811.82px;letter-spacing:-0.46px;color:#111;">Circle</span>
<span class="t" style="left:1667.9px;top:811.82px;letter-spacing:0.15px;color:#111;">Angle</span>
<span class="t" style="left:1722.1px;top:811.82px;letter-spacing:0.45px;color:#111;">Info</span>
<span class="t" style="left:1767.2px;top:811.82px;letter-spacing:-0.19px;color:#111;">Final Part</span>
<span class="t" style="left:1839px;top:811.82px;letter-spacing:0.06px;color:#111;">Report</span>
<div style="position:absolute;left:1540px;top:832px;width:42px;height:21px;border:1px solid #9a9a9a;box-sizing:border-box;background:#fff"></div>
<svg class="a" style="left:1573.2px;top:840.5px" width="6" height="4"><path d="M0 0h6l-3 3.5z" fill="#666"/></svg>
<div style="position:absolute;left:1603px;top:832px;width:42px;height:21px;border:1px solid #9a9a9a;box-sizing:border-box;background:#fff"></div>
<svg class="a" style="left:1636px;top:840.5px" width="6" height="4"><path d="M0 0h6l-3 3.5z" fill="#666"/></svg>
<div style="position:absolute;left:1691px;top:832px;width:42px;height:21px;border:1px solid #9a9a9a;box-sizing:border-box;background:#fff"></div>
<svg class="a" style="left:1724.2px;top:840.5px" width="6" height="4"><path d="M0 0h6l-3 3.5z" fill="#666"/></svg>
<div style="position:absolute;left:1551px;top:842px;width:2.5px;height:2.5px;background:#a8c070"></div>
<div style="position:absolute;left:1613.5px;top:842px;width:2.5px;height:2.5px;background:#a8c070"></div>
<div style="position:absolute;left:1588.4px;top:840px;width:8.6px;height:8px;background:#2fb344;border:1px solid #145c20;box-sizing:border-box"></div>
<svg class="a" style="left:1590.5px;top:841.5px" width="5" height="5"><path d="M0.500 0v5l3.500-2.500z" fill="#0b3d14"/></svg>
<svg class="a" style="left:1694px;top:834px" width="20" height="19" viewBox="0 0 20 19" fill="none"><path d="M10 11V2" stroke="#2b7de0" stroke-width="1.4"/><path d="M7.500 4.500L10 1l2.500 3.500z" fill="#2b7de0"/><path d="M10 11l-6 3" stroke="#3aa544" stroke-width="1.4"/><path d="M2 15l3.500-3 0.800 3z" fill="#3aa544"/><path d="M10 11l6 4" stroke="#d43a3a" stroke-width="1.4"/><path d="M18 16l-4-0.500 1.800-2.500z" fill="#d43a3a"/></svg>
<span class="t" style="left:1699px;top:841.59px;font-size:5.5px;color:#555;">xYZ</span>
<div style="position:absolute;left:1848.2px;top:833.5px;width:66.4px;height:19.4px;border:1px solid #bdbdbd;box-sizing:border-box;background:#ededed"></div>
<span class="t" style="left:1852.4px;top:836.52px;letter-spacing:-0.14px;color:#8c8c8c;">Center</span>
<svg class="a" style="left:1903.5px;top:841px" width="6" height="4"><path d="M0 0h6l-3 3.5z" fill="#666"/></svg>
<div style="position:absolute;left:1541px;top:866px;width:372px;height:83px;border:1px solid #eeeeee;box-sizing:border-box"></div><div style="position:absolute;left:1546.5px;top:864px;width:139.1px;height:5px;background:#fff"></div><span class="t" style="left:1549.5px;top:860.22px;letter-spacing:0.1px;color:#111;">Measurement Information</span>
<div style="position:absolute;left:1540.2px;top:960.6px;width:11px;height:11px;border:1px solid #333;box-sizing:border-box;background:#fff"></div>
<span class="t" style="left:1558px;top:959.02px;letter-spacing:0.01px;color:#111;">Invisible</span>
<div style="position:absolute;left:1540px;top:980px;width:120px;height:23px;border:1px solid #6e6e6e;box-sizing:border-box;background:#fff"></div><span class="t" style="left:1585.2px;top:984.52px;letter-spacing:-0.51px;color:#111;">Select</span>
<div style="position:absolute;left:1667px;top:980px;width:121px;height:23px;border:1px solid #6e6e6e;box-sizing:border-box;background:#fff"></div><span class="t" style="left:1675.5px;top:984.52px;letter-spacing:-0.21px;color:#111;">Clear Measurements</span>
<div style="position:absolute;left:1794px;top:980px;width:121px;height:23px;border:1px solid #6e6e6e;box-sizing:border-box;background:#fff"></div><span class="t" style="left:1819.5px;top:984.52px;letter-spacing:-0.11px;color:#111;">Snap Settings</span>
<div style="position:absolute;left:1537px;top:1009px;width:383px;height:1px;background:#ececec"></div>
<svg class="a" style="left:1543.7px;top:1013.4px" width="8" height="12"><path d="M0 0v12l7.5-6z" fill="#111"/></svg>
<span class="t" style="left:1563.4px;top:1013.72px;letter-spacing:-0.59px;color:#111;">Fix Pages</span>
<div style="position:absolute;left:1615px;top:1017px;width:280px;height:5px;background-image:radial-gradient(circle,#3c3c3c 0.55px,transparent 0.8px),radial-gradient(circle,#3c3c3c 0.55px,transparent 0.8px);background-size:4px 4px;background-position:-1.5px -1.5px,0.5px 0.5px;"></div>
<svg class="a" style="left:1904.4px;top:1016px" width="7" height="7" stroke="#111" stroke-width="1.6"><path d="M0.500 0.500l5.400 5.400M5.900 0.500l-5.400 5.400"/></svg>
<div style="position:absolute;left:1539px;top:1035px;width:59px;height:20px;border:1px solid #9a9a9a;border-bottom:none;box-sizing:border-box;background:#fff"></div>
<span class="t" style="left:1548.2px;top:1036.62px;letter-spacing:0.31px;color:#111;">Autofix</span>
<span class="t" style="left:1609.2px;top:1037.62px;letter-spacing:-0.73px;color:#111;">Basic</span>
<span class="t" style="left:1658.3px;top:1037.62px;letter-spacing:-0.12px;color:#111;">Hole</span>
<span class="t" style="left:1705.9px;top:1037.62px;letter-spacing:-0.05px;color:#111;">Triangle</span>
<span class="t" style="left:1771.6px;top:1037.62px;letter-spacing:-0.32px;color:#111;">Shell</span>
<span class="t" style="left:1820.5px;top:1037.62px;letter-spacing:-0.22px;color:#111;">Overlap</span>
<div style="position:absolute;left:1884.3px;top:1036px;width:3.5px;height:17px;overflow:hidden"><span class="t" style="left:0px;top:1.62px;color:#111;">F</span></div>
<svg class="a" style="left:1892px;top:1037px" width="7" height="11"><path d="M7 0v11l-6.500-5.500z" fill="#9a9a9a"/></svg>
<div style="position:absolute;left:1903.5px;top:1035px;width:15px;height:19.5px;border:1px solid #8a8a8a;box-sizing:border-box;background:#fff"></div>
<svg class="a" style="left:1907px;top:1038px" width="8" height="12"><path d="M0.500 0v12l7-6z" fill="#111"/></svg>
<div style="position:absolute;left:820px;top:295px;width:616px;height:578px;background:#f0f0f0;border:1px solid #4d6272;box-sizing:border-box;box-shadow:0 2px 12px 1px rgba(20,40,70,0.38)"></div>
<div style="position:absolute;left:821px;top:296px;width:614px;height:30px;background:#fff"></div>
<svg class="a" style="left:830px;top:303px" width="15" height="15" viewBox="0 0 15 15"><path d="M5 0.500h5v4.500h4.500v5h-4.500v4.500h-5v-4.500h-4.500v-5h4.500z" fill="#e02424" transform="rotate(8 7.500 7.500)"/></svg>
<span class="t" style="left:850px;top:304.02px;letter-spacing:0.04px;color:#111;">Fix Wizard (Part: 0) &gt; Diagnostics</span>
<svg class="a" style="left:1310px;top:300px" width="115" height="20" viewBox="0 0 115 20" fill="none"><path d="M6 10.500h10" stroke="#222" stroke-width="1.200"/><rect x="51.500" y="5.500" width="9" height="9" stroke="#c8c8c8"/><path d="M97 5l10 10M107 5l-10 10" stroke="#111" stroke-width="1.100"/></svg>
<div style="position:absolute;left:826.7px;top:330.7px;width:119px;height:536px;background:#fff;border:1px solid #6f6f6f;box-sizing:border-box;box-shadow:inset 1px 1px 0 #a0a0a0,inset -1px -1px 0 #e3e3e3"></div>
<div style="position:absolute;left:852px;top:333.5px;width:88.5px;height:20px;background:#efefef"></div>
<div style="position:absolute;left:829px;top:385px;width:111.5px;height:1px;background:#8a8a8a"></div>
<div style="position:absolute;left:829px;top:553px;width:111.5px;height:1px;background:#8a8a8a"></div>
<span class="t" style="left:854.3px;top:337.42px;letter-spacing:0.13px;color:#111;">Diagnostics</span>
<svg class="a" style="left:831px;top:333.4px" width="21" height="21" viewBox="0 0 21 21"><path d="M2.500 18.500l6.500-7" stroke="#b9a273" stroke-width="3.200" stroke-linecap="round"/><path d="M2.500 18.500l6.500-7" stroke="#8a7a5a" stroke-width="1" stroke-linecap="round"/><circle cx="13" cy="7" r="5.500" fill="#cfe6fb" stroke="#3c74b8" stroke-width="1.600"/><path d="M10 5.500a4 4 0 0 1 4-2" stroke="#fff" stroke-width="1.300" fill="none"/></svg>
<span class="t" style="left:854.3px;top:358.42px;letter-spacing:0.19px;color:#111;">Combined Fix</span>
<svg class="a" style="left:832px;top:354.4px" width="20" height="20" viewBox="0 0 20 20"><path d="M6 3l7-1.500 5 2v10l-6 2.500-6-2z" fill="#dfe1ee" stroke="#8a8db5"/><path d="M3 5.500l7-1.500 5 2v10l-6 2.500-6-2z" fill="#cfd2e8" stroke="#7c80ae"/><path d="M3 5.500l6 2 6-1.500M9 7.500v11" fill="none" stroke="#7c80ae"/></svg>
<span class="t" style="left:854.3px;top:400.42px;letter-spacing:0.31px;color:#111;">Normals</span>
<svg class="a" style="left:831.5px;top:396.4px" width="20" height="20" viewBox="0 0 20 20"><path d="M2 5.500l8-3.500 8 3v9.500l-8 4-8-3.500z" fill="#cfd3f0" stroke="#3d427a" stroke-width="1.100" stroke-linejoin="round"/><path d="M10 9l8-4v9.500l-8 4z" fill="#8c92d2"/><path d="M2 5.500l8 3.500v9.500l-8-3.500z" fill="#dfe2f7"/><path d="M2 5.500l8-3.500 8 3-8 4z" fill="#eceefb"/><path d="M2 5.500l8 3.500 8-4M10 9v9.500" fill="none" stroke="#3d427a" stroke-width="1"/><path d="M2 5.500l8-3.500 8 3v9.500l-8 4-8-3.500z" fill="none" stroke="#3d427a" stroke-width="1.100" stroke-linejoin="round"/><path d="M10.500 9.300l7-3.500v8.700l-7 3.500z" fill="#d9221c"/></svg>
<span class="t" style="left:854.3px;top:421.42px;letter-spacing:0.29px;color:#111;">Stitching</span>
<svg class="a" style="left:831.5px;top:417.4px" width="20" height="20" viewBox="0 0 20 20"><path d="M2 5.500l8-3.500 8 3v9.500l-8 4-8-3.500z" fill="#cfd3f0" stroke="#3d427a" stroke-width="1.100" stroke-linejoin="round"/><path d="M10 9l8-4v9.500l-8 4z" fill="#8c92d2"/><path d="M2 5.500l8 3.500v9.500l-8-3.500z" fill="#dfe2f7"/><path d="M2 5.500l8-3.500 8 3-8 4z" fill="#eceefb"/><path d="M2 5.500l8 3.500 8-4M10 9v9.500" fill="none" stroke="#3d427a" stroke-width="1"/><path d="M2 5.500l8-3.500 8 3v9.500l-8 4-8-3.500z" fill="none" stroke="#3d427a" stroke-width="1.100" stroke-linejoin="round"/><path d="M6 5.500l7 2.500" stroke="#e8e34a" stroke-width="2.200"/></svg>
<span class="t" style="left:854.3px;top:442.42px;letter-spacing:-0.11px;color:#111;">Noise Shells</span>
<svg class="a" style="left:831.5px;top:438.4px" width="20" height="20" viewBox="0 0 20 20"><path d="M2 5.500l8-3.500 8 3v9.500l-8 4-8-3.500z" fill="#cfd3f0" stroke="#3d427a" stroke-width="1.100" stroke-linejoin="round"/><path d="M10 9l8-4v9.500l-8 4z" fill="#8c92d2"/><path d="M2 5.500l8 3.500v9.500l-8-3.500z" fill="#dfe2f7"/><path d="M2 5.500l8-3.500 8 3-8 4z" fill="#eceefb"/><path d="M2 5.500l8 3.500 8-4M10 9v9.500" fill="none" stroke="#3d427a" stroke-width="1"/><path d="M2 5.500l8-3.500 8 3v9.500l-8 4-8-3.500z" fill="none" stroke="#3d427a" stroke-width="1.100" stroke-linejoin="round"/><circle cx="5" cy="9" r="1.300" fill="#333"/><circle cx="7" cy="13" r="1.300" fill="#333"/><circle cx="13" cy="11" r="1.300" fill="#333"/><circle cx="15" cy="8" r="1.200" fill="#333"/><circle cx="9" cy="5" r="1.200" fill="#333"/><circle cx="13" cy="15" r="1.200" fill="#333"/><circle cx="4" cy="13.500" r="1" fill="#333"/></svg>
<span class="t" style="left:854.3px;top:463.42px;color:#111;">Holes</span>
<svg class="a" style="left:831.5px;top:459.4px" width="20" height="20" viewBox="0 0 20 20"><path d="M2 5.500l8-3.500 8 3v9.500l-8 4-8-3.500z" fill="#cfd3f0" stroke="#3d427a" stroke-width="1.100" stroke-linejoin="round"/><path d="M10 9l8-4v9.500l-8 4z" fill="#8c92d2"/><path d="M2 5.500l8 3.500v9.500l-8-3.500z" fill="#dfe2f7"/><path d="M2 5.500l8-3.500 8 3-8 4z" fill="#eceefb"/><path d="M2 5.500l8 3.500 8-4M10 9v9.500" fill="none" stroke="#3d427a" stroke-width="1"/><path d="M2 5.500l8-3.500 8 3v9.500l-8 4-8-3.500z" fill="none" stroke="#3d427a" stroke-width="1.100" stroke-linejoin="round"/><path d="M3 5.500l7-3 7 2.600-7 3.400z" fill="#d9221c"/></svg>
<span class="t" style="left:854.3px;top:484.42px;letter-spacing:-0.15px;color:#111;">Triangles</span>
<svg class="a" style="left:831.5px;top:480.4px" width="20" height="20" viewBox="0 0 20 20"><path d="M2 5.500l8-3.500 8 3v9.500l-8 4-8-3.500z" fill="#cfd3f0" stroke="#3d427a" stroke-width="1.100" stroke-linejoin="round"/><path d="M10 9l8-4v9.500l-8 4z" fill="#8c92d2"/><path d="M2 5.500l8 3.500v9.500l-8-3.500z" fill="#dfe2f7"/><path d="M2 5.500l8-3.500 8 3-8 4z" fill="#eceefb"/><path d="M2 5.500l8 3.500 8-4M10 9v9.500" fill="none" stroke="#3d427a" stroke-width="1"/><path d="M2 5.500l8-3.500 8 3v9.500l-8 4-8-3.500z" fill="none" stroke="#3d427a" stroke-width="1.100" stroke-linejoin="round"/><path d="M2 5.500l8 13M18 5l-8 4-4 7.500M10 2l0 7" stroke="#4a4e90" stroke-width="0.9" fill="none"/></svg>
<span class="t" style="left:854.3px;top:505.42px;letter-spacing:-0.04px;color:#111;">Overlaps</span>
<svg class="a" style="left:831.5px;top:501.4px" width="20" height="20" viewBox="0 0 20 20"><path d="M2 5.500l8-3.500 8 3v9.500l-8 4-8-3.500z" fill="#cfd3f0" stroke="#3d427a" stroke-width="1.100" stroke-linejoin="round"/><path d="M10 9l8-4v9.500l-8 4z" fill="#8c92d2"/><path d="M2 5.500l8 3.500v9.500l-8-3.500z" fill="#dfe2f7"/><path d="M2 5.500l8-3.500 8 3-8 4z" fill="#eceefb"/><path d="M2 5.500l8 3.500 8-4M10 9v9.500" fill="none" stroke="#3d427a" stroke-width="1"/><path d="M2 5.500l8-3.500 8 3v9.500l-8 4-8-3.500z" fill="none" stroke="#3d427a" stroke-width="1.100" stroke-linejoin="round"/><path d="M7 4v11l5 2.500v-8" fill="none" stroke="#3d427a" stroke-width="0.900"/></svg>
<span class="t" style="left:854.3px;top:526.42px;letter-spacing:-0.39px;color:#111;">Shells</span>
<svg class="a" style="left:831.5px;top:522.4px" width="20" height="20" viewBox="0 0 20 20"><path d="M2 5.500l8-3.500 8 3v9.500l-8 4-8-3.500z" fill="#cfd3f0" stroke="#3d427a" stroke-width="1.100" stroke-linejoin="round"/><path d="M10 9l8-4v9.500l-8 4z" fill="#8c92d2"/><path d="M2 5.500l8 3.500v9.500l-8-3.500z" fill="#dfe2f7"/><path d="M2 5.500l8-3.500 8 3-8 4z" fill="#eceefb"/><path d="M2 5.500l8 3.500 8-4M10 9v9.500" fill="none" stroke="#3d427a" stroke-width="1"/><path d="M2 5.500l8-3.500 8 3v9.500l-8 4-8-3.500z" fill="none" stroke="#3d427a" stroke-width="1.100" stroke-linejoin="round"/></svg>
<span class="t" style="left:854.3px;top:568.42px;letter-spacing:0.05px;color:#111;">Profiles</span>
<svg class="a" style="left:836px;top:563.4px" width="15" height="20" viewBox="0 0 15 20"><path d="M1.500 1.500h8l4 4v13h-12z" fill="#fff" stroke="#5b93c9" stroke-width="1"/><path d="M9.500 1.500v4h4" fill="#dbe9f7" stroke="#5b93c9"/><path d="M4 8h6M4 10.500h6M4 13h6M4 15.500h4" stroke="#3f7fc0" stroke-width="1"/></svg>
<span class="t" style="left:956.7px;top:329.22px;letter-spacing:-0.15px;color:#111;">Current Part:</span>
<div style="position:absolute;left:1030.7px;top:330.7px;width:350px;height:20.3px;background:#e3e3e3;border:1px solid #adadad;box-sizing:border-box"></div>
<span class="t" style="left:1035px;top:334.22px;letter-spacing:-0.04px;color:#111;">0.5-thick- Little Krishna Pendant File-3 - Copy</span>
<svg class="a" style="left:1367px;top:337.500px" width="10" height="7" fill="none" stroke="#333" stroke-width="1.100"><path d="M1 1l4 4 4-4"/></svg>
<div style="position:absolute;left:1386px;top:331.7px;width:44px;height:21.3px;background:#cccccc;border:1px solid #bfbfbf;box-sizing:border-box"></div>
<span class="t" style="left:1396.7px;top:334.92px;letter-spacing:-0.45px;color:#9a9a9a;">Next</span>
<div style="position:absolute;left:954.3px;top:362.3px;width:472.4px;height:381px;background:#fff;border:1px solid #acacac;box-sizing:border-box;border-radius:3px;box-shadow:1px 1px 1px rgba(0,0,0,0.08)"></div>
<div style="position:absolute;left:964px;top:389px;width:452.7px;height:67px;border:1px solid #e2e2e2;box-sizing:border-box;"></div>
<div style="position:absolute;left:970px;top:387px;width:39px;height:5px;background:#fff"></div>
<span class="t" style="left:973.3px;top:381.52px;letter-spacing:-0.42px;color:#111;">Advice</span>
<span class="t" style="left:977.3px;top:402.42px;letter-spacing:0.03px;color:#111;">Go to the 'Shells' page to unify shells or manually merge some parts.</span>
<div style="position:absolute;left:1391px;top:402.3px;width:15.7px;height:46px;background:#f0f0f0"></div>
<svg class="a" style="left:1394px;top:407px" width="10" height="38" fill="none" stroke="#bdbdbd" stroke-width="1.300"><path d="M1.500 6l3.500-3.500 3.500 3.500M1.500 31l3.500 3.500 3.500-3.500"/></svg>
<div style="position:absolute;left:964px;top:469px;width:452.7px;height:264px;border:1px solid #e2e2e2;box-sizing:border-box;"></div>
<div style="position:absolute;left:970px;top:467px;width:66px;height:5px;background:#fff"></div>
<span class="t" style="left:973.3px;top:461.52px;letter-spacing:-0.04px;color:#111;">Diagnostics</span>
<div style="position:absolute;left:974px;top:484px;width:12.5px;height:12.5px;border:1px solid #333;box-sizing:border-box;background:#fff"></div>
<span class="t" style="left:990.3px;top:482.52px;letter-spacing:-0.16px;color:#111;">Full Analysis</span>
<div style="position:absolute;left:994px;top:513.3px;width:12.5px;height:12.5px;border:1px solid #333;box-sizing:border-box;background:#fff"></div><svg class="a" style="left:994px;top:513.3px" width="12.5" height="12.5" viewBox="0 0 11 11" fill="none" stroke="#222" stroke-width="1.1"><path d="M2.2 5.6l2.2 2.3 4.4-5"/></svg>
<svg class="a" style="left:1013px;top:511.3px" width="18" height="16" viewBox="0 0 16 15"><path d="M0.800 8.200c1.800-0.600 3.400 0.600 4.400 2.500 2.400-4.600 5.600-8 10.200-10.200-3.800 4-6.800 8.600-9.400 14.300-1.400-3-3-5-5.200-6.600z" fill="#1f9a58" stroke="#12703c" stroke-width="1.100" stroke-linejoin="round"/></svg>
<span class="t" style="left:1034px;top:511.99px;font-size:11px;color:#111;font-weight:bold;">0</span>
<span class="t" style="left:1079.3px;top:511.82px;letter-spacing:0.05px;color:#111;">inverted normals detected</span>
<div style="position:absolute;left:994px;top:533.3px;width:12.5px;height:12.5px;border:1px solid #333;box-sizing:border-box;background:#fff"></div><svg class="a" style="left:994px;top:533.3px" width="12.5" height="12.5" viewBox="0 0 11 11" fill="none" stroke="#222" stroke-width="1.1"><path d="M2.2 5.6l2.2 2.3 4.4-5"/></svg>
<svg class="a" style="left:1013px;top:531.3px" width="18" height="16" viewBox="0 0 16 15"><path d="M0.800 8.200c1.800-0.600 3.400 0.600 4.400 2.500 2.400-4.600 5.600-8 10.200-10.200-3.800 4-6.800 8.600-9.400 14.300-1.400-3-3-5-5.200-6.600z" fill="#1f9a58" stroke="#12703c" stroke-width="1.100" stroke-linejoin="round"/></svg>
<span class="t" style="left:1034px;top:531.99px;font-size:11px;color:#111;font-weight:bold;">0</span>
<span class="t" style="left:1079.3px;top:531.82px;letter-spacing:0.03px;color:#111;">bad edges detected</span>
<svg class="a" style="left:1033px;top:551.3px" width="18" height="16" viewBox="0 0 16 15"><path d="M0.800 8.200c1.800-0.600 3.400 0.600 4.400 2.500 2.400-4.600 5.600-8 10.200-10.200-3.800 4-6.800 8.600-9.400 14.300-1.400-3-3-5-5.200-6.600z" fill="#1f9a58" stroke="#12703c" stroke-width="1.100" stroke-linejoin="round"/></svg>
<span class="t" style="left:1054px;top:551.99px;font-size:11px;color:#111;font-weight:bold;">0</span>
<span class="t" style="left:1099.3px;top:551.82px;letter-spacing:0.13px;color:#111;">bad contours detected</span>
<div style="position:absolute;left:1014px;top:573.3px;width:12.5px;height:12.5px;border:1px solid #333;box-sizing:border-box;background:#fff"></div><svg class="a" style="left:1014px;top:573.3px" width="12.5" height="12.5" viewBox="0 0 11 11" fill="none" stroke="#222" stroke-width="1.1"><path d="M2.2 5.6l2.2 2.3 4.4-5"/></svg>
<svg class="a" style="left:1033px;top:571.3px" width="18" height="16" viewBox="0 0 16 15"><path d="M0.800 8.200c1.800-0.600 3.400 0.600 4.400 2.500 2.400-4.600 5.600-8 10.200-10.200-3.800 4-6.800 8.600-9.400 14.300-1.400-3-3-5-5.200-6.600z" fill="#1f9a58" stroke="#12703c" stroke-width="1.100" stroke-linejoin="round"/></svg>
<span class="t" style="left:1054px;top:571.99px;font-size:11px;color:#111;font-weight:bold;">0</span>
<span class="t" style="left:1099.3px;top:571.82px;letter-spacing:0.01px;color:#111;">near bad edges detected</span>
<div style="position:absolute;left:1014px;top:593.3px;width:12.5px;height:12.5px;border:1px solid #333;box-sizing:border-box;background:#fff"></div><svg class="a" style="left:1014px;top:593.3px" width="12.5" height="12.5" viewBox="0 0 11 11" fill="none" stroke="#222" stroke-width="1.1"><path d="M2.2 5.6l2.2 2.3 4.4-5"/></svg>
<svg class="a" style="left:1033px;top:591.3px" width="18" height="16" viewBox="0 0 16 15"><path d="M0.800 8.200c1.800-0.600 3.400 0.600 4.400 2.500 2.400-4.600 5.600-8 10.200-10.200-3.800 4-6.800 8.600-9.400 14.300-1.400-3-3-5-5.200-6.600z" fill="#1f9a58" stroke="#12703c" stroke-width="1.100" stroke-linejoin="round"/></svg>
<span class="t" style="left:1054px;top:591.99px;font-size:11px;color:#111;font-weight:bold;">0</span>
<span class="t" style="left:1099.3px;top:591.82px;letter-spacing:0.08px;color:#111;">planar holes detected</span>
<div style="position:absolute;left:994px;top:613.3px;width:12.5px;height:12.5px;border:1px solid #333;box-sizing:border-box;background:#fff"></div><svg class="a" style="left:994px;top:613.3px" width="12.5" height="12.5" viewBox="0 0 11 11" fill="none" stroke="#222" stroke-width="1.1"><path d="M2.2 5.6l2.2 2.3 4.4-5"/></svg>
<svg class="a" style="left:1013.5px;top:612.8px" width="18" height="16" viewBox="0 0 16 15"><path d="M1.500 2.500l2.500-1.500c1.500 1.500 2.500 3 3.500 4.500 1.500-2 3.500-3.500 6-4.500l1 1c-2.500 1.500-4 3.500-5.500 5.500 1.500 2.200 3.500 4 6.500 5l-2.500 2c-2.500-1-4-2.500-5.500-4.500-1.500 2-2.500 3.500-3.500 5l-3-0.500c1-2.500 2.500-4.500 4.500-6.500-1-2-2.500-4-4-5.500z" fill="#e3342b"/></svg>
<span class="t" style="left:1034px;top:611.99px;font-size:11px;color:#111;font-weight:bold;">2</span>
<span class="t" style="left:1079.3px;top:611.82px;letter-spacing:-0.02px;color:#111;">shells detected</span>
<svg class="a" style="left:1033px;top:631.3px" width="18" height="16" viewBox="0 0 16 15"><path d="M0.800 8.200c1.800-0.600 3.400 0.600 4.400 2.500 2.400-4.600 5.600-8 10.200-10.200-3.800 4-6.800 8.600-9.400 14.300-1.400-3-3-5-5.200-6.600z" fill="#1f9a58" stroke="#12703c" stroke-width="1.100" stroke-linejoin="round"/></svg>
<span class="t" style="left:1054px;top:631.99px;font-size:11px;color:#111;font-weight:bold;">0</span>
<span class="t" style="left:1099.3px;top:631.82px;letter-spacing:0.02px;color:#111;">possible noise shells detected</span>
<div style="position:absolute;left:994px;top:653.3px;width:12.5px;height:12.5px;border:1px solid #333;box-sizing:border-box;background:#fff"></div>
<div style="position:absolute;left:1020.3px;top:657.8px;width:3.4px;height:3.4px;background:#2a2ab8;border-radius:50%"></div>
<span class="t" style="left:1079.3px;top:651.82px;letter-spacing:0.14px;color:#111;">overlapping triangles detected</span>
<div style="position:absolute;left:994px;top:673.3px;width:12.5px;height:12.5px;border:1px solid #333;box-sizing:border-box;background:#fff"></div>
<div style="position:absolute;left:1020.3px;top:677.8px;width:3.4px;height:3.4px;background:#2a2ab8;border-radius:50%"></div>
<span class="t" style="left:1079.3px;top:671.82px;letter-spacing:0.12px;color:#111;">intersecting triangles detected</span>
<div style="position:absolute;left:1296px;top:700px;width:110.7px;height:23.3px;background:#e1e1e1;border:2px solid #0078d7;box-sizing:border-box"></div>
<svg class="a" style="left:1299px;top:702px" width="21" height="19" viewBox="0 0 21 19"><path d="M2.500 16.500l6-6.500" stroke="#c9a86a" stroke-width="3" stroke-linecap="round"/><circle cx="12.500" cy="6.500" r="5" fill="#e3f0fc" stroke="#7aa7d6" stroke-width="1.400"/></svg>
<span class="t" style="left:1342.3px;top:704.82px;letter-spacing:-0.67px;color:#111;">Update</span>
<div style="position:absolute;left:1136px;top:843.3px;width:149.7px;height:24px;background:#e1e1e1;border:1px solid #adadad;box-sizing:border-box"></div>
<span class="t" style="left:1186px;top:849.02px;letter-spacing:-0.44px;color:#111;">Follow Advice</span>
<div style="position:absolute;left:1292px;top:843.3px;width:57.7px;height:24px;background:#e1e1e1;border:1px solid #adadad;box-sizing:border-box"></div>
<span class="t" style="left:1307.3px;top:849.02px;letter-spacing:-0.6px;color:#111;">Close</span>
<div style="position:absolute;left:1357px;top:843.3px;width:57.7px;height:24px;background:#e1e1e1;border:1px solid #adadad;box-sizing:border-box"></div>
<span class="t" style="left:1374px;top:849.02px;letter-spacing:-0.12px;color:#111;">Help</span>
<svg class="a" style="left:1139px;top:845px" width="22" height="20" viewBox="0 0 22 20"><path d="M1.500 7h9.500v-5l9.500 8-9.500 8v-5h-9.500z" fill="#5fd13a" stroke="#2e8f1a" stroke-width="1.200" stroke-linejoin="round"/><path d="M3 8.500h9.500v-3.200l5.500 4.700" fill="none" stroke="#b9f59e" stroke-width="1.200"/></svg>
<svg class="a" style="left:1422px;top:859px" width="12" height="12" stroke="#b5b5b5" stroke-width="1"><path d="M11.500 1l-10.500 10.500M11.500 5l-6.500 6.500M11.500 9l-2.500 2.500"/></svg>
</body></html>
